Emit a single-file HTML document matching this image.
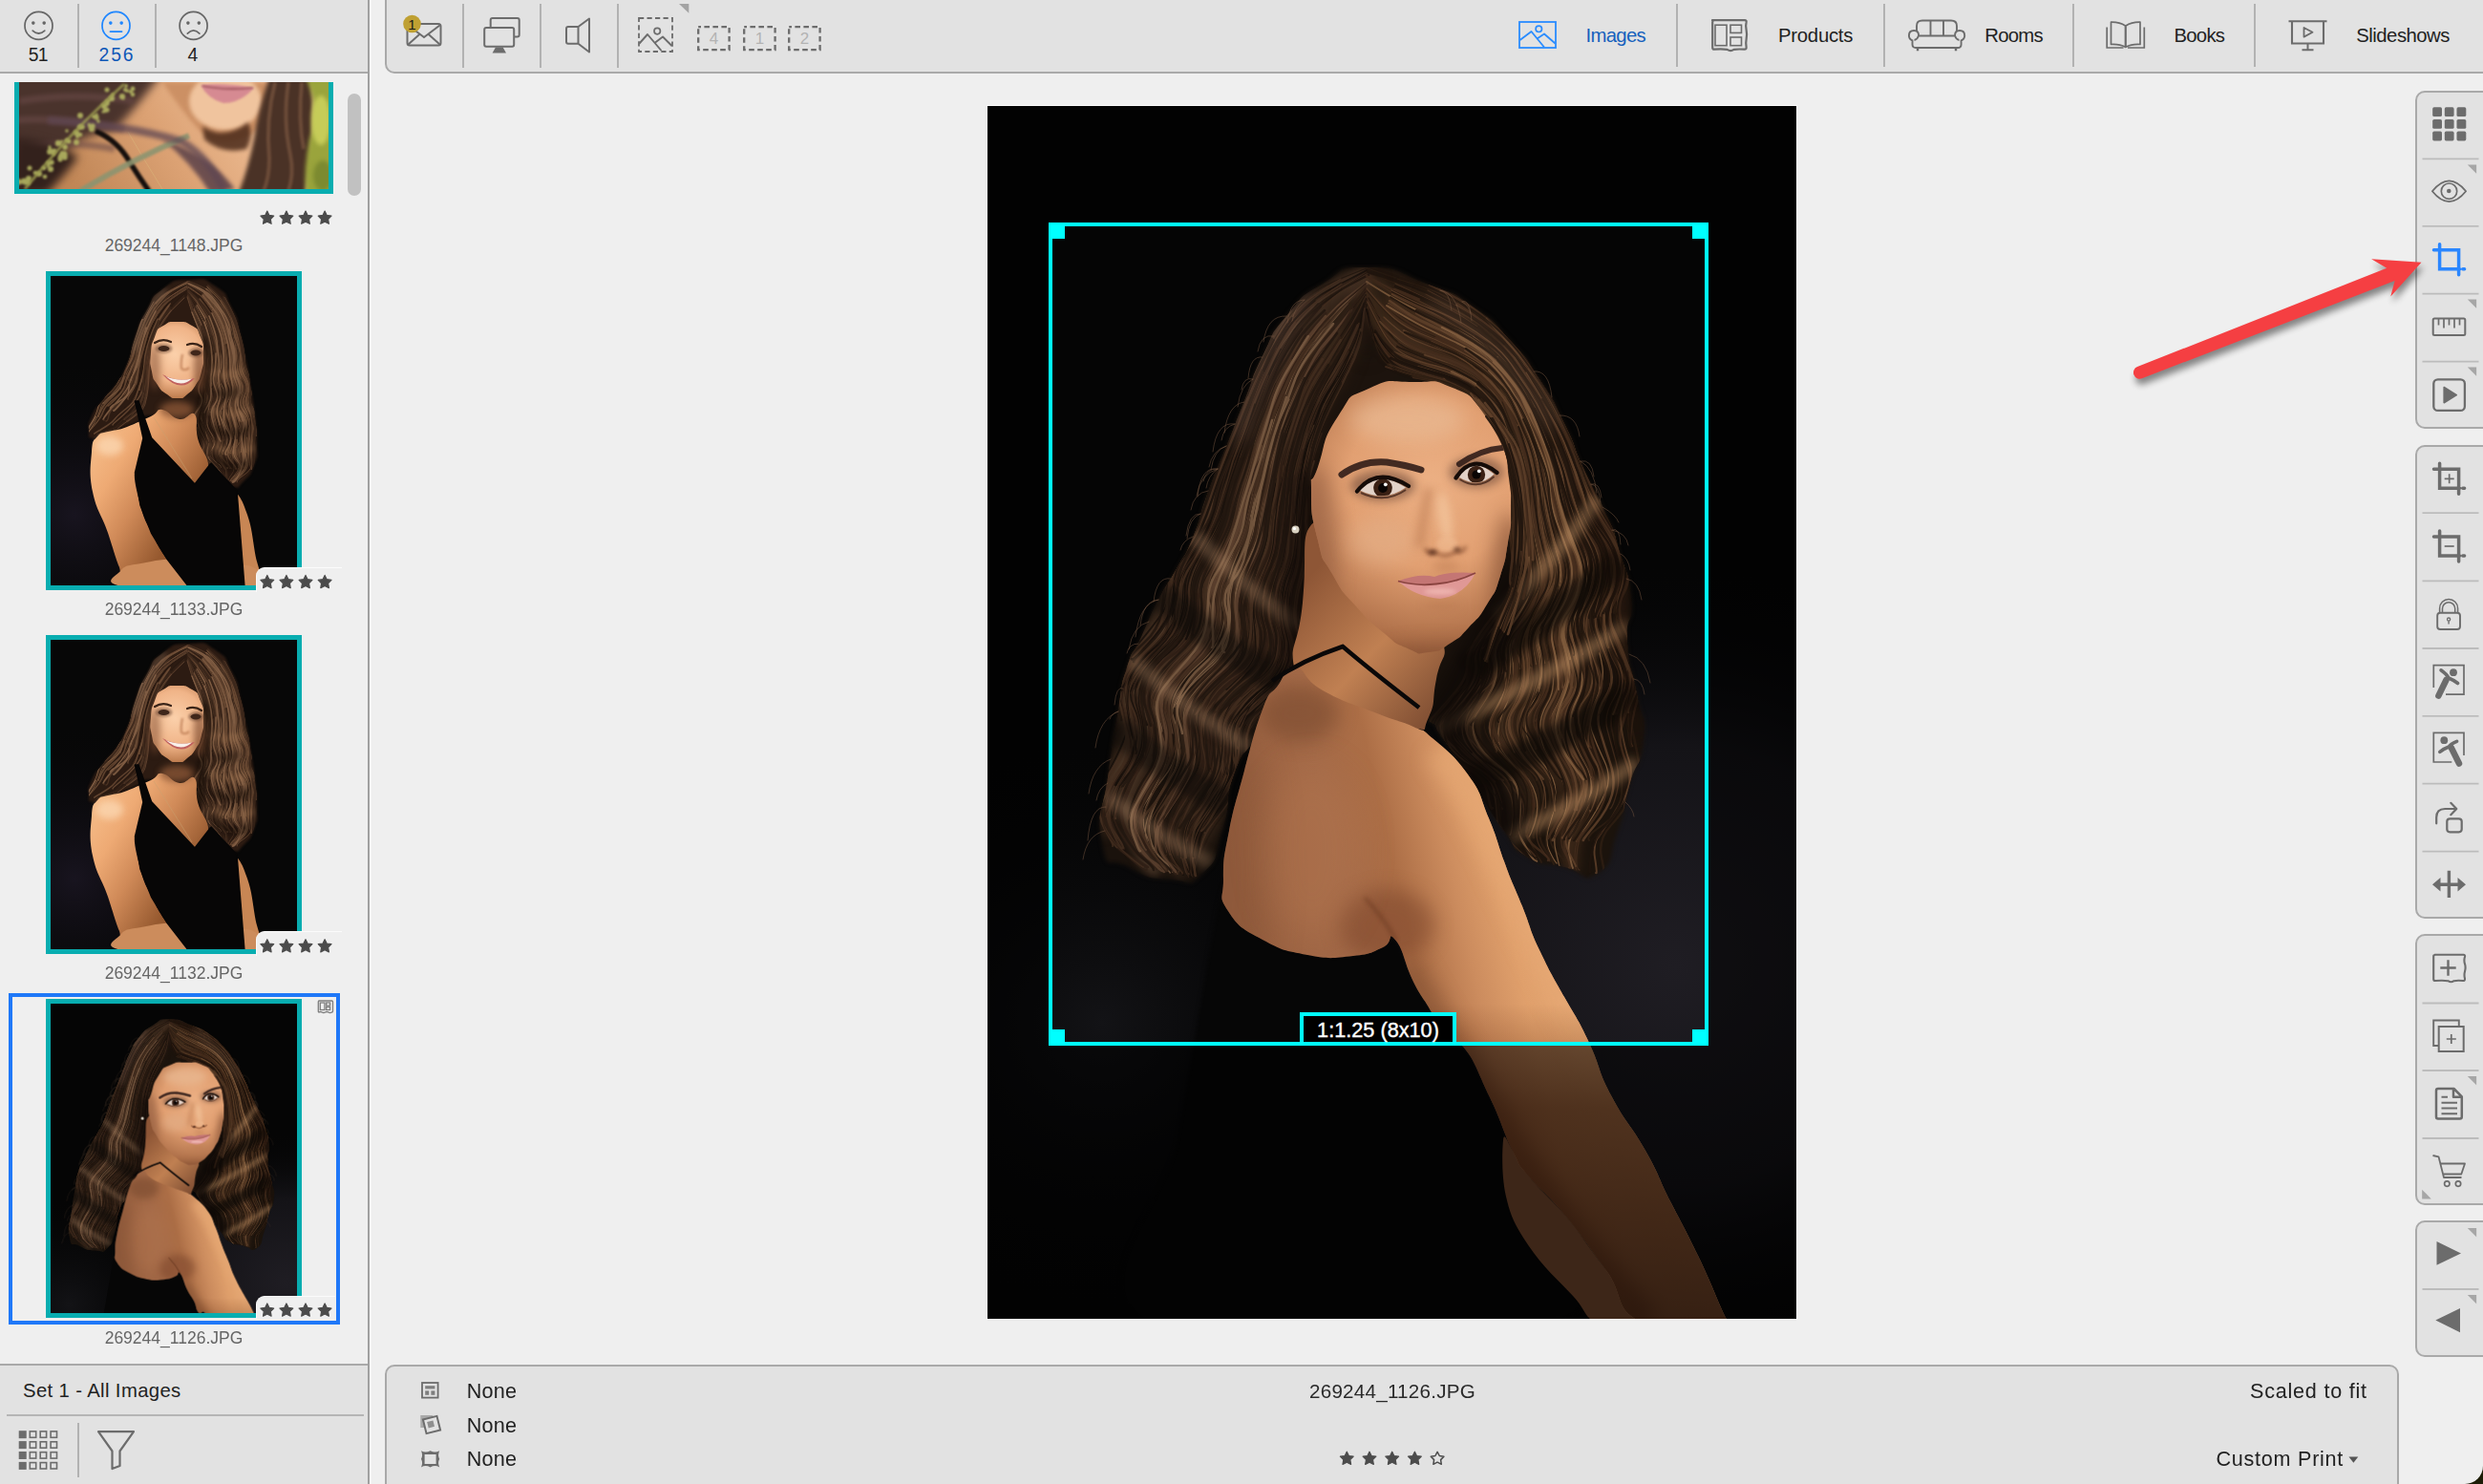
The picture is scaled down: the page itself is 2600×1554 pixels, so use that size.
<!DOCTYPE html>
<html><head><meta charset="utf-8">
<style>
*{box-sizing:border-box;margin:0;padding:0}
html,body{width:2600px;height:1554px;overflow:hidden}
body{background:#dedede;font-family:"Liberation Sans",sans-serif;position:relative}
#win{position:absolute;left:0;top:0;width:2600px;height:1554px;background:#efefef;border-radius:0 0 19px 0;overflow:hidden}
.abs{position:absolute}
.pnl{position:absolute;background:#e2e2e2;border:2px solid #a9a9a9}
.vs{position:absolute;width:2px;background:#bdbdbd}
.hs{position:absolute;height:2px;background:#bdbdbd}
.t{position:absolute;white-space:nowrap;color:#222;line-height:1}
.fn{position:absolute;white-space:nowrap;color:#666;font-size:17.5px;line-height:1;text-align:center;width:200px}
svg{position:absolute;overflow:visible}
.teal{position:absolute;background:#08adb0}
.ph{position:absolute;overflow:hidden;background:#050505}
.badge{position:absolute;background:#efefef;border-radius:9px 0 0 0}
</style></head><body>
<div class="abs" style="left:2570px;top:1524px;width:30px;height:30px;background:linear-gradient(135deg,#55551c,#1c1c06 70%)"></div>
<div id="win">
<!-- LEFT PANEL -->
<div class="abs" id="ltop" style="left:0;top:0;width:385px;height:77px;background:#e2e2e2;border-bottom:2px solid #a9a9a9"></div>
<div class="abs" id="lbot" style="left:0;top:1428px;width:385px;height:126px;background:#e2e2e2;border-top:2px solid #a9a9a9"></div>
<div class="abs" id="ldiv" style="left:385px;top:0;width:2px;height:1554px;background:#a0a0a0"></div>
<div class="abs" style="left:387px;top:0;width:2px;height:1554px;background:#f6f6f6"></div>
<!-- TOP TOOLBAR -->
<div class="pnl" id="ttb" style="left:403px;top:-4px;width:2210px;height:81px;border-radius:0 0 0 10px"></div>
<!-- INFO PANEL -->
<div class="pnl" id="info" style="left:403px;top:1429px;width:2109px;height:140px;border-radius:10px 10px 0 0"></div>
<!-- RIGHT TOOLBARS -->
<div class="pnl" id="rt1" style="left:2529px;top:95px;width:90px;height:354px;border-radius:10px 0 0 10px"></div>
<div class="pnl" id="rt2" style="left:2529px;top:466px;width:90px;height:496px;border-radius:10px 0 0 10px"></div>
<div class="pnl" id="rt3" style="left:2529px;top:978px;width:90px;height:284px;border-radius:10px 0 0 10px"></div>
<div class="pnl" id="rt4" style="left:2529px;top:1278px;width:90px;height:143px;border-radius:10px 0 0 10px"></div>

<svg style="left:0px;top:0px" width="385" height="76" viewBox="0 0 385 76" ><circle cx="40.5" cy="26.9" r="14.5" fill="none" stroke="#666" stroke-width="1.7"/><circle cx="34.8" cy="24.099999999999998" r="1.8" fill="#666"/><circle cx="46.2" cy="24.099999999999998" r="1.8" fill="#666"/><path d="M34.2,32.1 Q40.5,37.9 46.8,32.1" fill="none" stroke="#666" stroke-width="1.7" stroke-linecap="round"/><circle cx="121.5" cy="26.9" r="14.5" fill="none" stroke="#1e86ff" stroke-width="1.7"/><circle cx="115.8" cy="24.099999999999998" r="1.8" fill="#1e86ff"/><circle cx="127.2" cy="24.099999999999998" r="1.8" fill="#1e86ff"/><path d="M115.5,33.1 H127.5" fill="none" stroke="#1e86ff" stroke-width="1.9" stroke-linecap="round"/><circle cx="202.6" cy="26.9" r="14.5" fill="none" stroke="#666" stroke-width="1.7"/><circle cx="196.9" cy="24.099999999999998" r="1.8" fill="#666"/><circle cx="208.29999999999998" cy="24.099999999999998" r="1.8" fill="#666"/><path d="M196.29999999999998,35.099999999999994 Q202.6,28.5 208.9,35.099999999999994" fill="none" stroke="#666" stroke-width="1.7" stroke-linecap="round"/></svg>
<div class="t" style="left:29.7px;top:45.6px;font-size:19.3px;line-height:23.16px;letter-spacing:-0.70px;color:#222;">51</div>
<div class="t" style="left:103.5px;top:45.6px;font-size:19.3px;line-height:23.16px;letter-spacing:1.94px;color:#0d57b7;">256</div>
<div class="t" style="left:196.5px;top:45.6px;font-size:19.3px;line-height:23.16px;letter-spacing:0.00px;color:#222;">4</div>
<div class="vs" style="left:81px;top:4px;height:67px;background:#b2b2b2"></div><div class="vs" style="left:161.7px;top:4px;height:67px;background:#b2b2b2"></div>
<svg width="0" height="0" style="left:0;top:0"><defs>
<radialGradient id="bgl" cx="720" cy="900" r="420" gradientUnits="userSpaceOnUse"><stop offset="0" stop-color="#1f1d23"/><stop offset="0.55" stop-color="#141317"/><stop offset="1" stop-color="#050506" stop-opacity="0"/></radialGradient>
<radialGradient id="bgl2" cx="120" cy="960" r="300" gradientUnits="userSpaceOnUse"><stop offset="0" stop-color="#131316"/><stop offset="1" stop-color="#050506" stop-opacity="0"/></radialGradient>
<linearGradient id="hairg" x1="150" y1="200" x2="680" y2="750" gradientUnits="userSpaceOnUse"><stop offset="0" stop-color="#1f160f"/><stop offset="0.5" stop-color="#1a120c"/><stop offset="1" stop-color="#1b130c"/></linearGradient>
<radialGradient id="faceg" cx="465" cy="395" r="175" gradientUnits="userSpaceOnUse"><stop offset="0" stop-color="#ecb084"/><stop offset="0.5" stop-color="#e2a072"/><stop offset="1" stop-color="#a86a44"/></radialGradient>
<linearGradient id="neckg" x1="330" y1="500" x2="480" y2="640" gradientUnits="userSpaceOnUse"><stop offset="0" stop-color="#8e5636"/><stop offset="0.5" stop-color="#c08052"/><stop offset="1" stop-color="#7a4a30"/></linearGradient>
<linearGradient id="bodyg" x1="250" y1="770" x2="560" y2="700" gradientUnits="userSpaceOnUse"><stop offset="0" stop-color="#9a6242"/><stop offset="0.35" stop-color="#a46a48"/><stop offset="0.52" stop-color="#ac6e46"/><stop offset="0.7" stop-color="#cc8c5e"/><stop offset="0.85" stop-color="#e0a06c"/><stop offset="1" stop-color="#e4a672"/></linearGradient>
<linearGradient id="armdk" x1="0" y1="940" x2="0" y2="1270" gradientUnits="userSpaceOnUse"><stop offset="0" stop-color="#5a2408" stop-opacity="0"/><stop offset="0.33" stop-color="#5a2408" stop-opacity="0.5"/><stop offset="0.67" stop-color="#4a1c06" stop-opacity="0.62"/><stop offset="1" stop-color="#3a1606" stop-opacity="0.7"/></linearGradient>
<filter color-interpolation-filters="sRGB" id="b2" filterUnits="userSpaceOnUse" x="-60" y="-60" width="970" height="1390"><feGaussianBlur stdDeviation="2"/></filter>
<filter color-interpolation-filters="sRGB" id="b5" filterUnits="userSpaceOnUse" x="-60" y="-60" width="970" height="1390"><feGaussianBlur stdDeviation="5"/></filter>
<filter color-interpolation-filters="sRGB" id="b10" filterUnits="userSpaceOnUse" x="-60" y="-60" width="970" height="1390"><feGaussianBlur stdDeviation="10"/></filter>
<filter color-interpolation-filters="sRGB" id="b18" filterUnits="userSpaceOnUse" x="-60" y="-60" width="970" height="1390"><feGaussianBlur stdDeviation="18"/></filter>
<clipPath id="hairclip"><path d="M398,169C435,169 425,173 462,187C499,201 481,191 510,211C539,231 525,221 548,246C571,271 560,258 579,287C598,316 590,303 605,334C620,365 610,349 624,379C638,409 633,394 646,423C659,452 653,436 662,467C671,498 671,483 674,515C677,547 668,528 670,562C672,596 674,582 680,616C686,650 690,632 687,664C684,696 681,680 672,712C663,744 671,729 660,759C649,789 659,790 640,803C621,816 629,803 604,797C579,791 586,799 565,786C544,773 559,784 541,759C523,734 531,744 510,712C489,680 496,688 478,664C460,640 481,655 455,640C429,625 442,633 400,620C358,607 362,597 330,600C298,603 319,609 303,630C287,651 296,639 281,662C266,685 270,668 258,700C246,732 257,725 246,759C235,793 244,786 226,803C208,820 218,812 192,810C166,808 172,810 148,797C124,784 127,806 120,772C113,738 121,743 127,696C133,649 131,668 137,632C143,596 138,613 146,588C154,563 150,580 161,556C172,532 167,539 180,515C193,491 187,504 199,483C211,462 204,478 215,452C226,426 219,436 231,404C243,372 237,389 250,357C263,325 256,341 269,309C282,277 273,292 288,262C303,232 292,245 313,220C334,195 323,203 351,186C379,169 361,169 398,169Z"/></clipPath>
<clipPath id="faceclip"><path d="M446,289C475,289 463,285 487,295C511,305 502,301 519,320C536,339 529,330 538,353C547,376 543,367 546,390C549,413 548,400 548,422C548,444 549,434 545,457C541,480 544,470 537,492C530,514 534,504 523,522C512,540 517,532 504,546C491,560 498,554 484,563C470,572 477,570 462,572C447,574 456,575 440,568C424,561 432,566 414,551C396,536 404,544 386,524C368,504 374,513 361,490C348,467 353,484 346,455C339,426 339,430 339,404C339,378 337,404 346,378C355,352 349,352 367,325C385,298 373,308 399,296C425,284 417,289 446,289Z"/></clipPath>
<clipPath id="bodyclip"><path d="M322,588C335,589 328,599 351,612C374,625 383,626 408,636C433,646 431,643 446,650C461,657 451,649 466,662C481,675 487,678 503,700C519,722 515,722 525,746C535,770 532,766 541,791C550,816 550,813 560,838C570,863 567,861 579,886C591,911 590,908 604,933C618,958 617,953 630,981C643,1009 638,1008 654,1038C670,1068 672,1064 689,1094C706,1124 701,1120 716,1149C731,1178 729,1173 744,1204C759,1235 763,1248 772,1267C781,1286 798,1273 776,1275C754,1277 722,1290 688,1275C654,1260 669,1248 647,1218C625,1188 627,1189 606,1163C585,1137 582,1139 567,1121C552,1103 561,1116 550,1094C539,1072 540,1067 526,1038C512,1009 511,1000 498,985C485,970 487,991 478,981C469,971 474,966 465,949C456,932 456,937 446,917C436,897 436,883 427,873C418,863 426,876 414,881C402,886 404,888 383,890C362,892 360,894 335,889C310,884 310,885 288,873C266,861 263,860 252,843C241,826 247,832 247,810C247,788 247,789 253,759C259,729 260,730 269,696C278,662 279,656 288,632C297,608 295,619 304,607C313,595 309,587 322,588Z"/></clipPath>
<symbol id="p1" viewBox="0 0 847 1270" preserveAspectRatio="none">
<rect width="847" height="1270" fill="#050505"/><rect width="847" height="1270" fill="url(#bgl)"/><rect width="847" height="1270" fill="url(#bgl2)"/>
<path d="M398,169C435,169 425,173 462,187C499,201 481,191 510,211C539,231 525,221 548,246C571,271 560,258 579,287C598,316 590,303 605,334C620,365 610,349 624,379C638,409 633,394 646,423C659,452 653,436 662,467C671,498 671,483 674,515C677,547 668,528 670,562C672,596 674,582 680,616C686,650 690,632 687,664C684,696 681,680 672,712C663,744 671,729 660,759C649,789 659,790 640,803C621,816 629,803 604,797C579,791 586,799 565,786C544,773 559,784 541,759C523,734 531,744 510,712C489,680 496,688 478,664C460,640 481,655 455,640C429,625 442,633 400,620C358,607 362,597 330,600C298,603 319,609 303,630C287,651 296,639 281,662C266,685 270,668 258,700C246,732 257,725 246,759C235,793 244,786 226,803C208,820 218,812 192,810C166,808 172,810 148,797C124,784 127,806 120,772C113,738 121,743 127,696C133,649 131,668 137,632C143,596 138,613 146,588C154,563 150,580 161,556C172,532 167,539 180,515C193,491 187,504 199,483C211,462 204,478 215,452C226,426 219,436 231,404C243,372 237,389 250,357C263,325 256,341 269,309C282,277 273,292 288,262C303,232 292,245 313,220C334,195 323,203 351,186C379,169 361,169 398,169Z" fill="url(#hairg)" filter="url(#b2)"/>
<path d="M246,820C251,803 244,832 252,843C260,854 271,864 288,873C305,882 316,886 335,889C354,892 367,892 383,890C399,888 405,884 414,881C423,878 421,866 427,873C433,880 438,902 446,917C454,932 459,936 465,949C471,962 471,974 478,981C485,988 488,974 498,985C508,996 517,1017 526,1038C535,1059 541,1068 545,1090C549,1112 542,1128 548,1150C554,1172 568,1175 575,1200C582,1225 666,1260 585,1275C504,1290 247,1314 170,1275C93,1236 189,1149 200,1080C211,1011 216,982 225,930C234,878 241,837 246,820Z" fill="#060606" filter="url(#b2)"/>
<g clip-path="url(#hairclip)" fill="none" stroke-linecap="round">
<g filter="url(#b5)">
<path d="M274,304Q263,334 257,349t-13,30t-14,39t-21,45t-17,44t-19,43t-16,22" stroke="#2f1f15" stroke-width="11.0" opacity="0.55"/>
<path d="M295,285Q284,314 279,329t-11,31t-11,29t-12,36t-19,45t-12,23" stroke="#21160f" stroke-width="8.3" opacity="0.55"/>
<path d="M399,173Q369,183 356,192t-25,21t-20,24t-15,28t-14,28t-11,29t-11,31t-12,30t-13,37t-20,45t-14,43t-20,44t-20,22M315,218Q299,246 291,260t-13,28t-13,29t-12,30t-11,31t-14,38t-23,45t-17,43t-19,43t-28,46t-11,23" stroke="#5a402e" stroke-width="8.3" opacity="0.55"/>
<path d="M355,220Q334,244 327,257t-14,26t-13,28t-10,30t-8,30t-9,29t-9,37t-17,44t-11,44t-14,41t-16,21" stroke="#785a42" stroke-width="8.3" opacity="0.55"/>
<path d="M286,319Q276,347 270,362t-10,29t-12,37t-18,44t-11,44t-19,43t-29,43t-4,45t-9,47t-13,46t15,41t15,19" stroke="#785a42" stroke-width="11.0" opacity="0.55"/>
<path d="M300,295Q291,324 286,337t-9,30t-8,29t-12,37t-19,45t-10,43t-17,42t-28,43t-7,44t-10,45t-15,47t0,23M372,288Q356,312 350,326t-10,28t-6,28t-3,27t0,28t-4,35t-10,43t1,43t-6,41t-32,37t-19,37t-7,41t-21,42t-14,21M370,239Q352,264 345,277t-14,28t-11,27t-8,28t-7,28t-5,30t-6,36t-14,43t-4,43t4,22M396,209Q391,236 386,248t-10,26t-13,26t-13,26t-10,26t-7,27t-4,28t0,30t-5,35t-7,42t-2,21M357,270Q340,295 335,308t-9,29t-9,29t-6,28t-3,29t-7,37t-12,43t-1,42t-13,41t-31,39t-13,21M345,256Q330,283 323,296t-12,27t-8,29t-6,29t-7,29t-8,38t-15,44t-9,22" stroke="#422d1f" stroke-width="13.7" opacity="0.55"/>
<path d="M316,344Q307,376 305,389t-5,28t-6,37t-14,43t-6,44t-9,42t-14,21M397,175Q372,187 360,197t-25,21t-20,24t-14,27t-14,29t-11,29t-10,31t-11,30t-12,37t-20,45t-13,23" stroke="#5a402e" stroke-width="13.7" opacity="0.55"/>
<path d="M333,242Q317,267 311,282t-12,29t-10,29t-9,30t-8,28t-9,37t-19,44t-12,44t-14,43t-29,42t-9,43t-6,45t-11,23M314,264Q299,291 293,306t-10,30t-10,30t-10,28t-9,36t-19,45t-13,44t-15,42t-29,43t-14,22" stroke="#2f1f15" stroke-width="8.3" opacity="0.55"/>
<path d="M323,315Q314,346 310,359t-7,29t-5,29t-6,36t-15,44t-6,43t-9,41t-32,41t-18,20M338,293Q327,320 322,334t-8,28t-6,29t-5,29t-6,37t-13,44t-4,43t-10,40t-33,40t-13,39t-5,43t-20,43t-4,39t8,18M311,302Q301,331 295,345t-8,30t-6,30t-9,37t-17,42t-11,43t-12,43t-12,23M332,287Q322,313 316,327t-9,28t-6,30t-6,30t-7,36t-14,44t-7,43t-12,40t-32,40t-11,41t-6,43t-19,45t-9,23M289,321Q281,350 276,364t-10,30t-11,38t-18,45t-11,43t-19,43t-27,43t-5,43t4,22M388,225Q376,251 369,263t-16,25t-13,26t-10,27t-8,28t-7,30t-3,28t-5,35t-10,43t0,43t-13,42t-32,38t-12,38t-10,42t-20,43t-8,21M324,315Q313,345 310,359t-5,29t-5,29t-8,36t-13,44t-4,42t-14,42t-31,40t-10,41t-9,42t-13,21" stroke="#422d1f" stroke-width="8.3" opacity="0.55"/>
<path d="M321,352Q314,381 311,395t-4,28t-5,37t-12,43t-3,41t-11,42t-31,40t-14,39t2,20M396,203Q388,228 382,240t-13,25t-14,26t-13,27t-9,28t-8,27t-6,27t-2,30t-5,36t-9,43t0,41t-13,42t-18,22M349,304Q337,331 334,345t-7,28t-5,29t-1,29t-5,35t-10,43t-6,22M385,266Q373,293 366,305t-11,26t-10,27t-8,27t-2,28t-1,28t-3,35t-6,43t2,42t-7,41t-33,38t-19,18" stroke="#160f0b" stroke-width="8.3" opacity="0.55"/>
<path d="M320,223Q303,252 295,266t-12,29t-11,29t-12,30t-11,30t-12,37t-21,44t-15,44t-19,44t-28,44t-4,46t-8,46t-14,24" stroke="#785a42" stroke-width="13.7" opacity="0.55"/>
<path d="M398,183Q375,201 365,210t-19,22t-18,24t-16,26t-12,28t-9,31t-10,30t-9,29t-10,36t-17,44t-10,44t-17,43t-28,42t-11,20" stroke="#5a402e" stroke-width="11.0" opacity="0.55"/>
<path d="M382,260Q366,285 359,297t-13,25t-10,27t-7,29t-3,29t-2,28t-4,36t-7,42t1,41t-12,42t-32,39t-14,19M328,282Q316,311 311,325t-9,28t-6,30t-6,28t-8,36t-15,45t-8,42t-11,42t-31,41t-18,20" stroke="#2f1f15" stroke-width="13.7" opacity="0.55"/>
<path d="M377,203Q357,224 348,236t-17,25t-15,26t-13,28t-9,28t-7,30t-8,30t-10,37t-16,44t-7,43t-17,44t-30,42t-5,42t-11,44t-17,45t10,39t13,17" stroke="#21160f" stroke-width="11.0" opacity="0.55"/>
<path d="M395,209Q392,238 388,251t-10,27t-14,24t-13,25t-8,27t-6,29t-3,28t-1,27t-4,36t-7,44t2,43t-11,40t-17,19" stroke="#21160f" stroke-width="13.7" opacity="0.55"/>
<path d="M395,194Q383,215 375,227t-16,24t-16,24t-14,27t-11,27t-8,28t-6,30t-5,30t-8,36t-13,43t-5,42t-15,42t-29,41t-9,41t2,20M381,212Q364,231 355,243t-17,25t-14,28t-11,29t-10,29t-8,29t-5,28t-7,37t-16,44t-9,41t-10,42t-30,41t-13,42t4,23M272,303Q259,336 254,350t-11,29t-14,38t-22,46t-14,44t-21,42t-28,44t-1,47t-10,48t-12,48t4,24" stroke="#422d1f" stroke-width="11.0" opacity="0.55"/>
<path d="M480,226Q509,241 522,251t24,24t19,26t14,29t13,32t12,38t17,48t8,48t-7,47t3,48t-3,47t-7,24M398,200Q411,224 422,234t25,16t30,11t28,14t25,20t18,27t12,30t9,31t4,39t8,46t8,24M398,195Q416,217 426,226t25,16t31,12t27,14t23,20t19,28t15,31t9,30t5,39t10,47t0,46t-15,47t-6,44t-6,43t-6,22M548,296Q564,326 570,340t11,31t8,40t12,47t3,48t-13,46t-2,43t-3,45t9,45t9,45t-6,22M398,203Q410,233 419,244t22,17t29,10t30,12t24,18t17,26t12,31t7,31t4,40t5,47t-8,47t-22,44t-13,40t-5,19M492,264Q521,280 531,293t17,27t13,30t10,31t4,39t9,47t-5,47t-14,45t-8,42t-10,42t-4,21" stroke="#5f412a" stroke-width="13.7" opacity="0.55"/>
<path d="M544,303Q558,333 564,348t10,30t5,38t10,48t-3,48t-15,46t-5,43t-8,43t-6,21M501,252Q528,272 539,284t20,27t13,30t10,30t8,38t15,48t1,48t-10,45t-2,45t0,22M453,210Q481,224 496,231t27,18t23,24t20,28t15,30t12,29t11,38t19,48t7,49t-5,47t3,47t-2,48t6,47t-2,48t-12,24" stroke="#432c1c" stroke-width="11.0" opacity="0.55"/>
<path d="M463,189Q492,207 506,216t27,20t23,25t19,27t18,29t16,31t14,40t24,47t15,47t1,50t9,51t9,26M399,209Q408,236 415,249t22,19t30,10t29,10t25,19t17,25t11,30t7,32t1,39t2,48t-12,45t-21,43t-5,21" stroke="#432c1c" stroke-width="8.3" opacity="0.55"/>
<path d="M422,199Q449,215 463,222t29,14t28,18t24,23t19,27t15,29t13,29t10,40t16,48t8,48t-9,47t-1,46t-1,47t4,46t5,47t-10,45t-3,21M545,248Q564,277 574,290t17,30t15,30t15,38t22,48t15,48t2,25M485,277Q511,293 522,304t18,27t11,29t7,31t4,39t4,47t-12,46t-22,44t-13,42t-11,39t-4,20" stroke="#5f412a" stroke-width="11.0" opacity="0.55"/>
<path d="M515,232Q542,254 552,266t19,28t16,30t13,31t13,39t22,46t13,49t-1,25M466,248Q496,258 509,267t25,22t19,26t14,30t10,31t7,40t12,47t-5,46t-12,23M517,285Q538,309 546,323t13,30t8,30t5,40t7,48t-5,46t-20,44t-8,22M514,235Q538,256 548,269t20,28t17,28t13,30t13,40t20,47t10,48t-5,48t5,48t0,48t5,49t11,24M421,204Q447,219 461,226t29,14t28,18t23,22t19,27t15,30t11,31t10,38t15,46t5,48t-10,48t-4,23" stroke="#1f140d" stroke-width="13.7" opacity="0.55"/>
<path d="M462,259Q490,269 504,277t25,19t18,26t11,29t9,32t6,39t7,47t-7,47t-17,45t-8,42t-4,22M557,286Q573,317 581,332t13,30t10,39t17,47t8,47t-7,47t3,47t-1,48t5,47t1,46t-12,45t-2,22M399,171Q429,181 445,186t32,14t28,17t27,20t23,24t19,28t18,29t15,31t14,39t22,47t17,48t3,24" stroke="#2e1e13" stroke-width="11.0" opacity="0.55"/>
<path d="M405,238Q422,262 437,268t29,9t29,10t25,20t18,26t11,30t7,31t1,39t4,47t-12,46t-16,23M530,270Q552,296 558,310t13,28t13,31t9,40t14,47t0,47t-9,47t-1,45t-7,44t11,46t6,46t-3,44t6,22" stroke="#1f140d" stroke-width="8.3" opacity="0.55"/>
<path d="M554,290Q571,318 577,334t12,31t9,39t17,47t6,47t-8,48t0,48t4,23M473,237Q502,251 516,260t25,22t18,26t14,30t11,31t8,38t14,48t3,48t-10,46t-1,45t3,23" stroke="#2e1e13" stroke-width="8.3" opacity="0.55"/>
<path d="M506,248Q531,266 542,278t19,28t14,29t12,31t10,39t14,47t6,46t-9,48t-1,47t4,23" stroke="#1f140d" stroke-width="11.0" opacity="0.55"/>
<path d="M445,223Q476,236 489,243t27,17t25,22t19,26t14,29t12,32t8,39t15,47t2,47t-10,46t0,46t-5,46t10,45t5,45t-5,44t5,22" stroke="#432c1c" stroke-width="13.7" opacity="0.55"/>
<path d="M511,237Q538,258 547,271t19,27t16,30t13,31t13,39t17,49t7,47t-4,48t3,47t2,23M461,259Q490,271 504,278t24,18t17,27t12,30t8,31t5,40t8,46t-7,48t-17,44t-9,41t-10,41t16,43t19,43t-2,21M483,278Q512,293 523,305t18,27t10,29t6,30t3,39t5,47t-12,47t-20,43t-14,40t-13,39t22,42t22,42t-1,21M399,180Q424,195 438,203t28,15t29,14t28,17t24,24t19,28t16,29t12,30t11,39t18,48t12,25M545,304Q559,332 564,347t10,31t7,38t10,47t-2,46t-14,46t-6,44t-7,44t12,44t18,21M422,204Q446,217 460,225t29,16t28,16t24,21t20,26t15,31t11,32t11,38t16,47t2,47t-7,47t0,46t0,23" stroke="#5f412a" stroke-width="8.3" opacity="0.55"/>
<path d="M425,196Q451,211 466,218t29,15t27,16t24,24t19,28t16,29t12,30t10,39t19,47t7,47t-5,49t4,49t-3,46t6,46t13,24M416,213Q439,233 454,239t29,12t28,15t25,22t19,27t13,29t10,30t8,40t10,47t0,47t-12,45t-4,45t-7,45t12,43t10,44t-7,22" stroke="#2e1e13" stroke-width="13.7" opacity="0.55"/>
</g>
<path d="M313,380Q310,410 307,423t-3,29t-8,31t-9,29t1,29t-2,30t-21,29t-24,27t-7,26t0,28t-2,15M314,343Q306,372 303,387t-7,28t-4,30t-9,32t-11,29t-1,29t-1,29t-20,29t-27,28t-7,27t3,28t-11,30t-18,31t-4,31t10,25t7,11M294,287Q284,315 278,329t-11,31t-10,30t-8,30t-13,32t-16,30t-7,28t-6,30t-22,31t-22,31t-2,31t4,31t-13,32t-12,17M397,208Q391,235 387,248t-10,26t-15,25t-12,26t-8,28t-8,28t-3,28t-1,29t-3,28t-6,29t-6,30t5,29t0,31t-20,27t-26,25t-10,26t-1,25t-10,27t-21,30t-10,29t1,14M309,257Q294,285 288,299t-10,31t-11,30t-11,29t-7,30t-11,33t-17,30t-10,29t-5,30t-21,30t-25,29t-2,31t7,17M396,198Q384,219 377,230t-16,25t-15,25t-13,26t-11,27t-8,29t-6,29t-5,29t-5,29t-8,31t-8,30t0,30t-3,29t-23,28t-23,26t-5,27t0,29t-14,29t-18,30t-2,30t5,15M302,291Q289,323 284,336t-9,29t-8,30t-8,30t-11,32t-16,31t-8,28t-2,30t-19,30t-26,30t-6,31t5,31t-9,32t-16,31t0,31t7,16M342,297Q329,323 326,337t-7,29t-6,29t-4,28t-4,30t-8,30t-10,31t0,30t2,28t-2,14" stroke="#21160f" stroke-width="1.9" opacity="0.85"/>
<path d="M294,363Q287,395 284,409t-5,29t-10,30t-13,30t-4,30t-1,29t-18,28t-26,29t-9,29t3,29t-9,31t-18,32t-4,31t15,25t9,11M305,298Q295,326 290,341t-10,29t-8,29t-7,30t-10,32t-16,31t-6,29t-2,28t-19,30t-27,31t-7,30t4,15M331,284Q318,310 313,324t-10,29t-7,29t-6,30t-5,29t-10,30t-13,30t-2,29t1,31t-19,29t-28,28t-8,28t3,14M337,244Q322,270 315,285t-12,30t-11,28t-8,28t-8,31t-7,30t-10,30t-14,31t-6,30t-2,30t-19,29t-26,29t-7,29t4,30t1,16M348,258Q331,283 325,296t-11,29t-9,29t-8,30t-6,28t-5,29t-10,32t-11,30t-2,28t-2,29t-20,30t-25,28t-6,28t4,16" stroke="#785a42" stroke-width="1.9" opacity="0.85"/>
<path d="M286,317Q277,349 272,362t-10,29t-10,32t-11,31t-15,30t-6,29t-6,30t-23,29t-24,30t0,31t3,32t-13,32t-14,33t-4,17M398,185Q376,203 366,213t-18,21t-18,24t-16,28t-12,27t-10,29t-9,30t-8,31t-6,29t-10,31t-14,31t-5,29t-3,28t-20,29t-24,29t-7,30t3,31t0,16M370,185Q345,202 332,213t-20,25t-16,27t-14,29t-11,31t-10,30t-11,28t-9,31t-13,33t-18,30t-12,30t-4,29t-19,29t-25,31t-4,32t6,34t-9,33t-17,32t2,33t24,27t16,10M381,213Q366,236 357,248t-16,24t-14,28t-12,28t-9,28t-6,29t-5,29t-5,29t-8,31t-13,29t-3,31t0,30t-18,28t-28,27t-11,13M348,305Q337,330 333,344t-7,29t-6,29t-3,28t-2,30t-8,30t-7,28t4,30t0,29t-22,27t-26,27t-7,27t-1,27t-12,28t-9,15M276,348Q268,376 262,391t-9,31t-12,32t-16,30t-6,28t-6,30t-23,31t-22,30t0,31t3,32t-14,32t-15,32t6,33t9,16M312,260Q299,290 293,304t-12,29t-9,30t-10,29t-9,31t-12,32t-16,30t-6,30t-4,29t-22,29t-23,30t-6,16M364,234Q348,259 340,271t-15,26t-11,28t-9,30t-7,30t-6,29t-5,29t-10,30t-11,31t-1,28t-1,30t-21,29t-27,28t-7,28t4,28t-10,30t-20,32t-8,16M323,353Q318,383 315,398t-4,29t-2,28t-6,30t-10,30t-1,30t3,30t-17,27t-28,27t-12,26t1,27t1,14M289,277Q276,307 269,321t-11,31t-11,30t-9,30t-11,31t-20,31t-15,30t-3,30t-16,30t-26,31t-5,32t7,33t-8,34t-17,33t0,33t25,27t18,10M302,371Q295,400 293,413t-4,29t-9,30t-12,31t-4,30t1,30t-18,29t-28,28t-9,28t3,28t-6,30t-18,31t-10,15M353,268Q338,291 332,305t-10,29t-9,29t-6,29t-4,28t-4,29t-8,31t-10,30t-1,29t-1,29t-19,29t-26,28t-8,26t2,28t-11,29t-19,31t-6,30t2,16M347,207Q326,228 317,242t-16,27t-14,29t-10,30t-10,29t-11,31t-9,31t-13,32t-17,30t-8,29t-5,29t-23,29t-23,30t0,32t5,32t-14,33t-17,33t7,33t23,27t12,10M396,191Q380,212 373,223t-17,23t-18,25t-13,26t-11,29t-9,29t-7,28t-7,29t-5,30t-9,31t-12,30t-3,29t-1,30t-3,15M344,204Q322,224 313,237t-16,28t-13,30t-11,30t-12,29t-11,30t-8,31t-14,33t-17,30t-8,30t-6,29t-23,30t-24,30t0,32t5,33t-12,33t-15,32t6,33t9,17M359,226Q338,249 331,261t-15,27t-13,29t-9,28t-8,29t-8,31t-7,30t-9,30t-14,31t-7,29t0,29t-18,28t-27,30t-7,29t5,30t-9,31t-18,32t-8,17M359,276Q345,301 339,315t-10,28t-7,28t-6,28t-2,28t-2,29t-8,30t-11,31t0,29t2,28t-16,28t-27,26t-13,27t1,27t2,13M380,213Q366,235 357,246t-17,24t-14,27t-12,29t-9,29t-6,29t-6,29t-5,30t-9,29t-13,30t-2,29t-2,30t-20,29t-26,29t-7,28t3,28t-12,31t-18,32t-3,30t11,25t8,11M278,349Q268,379 263,393t-8,31t-12,31t-15,30t-7,29t-4,30t-22,30t-24,30t-2,31t5,15M398,172Q371,188 357,196t-24,19t-19,23t-17,28t-14,31t-11,28t-10,29t-11,31t-9,30t-12,33t-18,31t-11,29t-4,29t-20,30t-15,15M388,230Q378,253 370,265t-15,25t-13,26t-10,28t-6,28t-4,28t-3,29t-4,30t-8,30t-6,30t4,29t-1,30t-21,27t-26,25t-10,28t1,27t-11,28t-18,29t-9,15M363,231Q346,255 337,267t-16,26t-11,29t-8,29t-8,29t-6,29t-5,30t-9,30t-14,30t-5,29t0,29t-17,30t-15,16M326,356Q320,384 318,399t-4,30t-2,29t-7,30t-10,29t0,29t3,29t-15,29t-30,26t-14,26t2,27t2,14M342,199Q318,222 310,235t-15,28t-13,29t-12,29t-12,31t-12,30t-11,31t-12,32t-16,29t-9,30t-7,29t-23,31t-22,32t2,32t7,16M341,295Q329,324 325,337t-8,27t-6,29t-3,30t-4,29t-9,29t-10,30t0,29t1,30t-19,29t-27,27t-11,26t1,14M350,343Q340,369 338,384t-2,30t-1,28t-2,27t-6,29t-5,30t6,31t2,29t-20,28t-27,25t-11,24t-1,24t-11,27t-19,29t-10,15" stroke="#2f1f15" stroke-width="1.9" opacity="0.85"/>
<path d="M362,278Q348,304 341,317t-11,26t-6,28t-4,29t-4,29t-3,29t-8,30t-8,29t3,30t1,30t-21,28t-27,26t-10,13M396,194Q382,214 373,224t-16,23t-17,26t-14,26t-11,27t-8,29t-7,30t-7,29t-5,29t-10,31t-10,30t0,30t-2,29t-6,14M369,288Q355,312 349,324t-10,27t-7,29t-2,29t-2,28t-2,28t-6,31t-9,29t3,29t5,28t-16,28t-29,26t-15,25t0,26t-5,28t-19,30t-15,29t-3,23t0,11M358,275Q343,299 338,312t-10,29t-7,28t-5,28t-4,29t-4,30t-6,29t-10,29t-2,30t3,30t0,15M397,170Q368,181 354,188t-26,19t-20,25t-17,28t-14,30t-11,31t-11,29t-12,29t-11,31t-13,32t-19,31t-12,30t-6,30t-19,30t-24,30t-8,15M336,367Q331,395 329,408t-1,29t-2,29t-6,29t-6,31t5,29t3,28t-19,27t-28,27t-13,25t0,25t-9,28t-19,30t-12,29t-2,14M335,397Q334,426 334,440t-1,29t-6,29t-6,29t3,30t3,30t-15,27t-29,24t-15,26t-1,26t-6,26t-17,30t-17,29t-5,13M307,254Q294,283 287,298t-11,30t-10,30t-12,30t-9,31t-11,31t-17,29t-10,30t-4,30t-20,30t-24,30t-8,15M395,206Q388,230 383,243t-11,26t-15,25t-14,26t-9,28t-6,28t-4,28t-3,28t-1,29t-7,30t-11,31t1,29t4,29t-15,28t-13,13M366,280Q349,307 343,320t-9,27t-6,28t-4,30t-3,27t-2,29t-7,30t-8,29t4,30t0,28t-21,27t-26,27t-8,25t0,27t-13,30t-10,15M322,315Q314,343 309,357t-7,30t-5,29t-5,30t-8,31t-12,29t-1,29t0,29t-21,29t-27,27t-7,27t2,29t-10,31t-18,31t-6,30t3,16M385,224Q372,245 365,258t-15,27t-14,25t-11,26t-8,30t-6,29t-4,28t-3,29t-8,30t-9,30t0,30t0,30t-21,27t-26,27t-7,28t2,27t-11,29t-21,30t-9,15M395,201Q385,222 378,233t-15,24t-15,26t-13,27t-11,26t-7,29t-6,29t-3,28t-4,30t-8,30t-11,30t0,29t1,30t-20,28t-26,27t-11,13M398,174Q373,190 360,198t-24,19t-20,25t-16,29t-12,29t-12,29t-10,29t-10,29t-9,31t-12,32t-17,30t-8,30t-4,30t-22,29t-16,15M358,315Q348,342 344,356t-6,28t-3,28t-1,29t-1,28t-6,30t-7,30t5,29t5,28t-17,28t-28,26t-17,24t-1,26t-5,28t-5,14M309,341Q303,370 300,385t-7,28t-5,30t-8,31t-13,29t-3,30t1,29t-19,29t-27,28t-8,28t2,28t0,15M333,240Q317,265 309,278t-13,29t-10,31t-10,29t-8,29t-7,30t-12,31t-16,31t-6,30t-3,30t-19,29t-25,29t-7,29t5,32t-10,32t-17,32t1,32t7,17M346,207Q326,229 316,242t-17,28t-12,29t-12,29t-11,30t-9,30t-9,30t-13,31t-16,30t-9,30t-6,30t-22,31t-16,14M313,346Q306,373 303,387t-5,29t-5,30t-8,30t-10,30t-2,30t-2,29t-20,29t-26,28t-6,27t1,28t-11,31t-18,30t-4,31t5,16M320,350Q313,379 310,393t-5,30t-3,29t-6,29t-12,30t-2,29t2,29t-17,30t-28,27t-13,26t2,28t-4,30t-18,29t-12,29t6,26t6,11M340,332Q330,361 326,375t-4,28t-1,28t-2,29t-9,31t-8,30t3,28t1,28t-19,29t-27,27t-10,25t0,26t-8,29t-20,30t-10,14" stroke="#21160f" stroke-width="1.3" opacity="0.85"/>
<path d="M378,205Q360,226 350,237t-19,25t-14,27t-12,29t-9,29t-7,28t-8,30t-7,30t-11,31t-11,31t-3,28t-5,29t-22,30t-24,29t-3,28t3,31t-14,32t-18,30t1,31t6,16M316,307Q303,334 299,349t-7,30t-7,29t-6,30t-10,30t-12,30t-3,31t-2,30t-19,29t-27,27t-10,14M377,207Q359,228 350,239t-17,25t-14,27t-11,27t-10,29t-8,30t-6,29t-6,31t-9,31t-16,30t-6,29t1,30t-18,28t-27,28t-9,29t5,30t-7,31t-19,31t-7,32t15,26t10,11M398,186Q376,204 367,214t-19,21t-19,24t-14,27t-12,30t-9,29t-8,29t-8,28t-7,29t-11,32t-15,31t-4,29t-2,29t-21,29t-26,30t-5,30t4,30t-10,31t-17,30t-2,32t16,26t11,10" stroke="#785a42" stroke-width="1.3" opacity="0.85"/>
<path d="M397,172Q370,186 357,193t-25,19t-20,25t-16,28t-13,30t-11,30t-11,29t-12,30t-10,31t-11,31t-17,31t-13,30t-4,29t-19,30t-25,30t-4,31t6,34t-8,34t-9,16M300,245Q286,274 278,290t-13,30t-11,29t-13,30t-11,31t-13,32t-18,30t-8,30t-8,29t-24,31t-22,31t3,32t5,33t-15,33t-14,34t0,17M387,228Q378,255 370,266t-14,24t-14,26t-9,27t-7,30t-5,29t-3,29t-2,28t-7,29t-8,30t3,29t0,29t-22,29t-15,14M369,284Q352,312 347,324t-8,26t-6,29t-4,28t-2,29t-3,29t-7,29t-4,30t5,29t-2,30t-22,28t-25,24t-7,25t-2,26t-13,28t-19,30t-9,16M383,263Q372,289 365,302t-13,26t-10,28t-5,28t-3,27t-2,28t-2,28t-5,30t-6,31t4,30t1,29t-18,26t-27,25t-12,25t0,25t-10,28t-9,16M368,287Q355,310 349,324t-10,27t-7,29t-3,28t-1,28t-1,29t-7,30t-7,29t4,29t1,30t-20,28t-27,26t-12,25t0,13M336,288Q325,318 319,331t-9,28t-7,30t-5,29t-4,28t-9,30t-9,31t0,30t-1,29t-22,28t-26,28t-6,28t2,29t-12,28t-19,31t-4,31t10,25t7,11M325,390Q325,418 323,433t-3,30t-6,28t-8,30t1,31t3,29t-17,26t-28,26t-12,14M326,320Q318,347 314,362t-7,29t-5,29t-3,29t-9,30t-10,30t1,29t-2,30t-24,29t-23,26t-4,27t3,14" stroke="#160f0b" stroke-width="1.9" opacity="0.85"/>
<path d="M327,320Q319,349 314,363t-6,29t-4,29t-5,30t-7,30t-8,29t0,29t-3,31t-21,28t-25,26t-6,27t2,29t-13,29t-19,31t-4,30t4,14M298,328Q289,357 284,371t-9,30t-6,31t-11,30t-13,30t-5,30t-3,30t-21,29t-25,28t-4,30t3,30t-12,31t-17,33t1,32t17,25t9,10M291,283Q278,311 272,326t-10,31t-10,29t-9,30t-14,32t-16,32t-8,28t-7,28t-24,30t-22,32t2,31t4,33t-14,32t-11,16M280,310Q266,339 262,354t-11,31t-10,31t-12,31t-17,30t-8,29t-7,30t-23,31t-22,31t-1,31t6,16M354,217Q333,241 325,254t-14,28t-12,28t-10,28t-10,30t-8,30t-8,30t-11,31t-14,30t-4,29t-5,30t-24,30t-22,30t-2,30t2,31t-13,32t-11,16M372,191Q349,209 339,221t-20,26t-16,27t-12,28t-11,30t-9,30t-10,30t-10,29t-12,32t-15,31t-5,29t-5,29t-25,29t-23,31t0,31t3,32t-14,33t-15,31t6,33t20,27t11,10M371,291Q359,317 353,329t-10,27t-7,28t-3,28t0,29t0,29t-5,28t-6,29t5,30t1,29t-21,28t-27,26t-10,23t-1,25t-1,13M341,294Q330,321 325,336t-9,28t-7,29t-3,29t-3,29t-9,31t-10,29t1,30t0,30t-19,27t-27,27t-10,27t2,28t-10,30t-9,16M278,349Q269,378 264,393t-8,31t-12,31t-15,30t-6,29t-5,31t-24,30t-23,29t-1,32t4,30t-1,14M369,285Q355,311 349,324t-10,27t-7,27t-3,29t-2,28t-2,29t-6,29t-7,30t3,30t2,30t-18,27t-27,25t-13,26t-1,27t-8,27t-19,30t-13,28t-1,14M391,234Q380,261 374,273t-13,25t-13,26t-9,27t-7,28t-3,29t-3,29t-1,28t-6,29t-8,30t3,30t3,29t-17,27t-15,14M310,343Q303,371 300,385t-6,29t-4,29t-9,31t-13,30t-2,29t0,29t-19,29t-27,28t-9,28t4,29t-10,31t-19,31t-6,29t4,15M330,325Q322,351 319,366t-6,30t-4,29t-4,29t-8,30t-9,30t1,29t0,29t-20,28t-26,27t-9,27t0,27t0,15M286,276Q274,306 268,320t-11,31t-12,31t-10,29t-14,31t-17,31t-8,30t-8,31t-24,31t-16,15M325,320Q315,348 311,362t-6,29t-4,28t-3,29t-9,31t-12,29t-2,30t1,30t-18,28t-27,27t-9,28t2,27t-7,30t-18,31t-10,30t8,25t7,10M307,298Q295,328 290,342t-9,29t-7,30t-7,29t-12,30t-13,32t-4,29t-4,29t-22,30t-25,30t-2,30t3,30t-1,16M349,262Q334,288 327,301t-12,27t-8,28t-7,30t-5,29t-5,29t-9,31t-10,30t-1,29t-1,29t-21,29t-26,27t-7,29t2,29t-10,29t-19,31t-5,31t4,16M326,319Q318,347 314,362t-7,29t-5,28t-3,30t-9,30t-10,30t0,30t-2,29t-21,29t-25,27t-8,28t2,28t0,14M369,242Q354,268 345,280t-13,26t-10,28t-9,28t-6,28t-4,28t-5,31t-10,31t-9,30t2,29t-2,29t-23,28t-24,27t-5,27t1,28t-13,30t-11,15" stroke="#2f1f15" stroke-width="2.5" opacity="0.85"/>
<path d="M334,287Q321,316 316,330t-8,28t-6,29t-6,29t-5,29t-8,30t-11,29t-2,30t0,30t-18,29t-28,28t-10,27t3,28t-7,29t-20,31t-7,32t4,16M391,235Q380,260 373,272t-14,25t-12,26t-9,28t-6,28t-4,28t-2,28t-1,28t-6,30t-8,31t3,30t3,29t-2,14M383,212Q364,235 356,247t-15,25t-14,27t-12,28t-9,28t-6,29t-7,29t-5,30t-10,30t-11,30t0,30t-2,29t-23,29t-24,28t-5,28t2,29t-12,30t-18,31t-4,32t11,24t8,9M298,330Q287,359 284,372t-8,29t-7,32t-8,30t-15,30t-9,31t-2,28t-16,28t-26,30t-8,30t3,15M397,186Q376,203 366,212t-19,22t-17,25t-14,26t-12,29t-10,30t-10,30t-7,28t-7,31t-10,31t-15,30t-5,30t-1,29t-20,29t-26,29t-6,29t4,30t-10,30t-19,32t0,33t17,26t10,10M374,191Q349,211 338,222t-20,25t-14,27t-13,29t-11,30t-10,29t-10,29t-8,30t-11,32t-15,31t-8,29t-5,29t-21,29t-25,31t-1,32t5,31t-14,32t-13,17M328,394Q328,422 326,436t-2,29t-7,29t-7,30t5,30t2,29t-20,28t-28,24t-12,12M378,258Q366,282 358,294t-13,26t-9,28t-7,28t-5,28t-3,30t-2,28t-5,29t-8,30t1,29t2,29t-17,28t-27,26t-14,26t0,27t-6,27t-17,29t-11,16M371,186Q344,204 333,214t-20,25t-15,28t-12,30t-13,29t-11,29t-10,30t-10,32t-13,31t-17,30t-7,30t-7,30t-7,15M289,279Q278,310 272,326t-11,29t-11,29t-9,32t-11,32t-18,30t-12,29t-3,30t-19,30t-26,31t-3,32t6,32t-9,31t-16,34t-6,17M310,339Q299,368 296,383t-6,29t-5,30t-9,31t-12,29t-2,29t-2,29t-20,30t-26,29t-6,28t3,28t-10,30t-19,30t-5,31t13,27t9,11M396,199Q386,222 378,234t-15,24t-15,25t-12,25t-10,28t-8,28t-7,30t-4,29t-3,29t-8,30t-11,29t0,30t1,29t-4,14M347,341Q338,369 336,382t-4,29t-2,28t-1,28t-6,30t-5,30t7,29t0,30t-22,28t-16,13M342,334Q334,364 331,378t-4,27t-2,28t-3,30t-7,29t-7,29t3,30t2,30t-19,27t-28,26t-11,26t0,26t-8,28t-18,30t-13,29t-1,14M308,339Q297,367 295,381t-6,29t-6,30t-9,30t-13,30t-2,30t-2,29t-20,28t-27,29t-5,29t3,30t-12,30t-18,31t-8,16M387,229Q379,254 371,266t-16,25t-13,27t-9,27t-8,28t-5,28t-2,28t-3,30t-7,30t-8,29t2,30t0,30t-18,28t-26,26t-11,25t0,13M305,370Q298,400 296,415t-5,30t-10,30t-11,30t1,30t-3,29t-23,29t-24,28t-4,27t1,28t-15,30t-18,30t0,32t6,16M309,298Q296,330 292,344t-8,29t-8,29t-8,29t-11,30t-13,31t-4,30t-5,30t-23,29t-22,28t-1,31t2,31t-3,15M293,323Q281,352 276,367t-9,29t-7,29t-9,32t-17,31t-9,31t-1,29t-18,28t-26,29t-7,30t6,32t-9,32t-17,33t-7,17M388,229Q379,254 372,267t-15,25t-14,25t-9,28t-7,29t-5,28t-3,28t-3,30t-7,30t-7,30t3,29t-1,29t-21,28t-26,26t-7,26t0,27t-3,14M310,377Q307,407 303,420t-4,30t-7,30t-12,29t-1,29t2,30t-20,28t-27,26t-10,28t3,29t-7,30t-20,30t-10,29t7,25t7,10M304,295Q294,325 288,339t-9,30t-7,29t-8,29t-11,31t-15,32t-7,30t-2,30t-19,29t-27,29t-7,30t5,30t1,15M370,181Q341,198 329,209t-20,25t-16,28t-14,29t-12,30t-11,30t-11,30t-10,31t-12,31t-19,31t-14,30t-3,29t-17,30t-25,31t-6,32t8,33t-8,34t-18,34t-7,16M397,188Q379,204 368,214t-19,22t-17,24t-16,28t-11,30t-9,29t-8,29t-8,29t-7,31t-11,30t-13,29t-2,29t-5,29t-23,30t-24,30t-2,29t3,29t-13,31t-17,33t-6,16M279,351Q269,380 264,394t-7,31t-12,31t-16,30t-6,29t-3,29t-22,31t-24,30t-3,29t5,16M379,257Q365,281 358,293t-13,26t-10,28t-6,28t-6,29t-1,28t-2,30t-8,30t-6,29t4,29t-1,29t-23,29t-24,25t-7,25t-1,27t-12,28t-20,30t-9,15" stroke="#422d1f" stroke-width="1.3" opacity="0.85"/>
<path d="M323,315Q311,344 308,358t-6,29t-6,29t-4,29t-8,30t-13,30t-4,29t1,29t-16,30t-28,28t-11,27t4,28t-7,30t-19,31t-10,17M289,357Q281,387 277,402t-7,30t-11,30t-15,31t-6,30t-2,29t-18,29t-26,29t-11,16M318,266Q303,296 298,310t-11,29t-9,29t-8,30t-8,30t-11,30t-15,30t-5,30t-6,31t-23,28t-21,29t-1,31t5,15M339,248Q324,273 316,287t-13,28t-8,29t-7,30t-8,30t-8,31t-11,30t-13,30t-4,30t-3,29t-21,29t-24,28t-5,30t3,16" stroke="#5a402e" stroke-width="1.3" opacity="0.85"/>
<path d="M260,336Q248,365 243,380t-9,31t-12,32t-20,31t-12,29t-5,30t-20,30t-23,31t-3,33t6,32t-10,33t-16,34t5,33t24,27t15,11M294,285Q284,316 279,331t-11,30t-10,29t-8,31t-12,31t-18,30t-10,29t-4,29t-17,31t-26,30t-7,31t7,32t2,17M331,239Q316,266 309,279t-12,27t-10,30t-10,31t-9,30t-7,29t-12,32t-16,31t-6,28t-4,30t-20,29t-24,29t-8,15M346,339Q338,369 335,383t-4,27t-1,28t0,30t-5,29t-8,30t1,29t4,28t-15,28t-30,26t-15,25t0,26t-4,27t-17,28t-17,30t-6,23t0,9M342,372Q334,399 333,413t1,27t0,30t-6,30t-5,30t5,29t0,28t-21,27t-16,13M289,359Q284,390 280,404t-7,30t-11,32t-15,29t-5,29t0,30t-2,14M327,356Q318,386 317,400t-2,28t-3,29t-7,30t-9,30t2,30t1,29t-20,28t-27,26t-11,26t1,28t-8,28t-18,29t-11,30t-2,16M395,212Q393,238 388,251t-10,26t-12,25t-13,26t-10,27t-6,28t-3,29t-2,28t-1,28t-5,30t-5,29t5,29t-1,29t-23,28t-23,26t-8,24t1,13M396,188Q378,205 368,216t-18,23t-18,25t-14,27t-10,27t-10,29t-9,29t-7,30t-7,30t-9,31t-14,30t-3,29t-1,29t-4,15M362,230Q344,252 335,265t-16,27t-11,27t-10,30t-8,29t-7,29t-5,30t-9,32t-14,29t-4,30t-1,29t-21,28t-25,28t-6,29t3,31t-9,31t-19,31t-4,30t5,16M310,340Q301,368 297,382t-6,29t-4,30t-9,31t-13,31t-2,30t-1,28t-20,28t-26,28t-8,28t2,29t-10,31t-19,31t-4,30t13,26t9,12M338,248Q323,273 316,287t-13,29t-9,28t-8,28t-9,30t-7,30t-9,31t-15,31t-7,29t0,29t-18,30t-27,29t-7,30t5,30t-9,31t-10,17M320,222Q301,247 294,262t-13,30t-12,29t-12,30t-11,30t-10,31t-12,32t-19,30t-14,30t-4,30t-17,30t-26,32t-5,32t8,32t-7,33t-18,32t1,33t8,17M366,238Q350,260 342,273t-14,28t-12,28t-8,28t-6,30t-6,29t-5,30t-7,29t-12,30t-4,30t1,30t-16,28t-28,28t-12,14M395,212Q392,238 388,251t-10,26t-14,26t-13,25t-9,27t-6,28t-4,29t-1,29t-1,29t-6,28t-3,29t6,30t-1,29t-22,27t-26,25t-8,24t-2,26t-12,28t-19,30t-9,15M394,212Q393,239 389,252t-11,26t-14,25t-12,26t-9,26t-7,27t-2,30t-1,29t-2,28t-6,29t-5,29t6,30t1,30t-20,27t-16,12M336,330Q329,359 325,373t-5,28t-2,28t-2,29t-7,30t-10,30t1,30t3,30t-16,28t-28,26t-15,25t2,27t-5,28t-18,30t-15,29t1,24t4,10" stroke="#422d1f" stroke-width="1.9" opacity="0.85"/>
<path d="M367,284Q351,307 346,320t-9,28t-7,29t-5,28t-2,28t-2,30t-7,28t-6,30t4,30t-1,29t-21,28t-26,26t-8,26t0,27t-1,14M335,366Q331,394 330,408t-1,29t-1,29t-7,29t-7,29t3,30t3,29t-18,28t-28,26t-13,25t-1,24t0,13M320,351Q313,378 310,392t-4,30t-3,30t-6,30t-12,30t-3,30t3,28t-16,28t-28,28t-13,14M296,286Q284,316 279,331t-10,30t-10,29t-9,30t-12,31t-16,31t-8,29t-4,31t-20,30t-25,30t-4,31t6,15M357,314Q345,342 342,354t-7,28t-4,28t-1,29t-1,29t-6,29t-6,30t5,29t3,29t-18,28t-29,24t-14,24t0,27t0,14M390,237Q382,263 376,275t-13,26t-12,26t-11,26t-6,28t-4,29t-1,28t-1,28t-7,29t-7,29t4,30t2,30t-19,27t-26,26t-12,25t-1,26t-7,28t-19,28t-15,30t-2,24t1,9M276,309Q264,340 260,354t-10,29t-10,32t-12,31t-18,30t-11,30t-5,30t-19,30t-25,30t-10,16M307,255Q291,284 286,298t-10,29t-12,30t-11,30t-9,31t-12,32t-17,30t-8,30t-6,29t-22,30t-16,15M281,312Q267,342 262,357t-11,29t-10,30t-12,31t-17,31t-8,31t-5,29t-21,30t-24,31t-1,31t4,33t-13,32t-10,16M319,222Q300,250 294,264t-12,28t-12,29t-12,30t-12,30t-11,31t-12,32t-18,29t-10,30t-5,30t-22,31t-17,15M382,262Q367,286 360,298t-13,26t-8,27t-6,28t-4,28t-2,28t-2,29t-7,29t-7,30t5,30t0,29t-22,27t-25,27t-8,25t-1,25t-12,29t-10,16M329,233Q311,259 304,274t-13,30t-11,29t-10,29t-10,29t-9,30t-11,32t-16,31t-8,30t-3,29t-5,15" stroke="#160f0b" stroke-width="2.5" opacity="0.85"/>
<path d="M369,285Q355,310 348,324t-9,28t-6,26t-4,28t-2,29t-2,30t-7,31t-5,28t4,28t0,30t-21,28t-26,26t-9,25t2,12M389,228Q378,254 370,266t-15,24t-13,25t-9,28t-7,29t-5,29t-3,27t-3,31t-7,30t-9,28t3,30t1,29t-20,28t-27,27t-11,26t1,27t0,13M367,285Q355,310 349,323t-10,27t-7,29t-5,30t-1,27t-1,28t-7,30t-7,30t5,29t2,29t-3,15M318,267Q305,296 299,310t-11,29t-9,30t-8,30t-6,30t-11,31t-16,30t-8,29t-2,29t-17,30t-27,30t-10,15M316,383Q311,409 309,423t-2,31t-8,30t-10,30t3,30t-1,30t-21,27t-26,26t-6,27t1,28t-13,28t-19,31t-7,30t6,23t5,10M265,340Q254,370 248,384t-10,29t-12,32t-16,30t-9,30t-6,30t-23,30t-24,31t0,32t5,33t-13,33t-15,32t6,34t10,17M273,305Q260,334 255,349t-11,31t-11,31t-14,32t-17,30t-9,29t-7,30t-24,31t-22,31t2,32t4,33t-14,33t-15,34t8,34t11,16M386,229Q377,251 370,265t-16,26t-14,25t-9,27t-7,28t-5,29t-3,30t-3,29t-8,29t-9,28t3,30t2,29t-20,29t-28,26t-9,26t2,27t-10,30t-20,30t-9,28t2,14M377,200Q355,220 345,232t-17,25t-14,27t-13,27t-11,29t-9,30t-7,30t-7,31t-11,31t-13,30t-4,29t-6,29t-23,30t-22,29t-1,31t2,29t-15,31t-12,17M353,312Q342,338 339,352t-6,27t-5,27t-2,29t-2,30t-7,30t-6,28t4,30t2,29t-21,28t-27,25t-9,25t0,26t0,14M351,265Q335,290 330,303t-10,28t-10,28t-6,29t-5,29t-4,30t-9,30t-10,31t0,29t-2,28t-20,29t-26,28t-11,15M322,227Q305,253 298,268t-13,29t-11,29t-11,30t-10,31t-9,31t-12,31t-18,31t-11,28t-3,29t-18,31t-27,30t-4,31t7,33t-10,33t-17,34t2,32t9,16M311,303Q301,333 297,347t-8,28t-7,31t-6,30t-9,30t-14,31t-5,30t-1,30t-19,29t-27,28t-7,30t4,29t-8,30t-19,32t-10,15M305,296Q293,326 288,340t-8,29t-8,31t-7,30t-11,30t-14,31t-5,29t-4,29t-22,29t-26,30t-3,29t6,15M341,335Q330,362 327,375t-4,28t-1,30t-2,30t-8,28t-6,29t5,29t0,30t-22,28t-26,26t-9,27t-1,26t-11,28t-19,30t-9,29t2,23t2,10M390,234Q382,261 375,274t-14,24t-12,26t-9,27t-8,28t-3,29t-1,29t-1,28t-6,30t-8,29t2,30t3,30t-18,27t-28,25t-14,25t1,26t-6,27t-18,30t-11,15M363,278Q346,302 340,316t-10,27t-6,28t-6,29t-4,28t-2,29t-8,30t-7,31t3,29t0,28t-20,29t-27,26t-8,26t1,27t-12,29t-19,30t-8,30t1,15M358,224Q338,247 330,260t-16,27t-12,28t-10,29t-7,29t-7,29t-8,31t-11,30t-13,29t-4,31t-3,31t-21,29t-24,28t-4,30t3,30t-13,31t-18,32t2,31t15,25t8,11M370,245Q355,268 347,280t-14,27t-10,28t-8,28t-6,29t-5,29t-3,30t-8,31t-11,29t0,29t0,30t-18,29t-27,26t-10,27t2,15M330,394Q330,424 328,437t-3,28t-6,30t-5,29t5,29t-1,30t-23,27t-24,26t-7,26t-2,25t-13,28t-19,29t-9,15M397,177Q372,190 360,199t-24,21t-20,24t-14,27t-12,29t-12,30t-10,31t-10,29t-10,30t-12,31t-16,30t-8,30t-4,30t-20,30t-24,30t-3,31t4,31t-12,33t-16,33t-3,17M306,298Q296,328 291,341t-9,28t-9,31t-8,31t-11,30t-14,30t-4,30t-3,28t-22,30t-25,30t-3,30t4,30t-12,31t-11,16M308,257Q295,286 289,301t-10,29t-11,30t-10,29t-9,30t-13,32t-16,31t-6,29t-5,30t-22,30t-17,15" stroke="#422d1f" stroke-width="2.5" opacity="0.85"/>
<path d="M381,214Q364,236 355,246t-16,24t-14,28t-11,29t-9,28t-6,29t-6,29t-6,29t-8,30t-13,30t-5,30t2,29t-16,29t-29,29t-11,28t3,28t-6,30t-17,31t-9,30t10,25t9,11M354,220Q336,244 328,256t-16,27t-12,29t-11,28t-8,29t-8,30t-7,31t-10,32t-16,30t-9,29t0,28t-18,30t-28,30t-6,29t6,29t-8,32t-19,32t-3,32t18,28t12,11M354,220Q335,241 327,255t-16,28t-12,27t-10,29t-9,31t-8,29t-8,30t-9,31t-15,30t-9,29t-2,30t-15,30t-26,30t-10,29t5,31t-7,31t-19,32t-5,31t18,26t14,12M287,356Q279,388 275,402t-7,29t-10,31t-15,31t-5,30t-2,30t-21,28t-16,14M366,234Q348,259 340,271t-14,27t-12,28t-10,28t-6,29t-6,28t-5,31t-8,31t-14,30t-5,29t0,30t-15,30t-26,27t-13,27t3,29t-4,30t-18,31t-11,31t1,15" stroke="#5a402e" stroke-width="2.5" opacity="0.85"/>
<path d="M398,184Q376,200 366,210t-20,22t-19,24t-15,27t-13,29t-10,28t-8,29t-8,30t-7,31t-11,32t-14,30t-4,29t-5,29t-23,29t-22,29t-2,29t2,31t-15,33t-17,31t-4,16M296,326Q285,357 281,371t-8,29t-7,30t-11,31t-14,31t-4,30t-5,29t-23,28t-23,29t-3,30t4,31t-13,31t-18,32t2,32t8,15" stroke="#5a402e" stroke-width="1.9" opacity="0.85"/>
<path d="M394,207Q390,235 385,247t-11,25t-14,24t-13,27t-10,27t-7,27t-3,29t-1,28t-2,29t-7,30t-7,30t3,30t2,29t-20,28t-27,25t-11,25t-1,27t-8,28t-18,30t-13,28t-1,13M371,192Q348,209 336,219t-20,24t-15,27t-13,31t-11,29t-11,29t-10,30t-8,30t-12,32t-16,30t-7,30t-5,30t-23,31t-23,30t-2,30t4,32t-14,32t-16,32t-3,17M281,313Q271,345 266,360t-10,28t-9,30t-13,32t-18,29t-7,30t-4,30t-22,30t-24,31t-2,32t5,32t-12,32t-12,16M386,226Q375,252 368,265t-14,25t-13,26t-10,28t-8,28t-5,29t-3,28t-3,30t-7,29t-8,29t3,30t1,29t-22,27t-26,26t-7,26t-1,28t-11,28t-19,30t-8,30t4,25t2,11M280,312Q270,344 264,358t-10,29t-9,31t-13,31t-15,30t-8,30t-6,30t-23,31t-24,29t-6,15M380,256Q366,284 359,296t-13,25t-10,26t-8,29t-4,29t-3,28t-3,30t-6,29t-6,29t3,30t0,29t-18,27t-27,27t-11,26t-1,26t-1,14M312,378Q305,405 303,420t-3,31t-7,30t-11,29t-3,30t2,28t-16,29t-15,14M383,260Q369,286 362,298t-13,26t-10,28t-6,27t-3,29t-3,29t-3,28t-6,30t-4,31t6,29t-2,29t-23,26t-24,26t-7,14M343,204Q320,224 311,237t-16,28t-13,29t-11,29t-10,30t-12,31t-9,32t-12,31t-18,30t-11,29t-3,30t-20,31t-25,30t-4,31t6,34t2,16" stroke="#160f0b" stroke-width="1.3" opacity="0.85"/>
<path d="M303,253Q291,281 284,296t-12,29t-11,29t-11,30t-9,32t-11,32t-19,30t-13,29t-2,29t-17,30t-26,31t-7,31t7,32t-6,34t-17,33t-8,16M333,325Q322,354 319,367t-4,29t-4,29t-4,30t-8,29t-8,30t2,29t-2,29t-23,29t-25,27t-6,25t1,29t-12,29t-20,30t-6,29t7,25t3,11M392,237Q383,262 377,275t-13,26t-12,25t-10,27t-7,28t-3,29t-2,29t-2,28t-6,28t-4,30t6,31t-1,29t-22,27t-16,13M287,278Q277,308 271,322t-11,30t-11,30t-10,31t-12,32t-19,31t-15,28t-3,30t-15,31t-26,31t-8,31t8,33t-5,33t-19,33t-1,33t25,29t18,11M397,193Q383,213 375,224t-17,24t-16,25t-14,26t-11,29t-9,29t-7,28t-5,29t-6,31t-9,31t-10,30t0,29t-3,30t-23,29t-24,26t-4,27t1,28t-13,31t-17,31t-2,30t5,15M312,377Q309,409 306,422t-4,28t-8,30t-11,31t0,30t1,29t-20,27t-26,27t-10,27t1,28t0,14M374,249Q357,272 350,284t-12,25t-11,29t-8,29t-6,29t-3,29t-4,30t-8,30t-7,29t2,29t-3,30t-23,28t-23,27t-6,26t-1,28t-2,15M396,186Q377,202 366,212t-20,22t-17,24t-15,26t-13,29t-8,31t-9,28t-8,29t-6,31t-12,30t-14,30t-5,29t-3,30t-20,30t-25,30t-5,29t3,31t-10,31t-16,31t-2,31t16,26t10,12M347,304Q337,331 333,344t-8,29t-4,29t-2,29t-2,29t-9,29t-7,30t4,30t-1,28t-22,28t-16,13M354,312Q345,339 340,352t-8,28t-4,28t-2,29t-1,29t-5,30t-6,29t5,29t-1,29t-21,28t-26,25t-8,24t0,26t-12,28t-10,15M294,282Q282,314 276,329t-11,29t-10,29t-10,31t-13,31t-16,30t-8,30t-5,31t-22,29t-24,30t-7,16M381,213Q367,237 357,248t-17,24t-13,28t-12,27t-8,29t-7,29t-6,29t-4,31t-9,31t-13,29t-2,29t2,29t-18,29t-28,28t-10,27t3,29t-8,31t-18,31t-10,15M321,387Q319,414 316,428t-3,31t-6,30t-9,28t1,30t1,29t-20,28t-26,26t-10,26t1,15M378,255Q366,283 358,294t-13,26t-10,28t-7,27t-4,27t-3,30t-2,30t-7,28t-7,30t4,30t0,29t-22,27t-25,25t-9,27t-1,28t-12,29t-20,29t-8,28t2,14M330,360Q323,389 321,403t-2,28t-1,29t-8,30t-8,31t3,29t1,28t-19,28t-28,27t-10,25t1,25t-9,29t-20,31t-10,29t2,24t2,11M330,321Q320,349 315,364t-6,30t-3,29t-4,30t-9,29t-8,30t2,29t-1,29t-22,27t-26,28t-5,28t0,28t-13,29t-10,15M349,209Q327,232 318,245t-15,27t-12,29t-12,30t-11,31t-10,28t-8,30t-12,32t-16,31t-7,29t-5,29t-21,30t-24,30t-4,32t6,31t-10,32t-18,33t-7,17M346,301Q332,326 327,339t-7,28t-6,30t-2,30t-3,29t-8,30t-11,29t-1,29t3,29t-15,28t-29,27t-13,14M328,392Q327,421 326,435t-1,30t-6,29t-8,29t4,30t1,29t-19,28t-15,13" stroke="#2f1f15" stroke-width="1.3" opacity="0.85"/>
<path d="M298,244Q285,275 278,288t-12,29t-12,31t-12,30t-11,32t-12,32t-20,30t-14,28t-3,31t-18,31t-26,31t-4,33t6,17M360,273Q346,300 339,314t-11,27t-8,27t-5,30t-2,29t-4,29t-7,30t-9,30t0,29t3,29t-19,28t-28,26t-12,27t1,28t-6,28t-20,30t-11,15M366,238Q350,260 341,273t-13,27t-11,29t-11,29t-6,28t-5,28t-4,30t-8,31t-13,30t-4,29t2,30t-17,29t-28,27t-11,15M332,285Q320,313 314,327t-9,28t-6,29t-6,30t-6,29t-10,30t-10,29t1,31t-3,30t-24,29t-23,27t-4,28t1,29t-15,29t-11,15M399,177Q371,191 360,199t-23,20t-20,25t-15,29t-12,29t-12,29t-10,30t-10,30t-8,30t-12,31t-16,31t-7,29t-6,29t-23,30t-23,30t0,32t3,32t-13,31t-11,16M349,210Q328,233 319,245t-16,26t-13,30t-10,31t-11,29t-12,29t-8,31t-11,31t-16,30t-7,29t-5,30t-23,31t-22,30t-2,32t2,31t-11,31t-15,33t4,33t20,26t11,12M357,271Q341,297 335,310t-10,27t-8,29t-5,29t-3,28t-4,30t-9,30t-9,30t2,29t-2,28t-6,15M314,379Q309,407 307,421t-3,30t-7,31t-12,30t-1,29t2,30t-17,28t-28,27t-13,27t2,27t3,14M370,291Q358,314 352,328t-10,28t-5,27t-4,28t-2,29t-1,28t-6,29t-5,30t5,30t0,29t-20,26t-25,26t-10,26t-1,25t-1,13M353,214Q330,236 322,250t-16,27t-13,28t-10,31t-8,29t-9,29t-9,31t-12,31t-16,31t-5,30t-3,29t-22,29t-25,30t-2,31t4,31t-2,17M397,202Q387,226 381,238t-14,25t-15,25t-12,26t-10,27t-8,29t-6,29t-3,28t-3,30t-8,30t-9,28t1,30t1,29t-18,29t-27,26t-10,26t1,27t-9,29t-18,31t-10,30t0,14M288,278Q275,309 270,324t-11,30t-12,29t-9,31t-13,31t-18,30t-8,29t-8,30t-23,31t-15,17M370,290Q358,314 352,326t-10,28t-6,28t-4,28t-2,29t-1,28t-5,30t-7,30t4,28t3,29t-18,29t-28,25t-13,23t0,26t-7,28t-19,29t-11,15M328,234Q309,258 302,273t-12,30t-10,29t-10,30t-10,30t-9,31t-12,31t-15,30t-6,28t-7,29t-23,30t-21,30t-1,31t5,17M319,386Q317,414 316,429t-4,29t-7,28t-6,30t2,30t-2,29t-22,28t-17,13M288,320Q278,348 272,362t-11,30t-8,31t-11,31t-16,31t-8,30t-2,29t-3,16M313,344Q305,372 302,386t-5,29t-4,30t-8,31t-12,31t-4,29t2,28t-17,29t-29,28t-9,28t4,29t-8,29t-18,31t-9,30t2,15" stroke="#21160f" stroke-width="2.5" opacity="0.85"/>
<path d="M298,329Q289,359 285,373t-9,28t-7,30t-11,32t-15,31t-7,29t0,29t-1,15M313,305Q304,333 299,348t-8,30t-8,29t-7,30t-9,31t-12,30t-2,28t-5,30t-23,30t-22,28t-3,28t4,15M336,241Q319,268 311,282t-12,28t-9,30t-9,30t-9,30t-9,30t-10,31t-14,29t-8,28t-3,30t-18,31t-25,29t-7,30t4,31t-9,31t-18,32t-2,32t7,16M362,228Q343,251 334,264t-14,28t-11,28t-10,29t-8,30t-6,29t-7,30t-8,31t-14,29t-6,29t-1,30t-1,15" stroke="#785a42" stroke-width="2.5" opacity="0.85"/>
<path d="M582,307Q599,337 604,352t11,32t12,31t18,32t11,35t-8,34t2,33t13,35t-3,35t-6,35t10,32t8,16M397,213Q404,243 411,258t20,19t29,8t30,10t27,17t17,27t10,30t5,31t0,33t0,33t1,32t-13,31t-23,29t-10,27t-10,28t-22,27t1,26t30,27t24,27t6,13" stroke="#140d09" stroke-width="1.9" opacity="0.85"/>
<path d="M462,191Q491,209 505,217t27,19t24,24t19,29t17,30t15,31t12,31t11,31t19,34t14,34t-6,35t-1,34t15,34t0,34t-8,18M447,282Q477,288 491,294t26,19t16,27t9,29t7,31t0,32t0,33t2,33t-11,31t-24,29t-13,28t-7,27t-20,26t-3,27t29,27t26,28t5,27t-1,13" stroke="#140d09" stroke-width="1.3" opacity="0.85"/>
<path d="M523,224Q546,245 557,258t20,28t18,30t15,30t12,31t13,33t21,34t12,33t-6,34t5,36t10,18M406,237Q421,265 436,270t31,9t29,10t25,18t17,27t11,30t6,31t1,33t0,32t3,32t-6,32t-23,30t-14,29t-4,28t-15,27t-9,13" stroke="#140d09" stroke-width="2.5" opacity="0.85"/>
<path d="M443,223Q473,237 487,244t28,16t24,22t19,28t14,29t11,31t7,33t7,32t11,31t6,33t-14,34t-8,32t7,31t3,15M470,242Q499,254 513,264t25,22t18,26t13,29t11,32t7,31t7,33t10,33t-1,32t-13,32t-3,32t3,31t-12,30t-2,30t20,31t8,32t-4,16M507,244Q532,264 543,276t19,28t14,30t13,30t11,33t7,33t12,32t7,32t-12,33t-5,34t9,31t-5,31t-7,33t14,32t8,32t-13,32t-6,30t4,14M409,231Q425,255 440,261t29,11t29,12t25,18t17,27t12,31t7,30t4,31t2,34t4,33t-5,32t-21,30t-13,29t-1,28t-13,28t-5,28t21,29t23,28t4,29t6,28t9,13M564,278Q583,305 590,321t13,32t11,31t12,31t18,34t12,34t-7,33t-2,34t14,36t8,17M486,276Q513,291 524,302t18,26t11,30t7,32t3,32t3,33t5,33t-7,31t-21,30t-11,15M507,247Q532,266 542,278t18,28t15,30t11,30t9,32t9,34t13,31t3,32t-11,33t-3,32t5,33t-7,33t-4,31t4,15M504,249Q531,266 542,279t19,28t13,29t13,32t8,31t7,32t14,33t5,32t-13,33t-4,33t7,31t-8,32t-5,32t15,32t8,32t-14,30t-3,30t7,15M481,284Q507,299 519,310t17,25t9,30t8,31t1,31t1,34t3,33t-12,31t-21,30t-9,29t-9,27t-10,14M485,278Q513,292 524,303t17,26t11,30t7,32t3,32t3,33t4,32t-9,31t-20,31t-6,29t4,15M534,316Q547,345 551,359t8,31t3,33t3,33t4,32t-11,31t-19,32t-7,29t-6,28t-18,28t-10,14M575,312Q591,343 596,359t9,31t12,32t15,32t8,34t-9,33t-2,34t9,34t-5,33t-5,33t4,17M551,339Q561,371 564,387t5,32t3,32t6,33t-6,32t-20,30t-10,15M544,348Q551,381 554,395t2,31t0,34t3,33t-11,32t-21,31t-8,27t-7,27t-20,28t-1,27t27,27t18,13M417,273Q445,282 460,285t30,10t27,17t16,26t10,31t6,31t0,32t0,34t1,33t-13,31t-24,30t-11,27t-10,25t-21,26t0,26t11,14M523,280Q545,304 551,318t11,29t10,31t7,33t6,33t9,31t-5,33t-16,33t-3,30t0,30t-14,29t-2,30t8,15M418,210Q442,229 457,235t29,12t27,16t24,21t19,26t14,31t11,32t7,31t6,32t11,32t2,32t-14,33t-6,33t5,30t-8,31t-10,17" stroke="#432c1c" stroke-width="1.9" opacity="0.85"/>
<path d="M541,253Q562,280 572,293t17,29t13,31t11,32t12,32t18,32t9,33t-8,35t3,35t8,17M430,181Q463,190 478,198t29,17t26,21t22,25t21,27t18,30t14,31t13,31t14,32t19,33t12,34t-5,34t2,34t14,35t-1,35t-5,36t3,17M548,344Q559,372 562,388t2,33t2,32t5,34t-7,32t-20,31t-9,29t-3,27t-15,28t-4,28t24,29t20,30t0,29t-3,15M559,286Q576,313 582,328t13,32t9,32t9,31t16,32t9,35t-11,34t-5,32t11,33t-2,34t-7,33t10,31t7,32t-2,17M466,250Q496,264 509,271t23,21t19,27t12,29t10,31t5,32t5,32t9,32t-2,33t-16,31t-6,31t2,30t-13,29t-3,30t20,31t15,31t-7,29t2,29t9,15M513,288Q536,314 543,328t10,29t7,31t4,33t2,32t6,32t-4,32t-21,31t-12,29t-2,29t-12,28t-5,28t21,29t24,29t2,30t-5,15M494,204Q521,224 533,235t24,25t20,28t17,28t15,30t13,32t14,32t20,33t11,33t-5,35t4,36t15,34t-1,35t-5,36t7,34t-6,34t-23,33t-10,34t2,17M531,320Q543,351 546,365t7,31t2,32t-1,33t3,33t-8,31t-24,30t-14,29t-5,27t-16,26t-4,27t25,29t18,15M398,205Q410,232 418,243t22,17t31,10t30,13t24,18t17,26t12,30t8,31t2,32t3,33t4,33t-7,32t-19,31t-9,29t-3,28t-3,14M529,271Q550,295 557,310t14,31t10,31t7,31t8,33t11,32t0,33t-13,33t-1,32t3,30t-13,30t-1,31t20,31t10,16M545,249Q567,276 575,290t17,29t15,30t11,32t12,33t17,32t14,34t-5,35t-3,35t15,34t2,35t-7,18M556,336Q566,366 570,380t5,32t5,34t7,33t-1,31t-17,31t-9,31t1,30t-13,29t-5,29t20,29t18,31t-4,31t-5,15M488,213Q518,231 530,241t23,24t19,27t17,29t13,32t11,33t12,31t18,31t12,34t-8,36t-7,18M543,252Q563,278 572,292t17,29t14,32t13,32t12,32t16,32t12,34t-6,33t-3,34t13,35t8,18M571,317Q585,349 590,364t9,32t10,33t14,32t5,33t-11,32t-1,32t8,34t-8,32t-4,32t5,17" stroke="#2e1e13" stroke-width="2.5" opacity="0.85"/>
<path d="M490,270Q518,285 528,297t17,28t12,30t8,30t5,32t4,33t6,32t-3,33t-19,32t-12,29t0,28t-9,29t-7,29t18,29t21,29t0,29t3,29t8,14M428,187Q459,199 474,206t29,16t27,20t23,25t18,27t16,29t14,31t12,31t11,32t17,33t13,34t-7,35t-8,17M532,268Q552,293 559,307t15,30t13,31t9,31t7,33t12,33t3,33t-13,32t-2,31t6,33t-9,32t-3,31t16,31t6,32t-12,32t-1,30t8,16M529,271Q550,296 557,310t14,30t11,32t7,32t6,31t11,33t3,34t-14,32t-8,16M509,240Q534,260 546,273t20,28t14,30t13,30t10,31t8,34t13,33t10,33t-9,32t-6,33t10,33t-2,33t-9,32t11,32t9,33t-15,33t-13,16M555,335Q566,367 570,382t4,32t4,33t7,33t-3,33t-18,30t-9,29t1,30t-13,29t-4,29t22,31t16,30t-4,29t-6,15M430,182Q460,194 475,201t30,16t27,20t24,26t19,28t16,29t14,29t11,32t13,33t20,33t12,34t-6,34t0,34t12,35t-2,35t-8,18M397,174Q428,185 444,191t30,13t29,17t26,19t24,23t19,28t17,30t15,31t13,32t11,31t17,32t13,34t-7,35t-1,34t14,33t-2,35t-8,36t8,32t2,34t-20,33t-14,16M429,250Q459,262 473,266t28,13t25,21t19,26t11,29t7,31t4,33t5,32t7,33t-8,31t-20,31t-5,31t-3,29t-18,28t-1,28t26,28t16,15M529,323Q540,352 543,368t5,32t2,32t1,32t1,32t-15,32t-22,29t-8,29t-10,27t-22,25t0,26t30,28t24,28t4,28t0,14M426,188Q455,203 470,209t29,15t27,19t24,25t19,28t17,29t13,30t12,32t10,32t16,33t11,34t-8,34t-3,33t12,33t-1,33t-7,17M442,225Q473,239 487,246t27,16t24,21t18,28t14,30t11,30t9,32t7,33t11,33t3,32t-15,32t-6,31t6,31t2,15M567,273Q585,301 593,316t15,30t14,33t13,33t18,32t12,34t-5,35t-4,18M576,314Q590,344 596,359t11,32t10,32t15,31t7,34t-9,33t0,35t10,33t-6,33t-5,33t12,32t2,32t-6,16M538,352Q548,384 550,399t1,32t0,33t1,32t-10,31t-25,30t-12,28t-7,26t-19,26t-2,28t27,28t26,28t7,27t12,26t13,12M424,194Q452,208 467,216t29,16t28,17t23,23t19,28t16,30t12,31t10,30t9,33t15,34t10,33t-10,32t-5,33t10,33t-1,32t-7,34t9,33t7,32t-1,16M553,340Q562,368 565,384t3,33t4,33t8,33t-4,32t-19,31t-11,30t0,28t-12,28t-5,29t6,14M510,241Q536,262 547,274t20,26t14,30t12,31t10,31t10,32t15,33t6,35t-9,32t-2,33t6,17M445,223Q474,238 488,245t27,15t25,21t20,26t13,30t11,32t8,32t7,32t12,33t3,33t-13,33t-5,31t5,31t-6,32t-5,32t4,15M459,194Q491,208 504,217t27,20t24,24t19,28t16,29t15,31t13,32t12,33t18,33t13,34t-7,34t1,34t13,35t-2,35t-5,34t2,17M479,227Q507,244 520,253t24,22t19,28t15,28t13,32t9,33t8,32t14,31t8,33t-12,34t-4,33t8,33t4,16M500,257Q526,273 537,286t18,28t13,28t11,32t6,32t8,31t12,32t-3,32t-14,33t-2,32t1,31t-12,31t-1,29t20,31t7,32t-10,32t4,28t9,13M432,179Q462,190 478,198t29,16t26,20t24,25t19,28t17,31t15,30t13,31t12,33t20,32t14,33t-6,35t0,35t6,18" stroke="#2e1e13" stroke-width="1.9" opacity="0.85"/>
<path d="M475,235Q505,247 517,258t24,22t19,26t15,31t11,32t7,31t9,32t12,32t3,32t-13,33t-2,33t5,33t-10,31t-8,16M540,310Q551,338 556,353t9,32t4,32t3,32t7,32t-4,33t-19,32t-9,29t-2,28t-13,29t-4,29t22,29t16,15M565,325Q575,355 580,371t7,34t6,32t12,32t4,33t-14,32t-9,32t5,30t-5,30t-7,32t13,31t14,31t-6,30t-5,30t4,16M546,301Q561,330 566,345t11,31t6,31t5,33t10,33t1,33t-16,31t-7,30t3,31t-10,31t-4,31t17,29t13,30t-6,32t-1,28t8,14M560,284Q576,313 584,327t14,31t10,32t10,33t15,32t7,33t-7,33t2,33t9,34t-7,34t-4,33t13,31t1,33t-19,34t-11,17M517,285Q540,310 547,324t12,29t8,30t4,32t3,33t7,33t0,32t-20,31t-12,31t1,28t-9,29t-6,30t18,29t21,30t-1,30t-7,15" stroke="#825e3e" stroke-width="1.3" opacity="0.85"/>
<path d="M537,257Q558,285 566,298t17,30t13,30t9,32t11,32t16,33t9,34t-9,33t-3,33t6,18M429,180Q462,190 477,196t31,17t26,22t22,24t20,27t18,30t14,31t15,30t13,33t17,32t17,35t-3,34t-7,17M536,261Q558,285 567,300t15,29t12,31t9,31t10,33t16,33t8,32t-10,34t-4,33t10,34t-2,32t-8,33t11,33t6,33t-4,17M399,201Q412,226 421,238t22,18t30,11t29,13t25,19t18,27t11,29t8,31t4,33t4,32t6,33t-8,32t-19,30t-6,30t-3,30t-16,28t-2,29t25,29t16,28t-2,29t-3,15M449,277Q480,283 494,290t25,18t18,26t11,29t7,31t0,33t2,33t4,32t-13,32t-21,31t-7,29t1,13M404,244Q417,273 431,279t30,8t30,9t25,17t17,26t9,31t5,30t1,33t0,32t1,32t-13,32t-24,31t-11,27t-8,26t-22,26t0,26t12,13M543,349Q551,379 554,394t2,32t1,34t3,32t-10,32t-20,31t-9,28t-8,27t-19,27t1,27t12,14M497,258Q525,277 536,288t18,26t13,30t9,31t6,32t6,33t10,33t-2,33t-14,32t-3,31t1,30t-14,30t-1,29t20,32t10,31t-9,29t-6,15M427,188Q455,202 471,209t31,16t27,18t22,24t18,28t17,29t14,31t11,31t10,32t16,33t13,34t-7,34t-10,18M398,171Q428,182 445,187t31,13t30,18t27,20t22,25t20,28t17,28t14,30t12,32t13,32t18,34t10,34t-5,34t3,34t13,34t-3,34t-8,19M493,205Q520,224 532,234t24,25t21,28t17,29t15,32t13,32t13,32t19,31t11,34t-5,35t3,35t16,36t-2,35t-6,34t8,34t-5,34t-23,33t-12,16M427,188Q458,199 472,207t28,15t28,20t24,26t20,26t16,30t13,30t12,31t11,32t17,34t11,33t-8,33t-1,34t13,35t-2,35t-8,33t2,16M449,213Q480,227 494,234t28,17t23,23t18,27t16,30t13,30t9,33t9,33t14,33t8,33t-11,33t-5,33t9,32t-3,33t-5,32t11,32t6,32t-2,16M515,233Q541,256 550,269t19,26t17,29t14,32t11,32t10,33t16,31t10,34t-9,35t-1,33t12,33t-2,33t-9,17" stroke="#1f140d" stroke-width="1.3" opacity="0.85"/>
<path d="M559,331Q570,363 574,378t6,31t5,32t10,32t0,34t-18,31t-7,30t4,16M421,204Q445,221 459,227t29,15t29,18t24,21t17,26t15,30t11,32t8,31t8,32t13,33t3,34t-13,32t-3,32t6,32t-8,31t-4,31t15,32t8,32t-2,16M491,209Q519,227 532,238t23,24t19,28t17,30t15,30t12,32t13,32t17,33t11,34t-6,33t2,35t13,35t-2,34t-7,18M560,329Q571,361 576,377t6,32t7,31t10,32t-3,33t-15,32t-3,31t5,15M530,269Q553,294 559,309t14,29t13,31t8,32t7,32t12,32t4,33t-12,34t-6,32t6,30t-6,30t-5,33t14,31t9,32t0,17M509,294Q532,316 539,331t11,30t7,32t2,32t1,32t4,32t-6,33t-23,32t-13,28t-4,27t-4,14M449,217Q477,233 492,239t28,16t22,23t19,27t15,29t12,32t10,32t7,32t12,32t7,33t-11,32t-8,33t8,32t-3,32t-7,33t11,33t10,31t-11,30t-11,15M506,247Q531,266 542,278t19,28t15,31t12,30t8,31t7,33t13,33t8,32t-13,33t-7,32t4,16M411,226Q432,246 446,253t30,11t29,12t23,20t17,27t13,30t9,31t5,32t4,32t6,32t-3,32t-19,32t-12,17M534,263Q555,290 562,304t14,29t12,31t9,33t10,33t15,32t3,33t-13,34t-1,32t6,31t-9,31t-3,33t16,32t5,31t-4,17M542,251Q563,278 571,293t18,30t15,29t12,32t10,33t16,32t14,34t-6,33t-4,33t4,18M425,258Q452,269 467,274t30,11t26,19t17,27t10,29t8,31t2,33t3,33t3,31t-9,32t-21,31t-8,29t3,14M420,207Q445,224 460,229t29,13t27,17t24,23t19,27t14,30t11,30t7,31t7,32t12,33t6,34t-13,33t-7,31t5,31t3,15M424,197Q452,211 467,217t29,15t27,18t22,24t20,28t16,28t11,30t11,32t9,33t15,33t8,34t-10,33t-5,32t3,17M478,285Q506,300 518,311t17,25t10,29t7,32t0,32t2,33t1,33t-13,32t-22,29t-8,27t-8,27t-22,28t0,27t31,28t18,14M458,261Q490,271 503,279t25,19t17,26t12,30t8,31t3,33t3,33t7,31t-3,32t-20,32t-12,30t0,28t-10,28t-5,29t5,15M553,291Q571,318 577,334t11,31t10,32t7,32t12,33t9,33t-11,32t-8,32t8,32t-3,33t-7,32t11,31t10,33t-11,31t-10,15M533,267Q553,291 561,306t14,30t12,31t9,31t6,32t12,33t8,33t-11,32t-8,32t7,33t-4,32t-7,31t2,16M520,282Q542,305 550,319t13,30t9,32t6,31t4,33t7,32t-4,32t-16,31t-4,31t4,17M540,309Q553,337 558,352t10,32t3,33t5,32t7,32t-7,32t-18,31t-4,30t4,15M540,255Q562,280 570,295t16,30t13,30t12,33t11,32t15,32t10,33t-7,33t-1,34t12,33t-4,34t-6,34t11,35t2,33t-18,32t-12,16M551,294Q564,325 570,339t12,31t8,33t6,33t12,31t4,33t-14,33t-6,32t6,31t-9,31t-5,30t16,32t11,31t-10,32t-9,16" stroke="#5f412a" stroke-width="2.5" opacity="0.85"/>
<path d="M397,193Q416,212 428,222t25,17t29,13t29,14t25,21t19,27t12,29t10,32t7,32t5,32t11,34t2,31t-16,32t-7,32t5,30t-11,31t-5,30t6,14M446,284Q477,289 490,295t24,18t17,25t9,31t6,32t2,32t1,33t-1,33t-15,31t-22,30t-9,27t-11,25t-23,26t1,28t32,27t23,28t5,14M557,288Q572,318 578,333t13,30t10,31t9,32t14,33t4,32t-9,34t-1,33t7,32t-9,33t-2,33t16,33t2,32t-6,17M492,207Q520,226 533,237t23,25t20,27t18,28t14,32t12,31t13,32t18,33t12,33t-5,34t-5,18M469,243Q501,256 514,264t24,22t18,26t13,29t10,32t7,33t6,32t11,31t4,33t-16,33t-7,31t5,30t-8,31t-5,31t16,31t13,31t-9,31t-9,16M552,295Q568,323 573,339t10,31t9,31t7,31t12,33t5,34t-14,32t-6,32t5,32t-7,31t-4,31t15,32t9,32t-11,30t-9,15M545,346Q553,378 555,393t2,33t0,33t4,33t-5,31t-23,30t-15,15M426,192Q456,203 469,211t30,16t27,19t22,23t20,28t16,29t14,30t11,32t10,33t15,33t9,33t-9,33t0,34t7,18M570,316Q586,347 592,363t9,32t8,32t13,32t8,33t-11,34t-6,34t8,31t-3,32t-6,34t12,32t10,16M528,272Q549,295 556,311t15,31t12,31t5,31t7,31t12,32t3,33t-14,33t-6,32t4,15M564,280Q580,308 588,323t13,30t12,33t11,33t17,32t12,33t-8,33t-8,18M571,320Q582,350 587,365t10,32t9,33t12,32t6,33t-11,34t-7,33t7,31t-4,30t-6,32t11,33t10,32t-11,32t-7,31t3,15M463,187Q494,202 507,211t27,22t23,26t20,29t17,28t16,30t13,33t12,33t18,32t15,33t-3,34t0,34t15,36t2,35t-6,18M397,178Q424,193 439,199t30,14t28,17t28,17t24,23t18,29t16,28t13,30t11,33t9,32t16,31t11,35t-9,34t-6,33t11,34t-1,33t-7,33t10,33t6,31t-16,33t-13,18M425,259Q451,270 466,274t30,12t26,19t17,26t10,31t8,31t3,32t1,33t4,32t-7,32t-22,30t-13,14M460,259Q492,267 504,275t24,20t18,26t12,31t9,31t6,33t3,32t7,32t-4,32t-19,32t-6,31t-2,29t-16,28t-1,30t9,15M420,208Q443,223 458,230t30,15t28,16t24,21t19,26t14,30t10,32t8,32t8,32t11,32t3,32t-13,33t-8,17M546,247Q566,276 575,290t16,29t15,31t13,32t12,33t16,31t16,34t-4,35t-6,34t16,34t5,35t-10,33t4,34t3,34t-3,17M412,223Q433,247 446,252t29,12t28,13t25,19t18,28t13,29t9,31t3,33t4,32t7,32t-6,32t-18,32t-6,31t-2,28t-16,28t-1,29t23,29t15,30t-4,30t8,27t12,13M455,269Q485,277 498,284t24,19t18,27t11,30t8,30t3,32t2,34t5,33t-10,31t-22,30t-7,30t-4,28t-6,13M436,237Q465,249 481,255t28,14t24,21t18,26t13,30t10,31t6,32t4,32t9,32t2,34t-17,32t-10,31t4,29t-6,30t-7,32t16,29t14,15M522,222Q546,244 557,258t19,28t17,29t16,31t14,32t14,33t18,33t15,34t-4,33t0,34t15,35t1,36t-8,36t1,18M406,239Q420,267 433,272t30,10t31,10t25,18t17,27t9,29t6,31t3,33t1,31t0,33t-12,33t-20,30t-8,27t-9,27t-23,27t2,26t30,27t20,29t4,16M462,258Q492,268 505,275t24,21t18,26t13,30t9,32t4,31t2,32t8,32t-1,33t-20,31t-12,15" stroke="#432c1c" stroke-width="2.5" opacity="0.85"/>
<path d="M510,239Q537,261 547,273t18,27t16,30t12,32t9,31t10,31t16,33t8,33t-11,34t-5,32t6,17M397,204Q410,230 419,240t23,18t30,11t29,11t24,18t18,27t11,31t9,32t5,31t1,32t6,33t-5,33t-21,31t-12,15M492,207Q520,226 533,238t23,25t19,28t17,28t14,31t12,32t14,32t18,33t11,34t-7,33t2,34t14,35t-3,34t-8,18M427,186Q457,200 472,207t29,16t27,19t24,23t19,27t17,30t13,30t11,31t13,34t18,32t10,34t-6,35t-1,34t12,34t-2,34t-7,33t9,33t1,33t-7,17M539,311Q552,339 556,354t8,31t4,33t3,32t7,33t-2,33t-20,31t-11,29t0,28t-11,29t-5,28t20,29t20,30t0,30t-5,14M543,348Q554,380 556,394t1,32t3,33t2,33t-12,32t-20,31t-7,28t-8,26t-21,27t1,27t12,14M459,197Q488,213 503,221t27,19t22,25t20,27t17,28t15,32t11,32t12,31t18,32t12,34t-7,35t-2,34t13,34t8,18M405,238Q421,264 435,270t29,10t30,10t27,17t16,26t9,31t8,31t2,32t2,33t2,33t-13,31t-21,30t-6,29t-10,27t-11,14M399,180Q425,197 439,204t28,14t29,14t28,18t23,22t19,28t15,30t13,30t10,31t7,33t15,34t11,32t-10,33t-6,33t10,33t0,33t-8,33t8,33t8,32t-13,32t-11,32t2,16M574,315Q590,345 596,360t10,32t9,33t14,32t10,32t-10,32t-4,34t10,33t-1,33t-8,33t9,32t6,32t-15,33t-9,33t3,16M416,213Q440,231 455,237t29,13t28,16t24,20t19,27t13,30t9,31t7,32t6,32t11,34t-1,32t-14,32t-7,16M420,270Q447,280 462,283t30,9t26,17t16,27t11,30t6,31t1,33t2,32t1,33t-13,31t-24,31t-9,28t-7,26t-21,27t-1,28t30,26t23,27t3,28t15,27t16,13M521,280Q544,305 551,319t12,29t9,30t6,32t6,34t8,33t-4,33t-16,30t-8,14M397,200Q411,223 421,233t26,17t30,11t28,13t23,21t18,27t13,29t10,31t3,33t5,31t8,33t-6,33t-18,31t-4,30t-2,29t-16,29t0,30t22,29t14,16M455,263Q486,275 501,281t25,19t18,28t10,29t8,30t4,32t2,34t6,32t-5,32t-20,31t-12,16M461,193Q490,209 504,217t27,20t23,25t20,29t17,28t14,30t13,33t12,33t16,32t15,34t-5,34t-3,35t15,34t3,34t-8,34t5,33t0,34t-19,33t-13,17M430,247Q459,260 475,265t30,14t24,18t16,26t12,30t9,31t3,33t5,33t7,32t-4,32t-19,31t-8,31t-1,28t-15,28t-3,29t22,30t18,29t3,14M514,233Q541,255 551,267t18,28t17,30t14,30t11,32t12,31t16,32t10,34t-8,34t0,35t11,34t-4,34t-9,17M436,240Q462,253 478,259t30,14t24,19t17,27t12,30t10,31t5,32t4,33t8,33t-1,32t-18,32t-9,29t2,30t-11,30t-5,29t21,30t16,29t-6,31t3,28t9,13M398,202Q409,230 418,242t23,18t30,10t29,12t25,19t18,25t11,31t9,32t2,32t3,32t5,32t-6,33t-20,29t-10,31t2,16M419,271Q446,280 462,285t31,10t25,17t16,26t8,30t6,31t2,32t0,34t2,32t-10,32t-24,30t-15,27t-1,14M542,350Q550,382 552,397t1,33t0,32t1,32t-10,31t-23,31t-11,28t-7,27t-20,26t-2,28t28,29t25,27t6,13" stroke="#432c1c" stroke-width="1.3" opacity="0.85"/>
<path d="M418,209Q444,225 458,232t29,14t28,15t23,21t18,28t14,29t12,30t7,33t7,33t12,33t3,32t-13,31t-6,33t5,32t1,15M397,184Q422,200 436,207t28,14t28,14t28,18t25,23t19,27t14,29t12,31t9,33t8,33t14,31t7,33t-10,34t-5,33t8,31t-4,31t-6,33t13,32t8,32t-14,33t-9,31t4,15M525,277Q547,300 554,315t13,30t9,30t7,33t7,33t8,33t-2,32t-15,31t-3,30t2,31t-2,15" stroke="#825e3e" stroke-width="1.9" opacity="0.85"/>
<path d="M544,248Q565,275 575,290t17,30t14,31t12,31t12,32t19,33t13,33t-6,34t-1,35t14,36t9,17M478,229Q506,243 519,254t25,23t19,27t15,30t11,30t9,32t9,33t13,32t5,33t-11,33t-3,33t7,32t-7,32t-5,32t15,32t11,15M510,295Q530,318 536,333t11,30t8,30t3,33t0,33t3,33t-10,32t-22,29t-9,29t-5,27t-18,28t-2,28t27,27t18,14M494,263Q521,280 531,293t19,27t12,29t9,31t6,32t5,32t9,33t-4,33t-17,32t-6,30t1,29t-13,30t-3,29t8,14M512,293Q533,316 540,330t11,30t7,31t2,32t2,33t4,33t-7,34t-22,29t-11,28t-4,28t-15,27t-3,28t24,29t18,14M522,223Q546,248 556,260t20,26t18,30t16,31t12,31t12,32t20,34t13,34t-5,33t2,34t15,35t-1,36t-7,19M530,321Q539,350 543,367t8,32t1,32t0,33t2,32t-14,31t-22,30t-7,28t-10,27t-22,25t1,28t30,28t21,27t3,28t0,14M436,235Q467,251 482,256t27,13t24,20t18,27t12,31t11,31t6,32t4,33t9,32t2,32t-17,33t-12,16M465,247Q495,260 509,268t24,22t18,27t14,29t11,30t5,32t5,33t10,34t0,32t-16,32t-9,30t2,30t-9,29t-4,30t17,30t15,32t2,17M467,249Q497,262 510,270t24,20t18,27t11,29t10,31t7,32t7,33t8,32t-4,33t-15,32t-8,15M581,305Q598,335 604,351t11,32t11,32t18,33t13,34t-7,35t-1,34t13,34t0,34t-7,18M532,266Q552,293 561,307t16,28t11,30t7,32t9,33t14,33t2,33t-11,33t-1,32t5,32t-9,31t-4,32t17,33t5,32t-13,32t0,29t7,14M557,334Q569,365 572,381t5,32t4,31t7,32t1,33t-18,32t-11,30t2,30t-10,28t-3,30t19,31t14,15M509,241Q536,259 546,273t19,28t17,29t12,30t9,32t10,32t16,33t5,32t-9,34t1,33t7,33t-8,33t-3,33t15,32t1,34t-7,17M500,256Q527,274 538,287t18,26t13,28t9,32t7,32t5,34t11,32t4,32t-16,33t-11,16M558,287Q574,314 582,328t13,31t9,32t10,32t15,33t9,34t-11,33t-10,17M570,320Q583,351 588,366t9,31t10,32t14,32t2,33t-11,34t1,32t6,32t-11,32t-10,15M566,276Q583,304 591,319t14,30t13,32t14,32t19,33t11,33t-7,35t1,35t14,34t-1,35t-5,35t8,33t-3,34t-22,34t-11,33t1,16" stroke="#5f412a" stroke-width="1.9" opacity="0.85"/>
<path d="M424,194Q454,208 467,215t28,16t29,18t24,24t19,27t16,30t13,30t9,32t10,32t16,32t8,34t-11,32t-2,34t10,32t4,16M512,294Q535,315 540,330t10,31t8,31t2,32t2,32t4,33t-8,32t-22,30t-9,29t-5,28t-16,27t-11,15M519,229Q544,249 554,263t19,29t17,28t15,30t13,32t11,32t17,33t15,33t-6,35t-4,34t14,34t2,34t-9,35t6,34t3,33t-19,33t-16,33t-1,17M573,317Q588,347 592,362t9,31t10,32t15,32t5,35t-11,33t1,32t7,33t-8,32t-2,33t15,32t1,33t-16,32t-9,15M547,344Q558,374 560,389t2,32t3,33t5,32t-8,32t-20,32t-8,30t-4,28t-5,14M514,289Q536,314 543,328t12,29t7,31t2,33t4,33t6,32t-7,32t-19,31t-8,29t3,14M454,203Q484,218 498,226t28,19t24,24t19,27t15,29t13,30t12,33t10,34t17,31t10,33t-10,33t-2,34t6,18M399,174Q428,183 444,189t32,14t29,16t26,19t23,24t18,29t17,29t16,31t13,32t10,32t16,33t15,33t-5,33t-9,17M422,264Q450,276 466,280t29,10t24,18t17,26t10,30t8,32t1,33t1,32t3,32t-9,33t-23,30t-12,27t-6,28t-18,27t-3,27t27,27t24,28t4,28t12,26t13,12M449,214Q479,228 493,236t28,18t24,22t19,28t14,30t12,30t8,31t9,33t15,33t4,32t-10,33t-1,32t6,33t-9,33t-3,33t15,32t5,32t-15,31t-10,16M398,173Q429,184 444,189t31,13t29,17t26,20t24,24t21,28t17,30t14,30t12,32t12,32t17,32t13,33t-5,34t-7,18M485,216Q515,235 528,245t23,24t19,27t15,28t14,31t11,32t11,32t16,32t8,34t-9,34t-6,17M427,189Q458,202 472,209t29,16t27,18t23,25t19,28t17,29t14,31t10,31t12,31t18,33t8,33t-8,34t-6,17M501,254Q527,272 537,285t18,26t14,30t12,32t7,32t6,32t11,32t2,32t-14,33t-6,33t4,30t-9,30t-3,30t16,31t10,32t-1,16M437,237Q467,249 481,255t27,15t25,19t19,28t12,30t9,30t6,32t6,32t10,32t0,33t-17,33t-8,31t3,29t-9,31t-6,30t5,15" stroke="#1f140d" stroke-width="2.5" opacity="0.85"/>
<path d="M532,318Q544,347 549,362t8,31t1,33t1,33t4,32t-6,31t-22,30t-12,29t-4,28t-15,28t-3,26t6,13M403,242Q419,272 432,276t29,8t30,9t25,17t17,26t11,31t6,32t1,31t0,34t1,33t-12,32t-24,29t-12,28t-7,27t-19,26t-2,27t28,27t27,28t6,27t-1,13M399,213Q403,245 410,259t22,19t29,7t30,9t25,18t16,26t9,31t8,32t0,30t0,33t2,34t-14,31t-24,30t-11,15M444,283Q476,290 490,295t26,16t17,28t10,31t6,31t0,30t1,33t0,34t-14,31t-22,30t-9,28t-12,26t-23,26t3,27t14,14M410,227Q429,251 444,257t29,10t29,12t25,20t17,27t11,29t8,31t4,32t3,33t5,33t-4,31t-20,32t-9,30t-1,28t-3,13M465,251Q493,265 507,272t26,19t17,27t13,31t9,31t4,31t6,33t9,33t-5,32t-16,32t-4,31t4,15M464,251Q496,263 509,270t23,21t19,27t13,29t10,32t5,32t4,33t10,32t0,32t-17,32t-10,31t2,30t-9,28t-4,30t5,15M539,310Q551,338 556,354t9,31t3,32t3,33t7,32t-2,33t-19,31t-12,29t-1,30t-10,28t-6,29t20,29t21,29t0,29t-6,15M513,290Q535,314 541,328t12,31t9,31t3,31t1,34t4,32t-3,31t-21,31t-13,30t-2,28t-13,27t-5,28t21,29t16,15M456,266Q486,276 500,282t25,19t17,27t11,30t7,31t3,32t2,34t5,32t-6,31t-21,31t-9,30t-3,28t-14,28t-10,14M397,193Q416,215 427,225t26,17t28,12t28,15t25,20t18,26t13,29t11,32t6,32t5,33t9,33t1,32t-16,32t-10,32t2,30t-8,29t-5,31t17,30t16,30t-5,31t-1,29t6,14M547,299Q565,327 570,341t11,31t7,32t5,33t10,33t4,32t-14,32t-8,31t2,16" stroke="#2e1e13" stroke-width="1.3" opacity="0.85"/>
<path d="M530,268Q553,291 560,307t14,30t12,31t8,32t8,33t13,32t5,33t-13,32t-4,33t6,31t-8,30t-5,33t16,32t12,16M476,232Q506,247 519,257t23,22t19,27t15,30t11,31t8,32t8,31t13,32t5,34t-12,34t-4,32t5,17M486,278Q513,290 524,302t18,27t12,30t7,30t1,33t2,33t5,31t-5,32t-21,32t-11,29t-2,27t-15,28t-4,29t24,28t21,28t1,29t7,29t11,14" stroke="#825e3e" stroke-width="2.5" opacity="0.85"/>
<path d="M546,346Q554,378 556,393t3,32t0,33t2,33t-7,33t-22,30t-14,14M397,191Q416,214 427,223t26,15t30,13t29,16t24,20t17,27t13,30t10,31t7,33t6,32t9,32t2,32t-16,32t-9,32t5,31t-8,30t-8,16M398,205Q410,231 418,243t22,19t29,10t30,12t25,20t17,26t11,29t7,31t3,33t1,33t4,32t-5,32t-21,31t-11,29t-2,29t-16,27t-11,14M454,271Q484,279 498,285t25,18t17,28t11,30t8,31t2,31t2,34t4,32t-10,32t-21,30t-5,29t-7,28t-20,27t2,29t27,28t16,14M555,334Q567,364 571,381t5,33t3,32t7,32t-1,32t-17,32t-8,30t1,28t-12,31t-4,31t7,15M508,296Q532,320 537,335t9,30t6,32t2,32t2,32t2,33t-13,32t-22,30t-8,28t-8,27t-22,26t-11,13M568,322Q580,351 586,367t8,32t7,32t12,33t8,33t-12,33t-8,32t7,31t5,16M451,272Q484,281 497,287t24,18t17,27t11,29t8,32t2,33t1,32t3,33t-6,32t-23,29t-13,30t-4,27t-15,26t-3,28t24,28t24,29t3,29t-3,14M415,221Q435,240 449,246t30,11t28,15t24,21t19,26t13,29t9,31t5,33t5,33t8,32t-4,32t-16,31t-4,31t0,30t-14,29t-3,31t21,30t14,29t0,15M423,193Q452,208 468,214t30,14t28,19t22,23t18,27t17,30t13,31t11,33t10,32t15,31t10,34t-9,34t-5,33t10,34t0,33t-8,32t0,17M564,279Q581,307 589,322t15,30t12,31t11,33t18,32t12,33t-8,35t-7,18" stroke="#5f412a" stroke-width="1.3" opacity="0.85"/>
<path d="M508,296Q533,318 537,333t10,31t9,31t1,32t0,32t4,33t-11,32t-21,30t-7,29t-9,26t-20,28t-11,15M529,323Q541,351 544,366t6,31t2,34t1,33t1,32t-11,30t-23,30t-11,28t-7,27t-18,27t-4,27t27,27t27,28t8,14M514,231Q542,255 551,267t19,27t17,30t14,31t11,31t10,33t16,33t13,33t-6,33t-8,17M581,307Q599,335 605,350t13,33t10,33t16,32t15,34t-5,34t-5,34t14,34t3,33t-9,34t5,35t4,34t-19,34t-14,16M510,295Q531,317 537,332t11,30t8,31t3,33t1,33t3,32t-11,31t-22,31t-7,29t-7,28t-21,28t0,26t12,13M406,235Q423,262 438,267t30,9t28,11t25,18t18,27t10,30t8,30t2,33t0,33t5,33t-7,32t-24,29t-13,28t-3,28t-3,13M556,336Q567,366 569,382t4,33t5,32t8,32t-4,32t-17,32t-7,31t0,28t-14,28t-9,15M429,252Q457,264 472,269t29,13t25,18t17,27t11,31t9,31t2,31t3,33t7,33t-8,32t-19,31t-7,29t-5,29t-19,27t-11,14M399,169Q432,179 447,184t31,13t29,16t27,21t23,25t20,28t18,30t15,30t12,31t13,32t19,33t13,34t-4,35t1,34t15,35t1,35t-7,36t1,18M406,236Q424,261 438,266t29,10t29,11t25,18t18,25t11,31t7,31t3,32t1,33t3,32t-8,32t-21,31t-9,28t-6,27t-17,27t-1,29t27,28t21,28t1,30t10,26t14,12M536,263Q558,287 565,301t14,30t13,32t10,32t9,31t14,33t7,33t-10,33t-2,32t7,33t-6,33t-8,16M480,285Q508,297 519,309t17,26t10,31t6,31t1,32t2,34t2,32t-14,31t-22,30t-7,28t-8,26t-22,26t1,28t12,15M481,286Q508,297 518,308t17,27t11,31t8,31t1,32t1,33t1,32t-11,31t-22,31t-9,29t2,14M422,200Q448,216 462,222t30,15t29,18t23,21t19,27t15,31t12,30t10,32t8,33t12,31t9,33t-12,34t-7,32t4,16M534,266Q555,289 563,303t14,30t12,32t9,33t8,32t12,33t8,32t-10,32t-8,33t8,32t-3,31t-8,33t11,33t11,16M513,291Q537,313 542,328t11,30t9,30t3,33t2,34t4,32t-9,32t-19,31t-5,28t-5,28t-18,29t0,28t26,28t16,29t-1,29t12,27t14,13M561,328Q575,358 578,374t6,32t7,33t11,33t-1,32t-16,33t-5,31t2,30t-12,30t-1,30t20,32t13,15M422,264Q450,274 465,278t30,12t26,18t17,26t10,30t7,31t2,32t0,33t3,32t-10,32t-22,31t-10,29t2,14M511,241Q535,260 546,273t20,27t15,30t13,30t11,31t9,34t14,33t9,33t-10,33t-6,33t11,32t-2,33t-7,33t11,33t6,32t-15,33t-11,16" stroke="#1f140d" stroke-width="1.9" opacity="0.85"/>
<g filter="url(#b5)" stroke-linecap="butt">
<path d="M181,513Q248,570 315,608" stroke="#0a0705" stroke-width="30" opacity="0.5"/>
<path d="M134,650Q193,700 252,731" stroke="#0a0705" stroke-width="30" opacity="0.5"/>
<path d="M216,449Q272,507 328,545" stroke="#c09670" stroke-width="15" opacity="0.3"/>
<path d="M150,579Q212,635 274,672" stroke="#c09670" stroke-width="15" opacity="0.3"/>
<path d="M125,722Q180,767 234,792" stroke="#c09670" stroke-width="15" opacity="0.3"/>
<path d="M664,476Q582,544 500,592" stroke="#0a0705" stroke-width="30" opacity="0.65"/>
<path d="M679,612Q593,669 506,706" stroke="#0a0705" stroke-width="30" opacity="0.65"/>
<path d="M640,411Q586,484 533,536" stroke="#cc9c6c" stroke-width="15" opacity="0.42"/>
<path d="M672,543Q570,608 469,653" stroke="#cc9c6c" stroke-width="15" opacity="0.42"/>
<path d="M680,687Q613,736 546,765" stroke="#cc9c6c" stroke-width="15" opacity="0.42"/>
</g>
<g filter="url(#b10)">
<path d="M398,178 Q396,215 398,258" stroke="#120c08" stroke-width="9" opacity="0.6"/>
<path d="M338,400 Q325,500 322,596" stroke="#100a07" stroke-width="30" opacity="0.75"/>
<path d="M545,500 Q520,580 476,640 Q500,690 540,750" stroke="#0e0906" stroke-width="46" opacity="0.8"/>
<path d="M640,430 Q676,520 680,660" stroke="#1a0e08" stroke-width="22" opacity="0.5"/>
<path d="M330,200 Q290,260 262,340" stroke="#8a6a58" stroke-width="22" opacity="0.3"/>
<path d="M470,205 Q540,250 590,330" stroke="#8a6a54" stroke-width="18" opacity="0.3"/>
</g>
</g>
<path d="M540,1083C539,1093 538,1120 543,1142C548,1164 553,1173 567,1194C581,1215 598,1230 613,1246C628,1262 624,1269 640,1275C656,1281 691,1286 692,1275C693,1264 664,1240 647,1218C630,1196 622,1182 606,1163C590,1144 578,1135 567,1121C556,1107 555,1102 550,1094C545,1086 541,1073 540,1083Z" fill="#7a4c30"/>
<path d="M338,440C328,453 335,469 330,520C325,571 315,561 322,592C329,623 322,599 351,614C380,629 376,625 408,638C440,651 428,651 446,652C464,653 454,657 462,640C470,623 465,625 470,600C475,575 481,579 478,566C475,553 488,572 462,560C436,548 434,557 400,530C366,503 381,510 360,480C339,450 348,427 338,440Z" fill="url(#neckg)"/>
<path d="M322,588C335,589 328,599 351,612C374,625 383,626 408,636C433,646 431,643 446,650C461,657 451,649 466,662C481,675 487,678 503,700C519,722 515,722 525,746C535,770 532,766 541,791C550,816 550,813 560,838C570,863 567,861 579,886C591,911 590,908 604,933C618,958 617,953 630,981C643,1009 638,1008 654,1038C670,1068 672,1064 689,1094C706,1124 701,1120 716,1149C731,1178 729,1173 744,1204C759,1235 763,1248 772,1267C781,1286 798,1273 776,1275C754,1277 722,1290 688,1275C654,1260 669,1248 647,1218C625,1188 627,1189 606,1163C585,1137 582,1139 567,1121C552,1103 561,1116 550,1094C539,1072 540,1067 526,1038C512,1009 511,1000 498,985C485,970 487,991 478,981C469,971 474,966 465,949C456,932 456,937 446,917C436,897 436,883 427,873C418,863 426,876 414,881C402,886 404,888 383,890C362,892 360,894 335,889C310,884 310,885 288,873C266,861 263,860 252,843C241,826 247,832 247,810C247,788 247,789 253,759C259,729 260,730 269,696C278,662 279,656 288,632C297,608 295,619 304,607C313,595 309,587 322,588Z" fill="url(#bodyg)"/>
<g clip-path="url(#bodyclip)" fill="none">
<ellipse cx="248" cy="800" rx="50" ry="170" fill="#7e4e32" opacity="0.4" filter="url(#b18)"/>
<ellipse cx="418" cy="858" rx="50" ry="38" fill="#80492e" opacity="0.6" filter="url(#b10)"/>
<path d="M395,829 Q415,850 428,874" stroke="#6a3a22" stroke-width="3" opacity="0.7" filter="url(#b2)"/>
<path d="M474,672 C522,730 562,850 642,1000 C692,1090 742,1200 777,1270" stroke="#e6a874" stroke-width="40" opacity="0.75" filter="url(#b10)"/>
<path d="M436,900 C470,960 520,1040 560,1110 C600,1170 650,1230 690,1275" stroke="#7c4c30" stroke-width="34" opacity="0.55" filter="url(#b10)"/>
<ellipse cx="326" cy="636" rx="42" ry="30" fill="#7c4c30" opacity="0.65" filter="url(#b10)"/>
<ellipse cx="340" cy="780" rx="50" ry="90" fill="#b87a52" opacity="0.35" filter="url(#b18)"/>
<rect x="400" y="940" width="450" height="340" fill="url(#armdk)"/>
</g>
<path d="M298,602 Q330,580 372,566 Q400,590 452,630" stroke="#0a0808" stroke-width="4.5" fill="none"/>
<path d="M446,289C475,289 463,285 487,295C511,305 502,301 519,320C536,339 529,330 538,353C547,376 543,367 546,390C549,413 548,400 548,422C548,444 549,434 545,457C541,480 544,470 537,492C530,514 534,504 523,522C512,540 517,532 504,546C491,560 498,554 484,563C470,572 477,570 462,572C447,574 456,575 440,568C424,561 432,566 414,551C396,536 404,544 386,524C368,504 374,513 361,490C348,467 353,484 346,455C339,426 339,430 339,404C339,378 337,404 346,378C355,352 349,352 367,325C385,298 373,308 399,296C425,284 417,289 446,289Z" fill="url(#faceg)"/>
<g clip-path="url(#faceclip)">
<ellipse cx="344" cy="470" rx="22" ry="95" fill="#86533a" opacity="0.5" filter="url(#b10)"/>
<ellipse cx="546" cy="505" rx="18" ry="80" fill="#7e4c32" opacity="0.6" filter="url(#b10)"/>
<ellipse cx="470" cy="582" rx="75" ry="18" fill="#7e4c32" opacity="0.65" filter="url(#b10)"/>
<ellipse cx="440" cy="328" rx="60" ry="24" fill="#eac09c" opacity="0.55" filter="url(#b10)"/>
<ellipse cx="412" cy="456" rx="34" ry="24" fill="#e2b08a" opacity="0.55" filter="url(#b10)"/>
<path d="M462,400 Q456,436 452,462" stroke="#b87850" stroke-width="9" fill="none" opacity="0.55" filter="url(#b5)"/>
<ellipse cx="479" cy="432" rx="6.5" ry="28" fill="#f4c8a0" opacity="0.75" filter="url(#b5)" transform="rotate(-8 479 432)"/>
<ellipse cx="481" cy="459" rx="11" ry="8" fill="#eeb88e" opacity="0.7" filter="url(#b2)"/>
<path d="M458,463 Q462,471 470,468 Q480,474 490,467 Q498,469 501,461" stroke="#8a5234" stroke-width="3.2" fill="none" opacity="0.75" filter="url(#b2)"/>
<ellipse cx="466" cy="467" rx="4.5" ry="2.6" fill="#4a2416" opacity="0.85" filter="url(#b2)"/><ellipse cx="492" cy="464.5" rx="3.6" ry="2.2" fill="#4a2416" opacity="0.8" filter="url(#b2)"/>
<ellipse cx="480" cy="482" rx="14" ry="6" fill="#b87850" opacity="0.45" filter="url(#b5)"/>
<ellipse cx="414" cy="397.5" rx="34" ry="16" fill="#6e4a3a" opacity="0.6" filter="url(#b5)"/>
<path d="M390,402.5 Q408.0,379.5 438,399.5 Q416,415.5 390,402.5Z" fill="#e2d2c8"/>
<clipPath id="ec414"><path d="M390,402.5 Q408.0,379.5 438,399.5 Q416,415.5 390,402.5Z"/></clipPath>
<g clip-path="url(#ec414)"><circle cx="414" cy="400.0" r="9.8" fill="#3a2014"/><circle cx="414" cy="400.0" r="4.9" fill="#0a0504"/><circle cx="416.8" cy="396.3" r="1.9" fill="#fff"/></g>
<path d="M387,403.5 Q408.0,377.0 441,398.0" stroke="#160c08" stroke-width="4.2" fill="none" stroke-linecap="round"/>
<path d="M391,405.0 Q416,417.0 438,402.0" stroke="#4a2c20" stroke-width="2" fill="none" opacity="0.85"/>
<ellipse cx="512" cy="383.5" rx="28.5" ry="16" fill="#6e4a3a" opacity="0.6" filter="url(#b5)"/>
<path d="M493.5,388.5 Q507.375,365.5 530.5,385.5 Q514,401.5 493.5,388.5Z" fill="#e2d2c8"/>
<clipPath id="ec512"><path d="M493.5,388.5 Q507.375,365.5 530.5,385.5 Q514,401.5 493.5,388.5Z"/></clipPath>
<g clip-path="url(#ec512)"><circle cx="512" cy="386.0" r="9.2" fill="#3a2014"/><circle cx="512" cy="386.0" r="4.6" fill="#0a0504"/><circle cx="514.8" cy="382.3" r="1.9" fill="#fff"/></g>
<path d="M490.5,389.5 Q507.375,363.0 533.5,384.0" stroke="#160c08" stroke-width="4.2" fill="none" stroke-linecap="round"/>
<path d="M494.5,391.0 Q514,403.0 530.5,388.0" stroke="#4a2c20" stroke-width="2" fill="none" opacity="0.85"/>
<path d="M371,386 Q392,371 418,373 Q438,376 454,381" stroke="#34201a" stroke-width="7" fill="none" stroke-linecap="round" opacity="0.92"/>
<path d="M494,375 Q516,360 539,358" stroke="#34201a" stroke-width="6" fill="none" stroke-linecap="round" opacity="0.92"/>
<path d="M430,497.500 Q452,489 468,493 Q482,487 511,489 Q490,499 470,500.500 Q450,503 430,497.500Z" fill="#c47674"/>
<path d="M430,497.500 Q450,503 470,500.500 Q490,499 511,489 Q500,512 474,516 Q448,514 430,497.500Z" fill="#e09896"/>
<path d="M430,497.500 Q450,503 470,500.500 Q490,499 511,489" stroke="#8a4440" stroke-width="1.800" fill="none"/>
<ellipse cx="474" cy="508.500" rx="17" ry="3.200" fill="#f2beb8" opacity="0.75" filter="url(#b2)"/>
<ellipse cx="476" cy="524" rx="20" ry="4" fill="#b87850" opacity="0.5" filter="url(#b5)"/>
</g>
<circle cx="322.5" cy="443.5" r="4" fill="#d8d0c0"/><circle cx="321.5" cy="442.5" r="1.6" fill="#fff"/>
<g fill="none" stroke-linecap="round">
<path d="M542,349Q549,378 552,398t1,41t-1,21M556,359Q563,389 565,409t3,41t1,22" stroke="#432c1c" stroke-width="1.5" opacity="0.85"/>
<path d="M557,386Q563,427 564,448t-2,41t-12,41t-9,21M546,353Q551,381 554,401t4,42t-2,42t-11,41t-8,21" stroke="#5f412a" stroke-width="1.5" opacity="0.85"/>
<path d="M517,307Q537,332 545,345t11,27t5,35t4,41t2,21M541,348Q549,380 552,399t3,40t-2,43t-11,40t-15,39t-4,20" stroke="#2e1e13" stroke-width="2.7" opacity="0.85"/>
<path d="M523,324Q538,348 543,362t7,35t2,41t-3,41t-1,22M508,303Q528,327 536,339t12,27t7,35t2,41t-3,41t-11,41t-7,20M555,359Q563,388 565,408t4,43t-3,44t-5,21M548,353Q555,381 558,402t3,43t-2,41t-11,41t-8,22" stroke="#432c1c" stroke-width="2.7" opacity="0.85"/>
<path d="M555,384Q560,424 562,445t-3,42t-4,21M542,349Q548,379 552,400t4,42t-3,42t-12,40t-8,19M511,306Q532,330 540,341t13,27t6,36t3,42t2,21M506,301Q524,327 532,338t13,26t8,35t3,41t-3,42t-11,41t-14,38t-5,18" stroke="#5f412a" stroke-width="2.1" opacity="0.85"/>
<path d="M550,355Q556,384 559,405t4,41t-4,42t-11,41t-7,20" stroke="#2e1e13" stroke-width="1.5" opacity="0.85"/>
<path d="M552,356Q559,387 562,408t4,42t1,20" stroke="#1f140d" stroke-width="1.5" opacity="0.85"/>
<path d="M514,308Q534,331 542,344t12,27t7,36t5,41t-4,43t-11,42t-6,20M521,311Q540,335 548,346t12,28t6,36t4,43t1,22M534,332Q551,355 555,369t6,37t5,43t-4,41t-5,20" stroke="#5f412a" stroke-width="2.7" opacity="0.85"/>
<path d="M541,349Q548,378 552,398t2,41t-2,41t-10,41t-15,40t-6,20" stroke="#2e1e13" stroke-width="2.1" opacity="0.85"/>
<path d="M522,325Q540,349 543,362t7,34t3,42t-1,42t-11,42t-15,38t-6,19M546,354Q555,383 558,403t2,41t-1,21M529,327Q543,353 547,367t8,34t3,41t-2,41t-11,42t-16,39t-6,18M527,327Q542,350 546,365t7,36t4,40t-3,41t-4,21" stroke="#1f140d" stroke-width="2.1" opacity="0.85"/>
<path d="M537,331Q553,359 557,372t6,34t3,43t1,22" stroke="#432c1c" stroke-width="2.1" opacity="0.85"/>
<path d="M672,574q18,5 22,30M269,310q-17,2 -21,32M288,263q-13,-2 -15,22M137,634q-20,8 -24,38M137,634q-7,2 -9,8M250,356q-15,5 -18,22M158,563q-10,-0 -12,10M179,517q-16,1 -19,27M126,709q-10,5 -12,18M300,241q-14,-3 -17,16M654,444q8,-4 9,15M259,333q-19,-3 -23,29M663,469q8,4 10,17M632,396q8,-0 10,19M278,286q-10,-3 -12,11M572,278q16,-2 19,27M192,495q-15,-3 -18,24M332,203q-11,8 -13,22M474,193q10,1 12,21M313,220q-20,-1 -24,27M621,372q12,-3 14,16M332,203q-15,0 -18,24M677,600q9,1 11,16M599,324q18,-1 21,22M129,684q-19,7 -23,36M497,205q8,-4 10,20M124,734q-16,-1 -19,35M621,372q14,7 17,33M250,356q-13,4 -16,25M241,380q-10,7 -12,20M241,380q-12,-1 -15,13M644,420q14,8 17,16M179,517q-20,4 -24,39M142,610q-7,-4 -9,17M497,205q7,4 9,12M632,396q9,-3 11,14M668,729q8,7 9,15M223,427q-12,4 -14,26M474,193q18,3 22,34M654,444q15,3 17,16M241,380q-18,5 -22,28M669,495q13,2 16,22M231,403q-15,2 -18,20M169,540q-17,4 -21,29M215,451q-11,4 -13,14M123,759q-19,4 -23,30M223,427q-12,-1 -15,23M259,333q-12,3 -14,17M278,286q-13,6 -16,29M241,380q-18,-3 -21,29" stroke="#7a5a44" stroke-width="0.9" opacity="0.55"/>
</g>
</symbol></defs></svg>
<svg width="0" height="0" style="left:0;top:0"><defs>
<radialGradient id="q_bg" cx="25" cy="250" r="170" gradientUnits="userSpaceOnUse"><stop offset="0" stop-color="#18141f"/><stop offset="1" stop-color="#060606" stop-opacity="0"/></radialGradient>
<radialGradient id="q_face" cx="130" cy="82" r="48" gradientUnits="userSpaceOnUse"><stop offset="0" stop-color="#fbd0aa"/><stop offset="0.6" stop-color="#f0b488"/><stop offset="1" stop-color="#b87648"/></radialGradient>
<linearGradient id="q_sk" x1="45" y1="170" x2="150" y2="235" gradientUnits="userSpaceOnUse"><stop offset="0" stop-color="#f6bc88"/><stop offset="0.3" stop-color="#eeaa74"/><stop offset="0.6" stop-color="#d08a58"/><stop offset="1" stop-color="#96592f"/></linearGradient>
<filter color-interpolation-filters="sRGB" id="q1" filterUnits="userSpaceOnUse" x="-30" y="-30" width="318" height="384"><feGaussianBlur stdDeviation="1"/></filter><filter color-interpolation-filters="sRGB" id="q3" filterUnits="userSpaceOnUse" x="-30" y="-30" width="318" height="384"><feGaussianBlur stdDeviation="3.5"/></filter>
<clipPath id="q_hc"><path d="M145,4C164,3 158,1 173,11C188,21 181,17 190,34C199,51 194,43 199,62C204,81 201,71 205,90C209,109 207,100 210,119C213,138 212,128 214,147C216,166 216,158 216,175C216,192 218,185 213,198C208,211 210,207 202,215C194,223 200,222 190,221C180,220 182,220 173,212C164,204 168,212 162,198C156,184 158,185 154,170C150,155 159,159 151,152C143,145 146,152 130,150C114,148 118,145 104,146C90,147 99,149 88,154C77,159 83,156 72,160C61,164 65,162 56,165C47,168 49,171 44,170C39,169 40,170 40,162C40,154 38,158 43,147C48,136 46,141 55,130C63,119 60,125 69,113C77,101 73,109 80,93C87,77 82,84 88,65C95,46 90,54 100,37C110,20 102,25 117,14C132,3 126,5 145,4Z"/></clipPath>
<symbol id="p2" viewBox="0 0 258 324">
<rect width="258" height="324" fill="#070707"/><rect width="258" height="324" fill="url(#q_bg)"/>
<path d="M145,4C164,3 158,1 173,11C188,21 181,17 190,34C199,51 194,43 199,62C204,81 201,71 205,90C209,109 207,100 210,119C213,138 212,128 214,147C216,166 216,158 216,175C216,192 218,185 213,198C208,211 210,207 202,215C194,223 200,222 190,221C180,220 182,220 173,212C164,204 168,212 162,198C156,184 158,185 154,170C150,155 159,159 151,152C143,145 146,152 130,150C114,148 118,145 104,146C90,147 99,149 88,154C77,159 83,156 72,160C61,164 65,162 56,165C47,168 49,171 44,170C39,169 40,170 40,162C40,154 38,158 43,147C48,136 46,141 55,130C63,119 60,125 69,113C77,101 73,109 80,93C87,77 82,84 88,65C95,46 90,54 100,37C110,20 102,25 117,14C132,3 126,5 145,4Z" fill="#2c1b12" filter="url(#q1)"/>
<g clip-path="url(#q_hc)" fill="none" stroke-linecap="round">
<path d="M141,18Q125,32 119,40t-11,18t-6,20t-2,18t-2,17t-5,16t-11,13t-12,11t-14,8t-9,5M105,69Q102,89 101,97t-2,17t-4,16t-2,8M109,32Q99,51 95,61t-6,19t-5,17t-7,17t-11,14t-8,7" stroke="#281911" stroke-width="1.5" opacity="0.85"/>
<path d="M125,29Q112,45 108,55t-7,20t-3,18t-3,17t-4,16t-3,8M143,9Q125,20 117,27t-12,17t-9,20t-5,20t-5,17t-6,15t-11,14t-11,13t-3,6M105,68Q102,89 100,97t-2,16t-4,16t-3,8" stroke="#281911" stroke-width="2.0" opacity="0.85"/>
<path d="M113,53Q106,71 105,81t-2,19t-1,17t-4,16t-4,7M140,22Q125,36 119,44t-9,18t-5,20t-2,19t-1,16t-4,16t-10,13t-13,10t-16,7t-10,3M125,33Q112,50 108,59t-5,20t-2,18t-2,17t-5,16t-10,14t-7,6M113,53Q106,71 105,82t-2,19t-1,16t-4,16t-11,13t-12,10t-16,7t-10,3M109,37Q101,55 97,66t-5,19t-4,17t-6,16t-3,8M125,35Q113,52 109,61t-5,20t-2,19t-1,16t0,9" stroke="#3a261a" stroke-width="1.5" opacity="0.85"/>
<path d="M143,11Q125,21 117,28t-12,17t-8,20t-5,20t-5,17t-6,16t-10,13t-8,7M106,70Q102,91 101,99t-1,16t-4,16t-10,14t-12,10t-15,7t-10,4M124,20Q110,35 104,44t-8,19t-5,20t-5,17t-7,16t-3,8M104,64Q99,84 98,92t-3,17t-6,16t-11,13t-7,7M109,34Q99,53 96,63t-5,19t-6,17t-3,9M144,11Q125,20 117,28t-12,18t-8,20t-5,19t-5,17t-3,8M101,58Q96,78 94,86t-5,17t-6,16t-10,14t-8,7" stroke="#503626" stroke-width="0.9" opacity="0.85"/>
<path d="M101,58Q94,78 93,86t-5,17t-5,16t-11,14t-11,13t-3,6M125,21Q110,37 105,46t-8,20t-5,19t-4,17t-6,16t-11,14t-12,13t-3,6" stroke="#503626" stroke-width="1.5" opacity="0.85"/>
<path d="M125,29Q112,46 108,55t-6,20t-3,18t-4,17t-2,9M144,6Q124,16 116,23t-13,16t-9,20t-6,20t-6,17t-7,16t-11,15t-11,13t-3,7M97,49Q90,70 87,78t-6,17t-7,16t-11,15t-8,7" stroke="#6a4a34" stroke-width="2.0" opacity="0.85"/>
<path d="M143,13Q125,23 118,31t-12,18t-8,19t-5,19t-3,18t-6,15t-11,14t-7,7M96,46Q89,67 86,76t-7,17t-7,16t-12,15t-10,14t-7,16t-4,9M98,51Q91,72 89,81t-5,17t-3,9" stroke="#866246" stroke-width="2.0" opacity="0.85"/>
<path d="M142,15Q124,27 118,35t-11,17t-7,20t-3,19t-4,17t-5,16t-10,14t-12,12t-4,5M103,62Q99,83 97,92t-4,16t-5,16t-10,14t-12,12t-4,5M126,35Q113,52 109,61t-5,20t-2,18t-1,17t-5,16t-11,13t-11,10t-16,7t-10,3M125,21Q110,35 105,45t-9,20t-5,19t-5,17t-5,16t-11,14t-12,13t-3,6" stroke="#281911" stroke-width="0.9" opacity="0.85"/>
<path d="M109,35Q100,54 96,64t-5,19t-6,17t-3,9M111,38Q101,58 98,68t-5,18t-4,17t-2,9M113,50Q105,69 103,79t-2,19t-2,17t-4,16t-10,13t-8,6M143,13Q124,24 117,32t-11,17t-7,20t-5,19t-3,17t-2,8M126,36Q114,53 110,62t-5,20t-2,19t-2,16t-3,15t-10,14t-8,6" stroke="#503626" stroke-width="2.0" opacity="0.85"/>
<path d="M105,68Q101,88 100,97t-2,17t-4,15t-10,14t-8,6M112,46Q104,65 102,75t-3,19t-2,17t-5,16t-4,8M143,11Q125,23 117,30t-12,16t-7,21t-5,19t-4,17t-6,16t-11,14t-8,6M100,55Q94,75 92,84t-5,17t-6,16t-11,14t-12,13t-3,6M140,20Q126,33 119,41t-11,18t-5,20t-2,19t-1,17t-4,16t-11,12t-12,10t-5,5M143,9Q124,19 117,26t-12,17t-9,20t-6,18t-5,18t-4,9" stroke="#3a261a" stroke-width="0.9" opacity="0.85"/>
<path d="M109,33Q99,51 96,61t-6,20t-6,17t-3,8M112,45Q104,64 101,74t-3,19t-3,17t-5,15t-11,14t-12,11t-13,10t-8,5M102,59Q96,80 94,88t-3,17t-6,16t-4,8M124,17Q109,32 104,42t-9,20t-5,19t-6,17t-6,15t-11,15t-12,14t-9,14t-6,7M99,52Q92,73 90,81t-6,17t-6,16t-10,15t-8,7M124,31Q113,47 108,56t-6,20t-3,19t-2,17t-5,16t-11,13t-11,10t-5,5" stroke="#6a4a34" stroke-width="1.5" opacity="0.85"/>
<path d="M145,7Q124,15 116,22t-13,17t-9,20t-6,19t-7,17t-6,16t-11,14t-12,14t-7,16t-5,8M108,27Q97,46 93,56t-7,20t-7,17t-7,16t-11,14t-11,15t-3,8" stroke="#866246" stroke-width="0.9" opacity="0.85"/>
<path d="M113,47Q104,67 102,77t-3,18t-2,17t0,9M97,47Q89,67 86,76t-6,17t-7,16t-12,15t-10,14t-3,8M109,30Q98,50 94,60t-5,19t-7,17t-4,8" stroke="#3a261a" stroke-width="2.0" opacity="0.85"/>
<path d="M145,6Q124,14 116,21t-13,17t-9,20t-6,19t-7,17t-4,9M143,10Q125,21 117,28t-12,18t-8,20t-5,18t-5,17t-2,9M145,6Q124,15 116,22t-13,17t-9,21t-6,18t-7,17t-6,16t-2,8M140,23Q125,37 119,45t-9,17t-5,20t-2,19t-1,17t-3,16t-11,13t-13,9t-5,4M143,11Q124,21 117,28t-12,18t-8,20t-5,18t-5,17t-6,16t-4,8" stroke="#6a4a34" stroke-width="0.9" opacity="0.85"/>
<path d="M100,54Q94,76 92,84t-5,17t-6,15t-11,15t-11,13t-4,6M110,37Q100,56 97,66t-4,19t-6,17t-5,16t-11,14t-8,7" stroke="#866246" stroke-width="1.5" opacity="0.85"/>
<path d="M163,45Q170,62 171,71t1,17t0,15t1,16t-2,15t-3,15t5,15t1,16t3,15t7,12t1,6M161,48Q167,65 168,74t2,17t-2,15t0,14t-1,15t-4,15t5,15t2,15t2,14t4,7M191,67Q195,83 194,92t4,17t1,16t0,17t4,17t-1,17t1,17t-5,15t-7,7M166,42Q173,60 175,69t2,17t-1,15t1,16t-1,15t-1,16t5,16t2,8M180,52Q186,71 187,79t0,17t3,16t0,16t0,17t4,17t1,8M158,52Q162,69 163,78t1,16t-3,14t0,15t-3,15t-4,14t5,14t2,15t4,13t10,12t6,6M174,80Q174,96 173,103t1,15t-2,15t-1,16t5,16t2,8M144,16Q154,29 159,36t8,16t5,18t1,17t0,16t2,15t-3,15t-2,15t4,8M145,6Q164,13 171,19t12,16t8,20t4,19t2,17t5,17t0,17t2,17t4,17t0,9M178,27Q187,45 190,55t5,19t2,16t5,17t1,18t1,17t4,18t-2,17t-1,8M179,25Q189,43 192,53t5,19t2,17t5,17t2,18t-3,9" stroke="#503626" stroke-width="1.5" opacity="0.85"/>
<path d="M183,74Q184,90 183,98t3,16t-1,16t-1,16t5,17t-1,16t2,15t0,13t-4,7M158,22Q170,37 174,46t6,18t3,17t0,17t3,15t-1,16t0,17t4,16t0,16t2,16t4,8M160,48Q166,66 167,75t0,16t-1,15t1,15t-3,14t-3,16t5,15t4,8M144,19Q151,35 155,42t6,17t4,18t2,16t-3,14t0,15t-2,14t-4,15t5,15t3,15t2,13t9,12t6,6M144,9Q160,18 166,25t11,17t7,18t4,18t1,16t3,17t1,16t-1,17t5,17t-1,16t-2,8M169,83Q168,98 167,106t1,15t-3,14t-4,8M161,70Q163,89 162,96t-3,14t0,14t-3,15t-4,14t5,14t2,14t4,13t11,12t6,6M187,70Q190,87 189,95t3,17t0,16t0,16t4,17t-1,16t2,16t4,8M174,80Q174,95 173,103t1,15t-1,15t-3,16t2,7M153,30Q162,46 165,54t5,18t2,16t-1,16t0,15t-1,15t-3,7M180,25Q190,43 193,53t5,18t3,18t5,17t1,17t2,18t3,17t-2,18t0,9M144,20Q151,34 155,42t7,16t4,18t0,16t-2,15t1,14t-3,15t-5,8M163,69Q165,87 164,94t-3,15t0,14t-3,14t-4,15t5,15t2,14t4,13t5,7M144,14Q156,25 161,32t10,16t6,19t2,17t-1,16t3,15t0,16t-2,17t4,15t0,15t2,16t5,8M173,33Q182,51 184,61t4,18t0,16t3,16t1,17t-3,9M198,63Q202,80 202,88t5,17t2,18t2,18t3,17t-1,9" stroke="#503626" stroke-width="1.0" opacity="0.85"/>
<path d="M148,39Q155,55 158,63t3,17t0,16t-3,14t-1,14t-3,14t-4,15t4,14t4,14t3,13t12,12t8,6" stroke="#281911" stroke-width="1.5" opacity="0.85"/>
<path d="M176,56Q181,75 181,83t0,16t2,16t-1,16t-3,8M179,77Q180,92 178,100t2,15t0,16t-2,16t5,16t0,15t-3,8M153,31Q163,45 166,54t5,18t2,17t-2,15t1,14t-1,16t-4,8M187,45Q194,65 196,73t1,18t4,17t1,17t1,17t4,9M163,14Q177,28 182,37t8,19t4,19t1,17t4,16t1,17t1,17t4,17t-1,18t1,16t-7,15t-7,8" stroke="#866246" stroke-width="2.1" opacity="0.85"/>
<path d="M151,34Q159,50 162,58t4,18t1,16t-2,15t-1,14t-2,15t-3,15t5,15t2,15t3,13t5,7M193,65Q196,83 196,91t5,17t1,17t2,17t3,17t-2,17t0,9M154,28Q165,44 168,52t5,18t1,17t-1,16t2,15t-2,15t-2,15t4,16t1,15t3,15t6,7M182,23Q192,41 195,51t6,19t2,17t5,18t2,18t2,17t4,18t-1,9M161,71Q162,88 161,95t-2,15t-1,14t-3,14t-4,8M181,52Q186,71 187,79t0,17t3,16t1,16t-1,17t4,17t0,15t-3,8M166,85Q166,100 164,107t-1,14t-2,15t-3,15t5,15t2,15t3,13t5,7" stroke="#6a4a34" stroke-width="2.1" opacity="0.85"/>
<path d="M164,88Q162,102 160,109t-1,15t-3,14t-3,15t5,15t2,13t-2,7M157,53Q162,69 163,78t0,16t-2,15t0,15t-3,14t-4,14t5,15t3,14t-2,7M163,88Q162,103 160,110t-1,14t-3,14t-5,15t5,14t4,14t-1,7M190,43Q197,64 198,72t2,18t4,17t2,17t2,17t3,18t-1,17t0,17t0,9M191,67Q194,84 194,92t4,16t1,17t1,17t5,9M156,24Q168,39 172,48t6,18t3,17t-1,17t2,15t0,16t-4,8M160,19Q172,33 176,42t8,19t4,18t0,17t4,16t0,16t-1,16t4,17t-1,17t2,15t-1,15t-5,7M188,46Q194,66 196,74t1,16t4,17t2,17t1,17t4,9M156,53Q162,70 163,78t0,16t-2,15t-1,14t-4,15t-3,14t2,7M178,26Q188,44 191,54t5,19t2,17t4,17t1,17t1,18t4,17t-1,17t0,17t-7,15t-8,8M175,30Q185,48 187,58t4,18t1,17t4,16t0,17t1,17t4,17t-1,17t1,16t3,9M178,26Q188,45 191,55t5,18t1,17t5,17t1,18t-3,9M172,33Q180,52 183,62t4,18t0,16t3,16t1,16t-3,9M183,49Q188,70 189,78t1,16t3,17t0,16t1,17t5,16t0,9M164,11Q180,24 185,33t8,20t5,18t2,18t5,18t1,17t2,17t4,18t-2,17t0,9M177,56Q181,75 182,83t0,15t2,16t0,16t-2,16t5,16t0,16t2,16t5,8" stroke="#6a4a34" stroke-width="1.5" opacity="0.85"/>
<path d="M189,69Q192,86 191,94t4,16t0,17t1,17t4,17t-1,16t0,8M165,43Q172,60 173,69t2,17t-1,16t2,15t-1,16t-3,8M166,66Q168,85 167,92t-2,15t1,14t-3,15t-3,15t5,14t1,15t4,15t9,12t4,5M152,32Q161,48 163,56t5,18t1,16t-1,15t0,15t-2,15t-2,16t5,15t0,15t3,13t6,7M159,21Q171,36 175,45t6,18t3,18t0,16t3,16t-1,17t-4,8M150,35Q158,51 161,59t4,17t1,16t-3,15t0,15t-3,15t-2,14t5,15t1,15t3,13t10,13t5,6" stroke="#866246" stroke-width="1.0" opacity="0.85"/>
<path d="M187,69Q191,87 190,95t4,16t0,16t0,17t5,9M163,45Q171,62 172,71t1,17t-1,15t1,15t-2,15t-2,16t5,16t0,14t3,15t6,7M174,33Q182,50 184,60t4,18t1,16t4,17t0,16t-3,9M144,21Q149,37 153,45t6,16t3,17t1,16t-3,15t-1,14t-2,15t-5,15t5,14t4,14t-1,8M170,37Q178,55 180,64t3,17t1,17t3,15t-2,16t0,17t5,16t0,8M144,15Q155,27 160,34t9,16t6,18t2,17t-1,16t2,16t-2,15t-1,16t5,15t-1,16t3,15t6,7M161,17Q174,31 178,40t7,19t5,17t1,17t3,17t1,17t1,16t4,17t-2,17t1,16t-3,15t-7,6M168,39Q176,57 178,66t2,17t0,16t2,16t-1,16t-3,8" stroke="#503626" stroke-width="2.1" opacity="0.85"/>
<path d="M175,79Q175,94 174,102t1,15t-1,15t-2,16t4,16t0,16t3,14t6,13t0,7M167,85Q167,99 165,107t0,15t-2,14t-3,15t5,15t2,14t-2,8M144,10Q159,21 165,27t11,16t6,19t3,18t1,16t3,16t0,17t-4,8M144,7Q162,14 169,21t13,16t7,19t5,18t1,17t4,17t1,17t1,17t5,17t0,9M144,19Q151,33 155,41t8,17t4,17t1,16t-3,15t0,15t-1,15t-4,15t5,15t3,15t-2,7M168,40Q174,58 176,67t4,17t-1,16t2,15t-1,16t-1,16t5,17t-1,15t-3,7M181,23Q191,42 194,52t6,19t2,17t5,17t3,17t0,18t4,18t-1,18t-2,9M167,42Q173,59 175,68t2,18t-1,15t2,16t0,16t-3,15t5,16t1,15t-3,8M163,45Q169,63 171,72t1,16t-2,16t2,15t-1,15t-4,7M159,51Q164,68 165,77t1,16t-3,15t1,14t-3,15t-4,14t5,15t4,8" stroke="#3a261a" stroke-width="1.5" opacity="0.85"/>
<path d="M172,34Q181,51 183,61t3,18t1,17t3,16t0,16t0,16t4,17t-1,16t-1,9M159,22Q170,37 174,45t6,18t3,18t0,17t3,15t0,16t-1,17t4,16t-1,16t-2,8M186,72Q188,88 186,96t3,17t1,16t-1,16t3,8M144,8Q163,15 169,22t12,16t9,19t4,18t1,17t4,17t1,17t2,16t3,17t-2,17t1,17t-6,15t-7,7M166,42Q173,59 175,68t2,17t-1,16t2,16t-1,15t-2,16t4,16t2,8M185,72Q188,88 187,96t3,17t0,15t-1,17t5,17t-2,16t2,16t-1,14t-5,7M165,10Q180,24 185,33t9,20t5,18t2,17t5,17t2,18t2,18t3,17t-2,18t0,17t-8,15t-8,8M144,12Q159,21 165,28t10,16t6,18t4,18t0,16t2,17t1,16t-1,17t5,16t2,8M161,18Q173,32 177,41t8,19t4,18t0,17t3,16t2,16t-1,17t5,17t-2,16t1,16t-2,15t-5,7M179,53Q184,73 185,80t0,16t2,17t1,16t-1,16t5,16t-1,17t-2,8M164,12Q179,26 184,35t7,19t5,18t3,17t4,18t1,17t1,17t4,18t-1,17t0,17t2,8M143,22Q148,39 151,46t6,16t4,17t-1,17t-2,15t0,14t-4,13t-4,14t5,15t3,14t-2,8M189,43Q196,64 198,72t1,17t5,18t2,17t1,17t5,9M144,11Q159,21 165,28t10,16t7,19t3,18t-1,16t3,16t1,16t-1,16t4,17t2,8M165,86Q164,101 162,108t1,15t-2,14t-4,7M161,18Q173,32 177,41t8,19t4,18t1,16t4,17t0,16t1,17t5,9M144,15Q155,29 160,36t8,16t5,18t2,16t-1,16t2,16t-1,15t-3,15t4,16t2,15t-2,8" stroke="#6a4a34" stroke-width="1.0" opacity="0.85"/>
<path d="M161,71Q163,88 162,95t-3,15t-1,14t-2,14t-4,14t-1,8M155,28Q165,43 168,51t6,18t1,17t-1,16t3,16t-2,15t-2,15t5,15t-1,16t4,15t6,7M169,63Q172,82 172,89t-2,14t1,16t-2,15t-1,15t5,16t0,15t3,14t6,13t0,6M144,6Q163,13 170,20t13,16t7,19t5,18t2,17t4,18t1,17t2,17t3,17t-2,18t0,9M166,86Q164,101 163,108t0,15t-3,14t-4,15t5,14t2,14t4,14t10,12t4,6M143,17Q153,31 157,39t8,16t4,18t2,16t-2,15t1,15t-1,16t-4,15t5,15t2,15t2,14t7,13t3,6M155,27Q165,42 169,50t6,18t2,18t-1,16t1,15t-1,15t-2,16t4,16t3,8" stroke="#3a261a" stroke-width="1.0" opacity="0.85"/>
<path d="M158,53Q162,70 163,78t0,16t-2,15t-1,14t-2,15t-4,14t4,15t4,14t2,13t11,12t7,6M184,72Q187,89 186,96t2,16t1,17t-1,16t4,16t3,9M143,14Q156,26 161,32t10,16t6,19t3,17t-1,16t2,15t-1,16t-3,9M165,10Q180,23 185,32t9,20t5,19t3,17t5,18t2,17t1,18t4,18t-1,9M152,34Q160,50 162,58t4,17t1,17t-2,14t1,15t-3,15t-3,15t5,15t1,14t4,14t6,7M162,88Q160,104 158,110t-1,14t-3,15t-4,14t5,14t3,14t3,14t5,6M181,22Q192,41 195,51t6,20t2,17t5,17t2,18t2,17t3,17t-2,18t0,18t0,9" stroke="#3a261a" stroke-width="2.1" opacity="0.85"/>
<path d="M173,81Q173,96 171,103t2,16t-1,15t-3,15t5,16t4,8M161,48Q167,66 168,75t1,16t-1,14t0,15t-3,15t-4,8M166,42Q173,59 174,68t2,17t0,16t1,16t-1,16t-1,15t2,8M159,20Q172,35 176,43t7,18t4,18t1,16t2,17t-1,16t1,17t4,17t-2,16t3,15t4,8M161,18Q174,31 179,40t7,19t4,18t1,17t3,17t1,16t0,16t3,9M148,38Q155,55 158,63t3,17t0,16t-4,15t0,14t-2,14t-4,8M144,8Q161,16 168,23t11,16t8,19t5,18t1,17t3,16t1,17t1,17t3,9M145,8Q163,15 169,22t12,17t7,18t3,18t2,17t4,17t0,17t2,17t3,17t-1,17t1,16t-5,15t-6,7M169,39Q177,56 179,65t2,18t0,16t2,16t0,16t-2,16t5,16t0,16t-2,8" stroke="#866246" stroke-width="1.5" opacity="0.85"/>
<g filter="url(#q3)"><path d="M160,70 Q162,120 156,170" stroke="#100804" stroke-width="10" opacity=".7"/><path d="M196,120 Q186,128 176,122 M206,160 Q190,170 170,160 M208,196 Q190,206 172,192" stroke="#0e0703" stroke-width="8" opacity=".55"/><path d="M200,100 Q186,108 170,100 M210,140 Q190,150 168,140 M212,180 Q192,190 170,178" stroke="#c08c60" stroke-width="6" opacity=".35"/><path d="M118,16 Q96,40 86,76" stroke="#a08068" stroke-width="8" opacity=".35"/></g>
</g>
<path d="M117,140C110,139 114,143 105,147C96,151 90,154 80,158C70,162 67,161 60,163C53,165 53,163 49,168C45,173 44,170 43,184C42,198 40,206 44,226C48,246 54,251 60,269C66,287 67,292 72,305C76,318 63,320 80,324C97,328 135,330 145,324C155,318 132,310 122,297C113,284 112,282 106,269C99,256 98,255 94,240C90,225 87,212 88,206C90,200 85,212 100,215C115,218 136,222 151,218C166,214 164,211 165,200C166,189 157,183 154,170C151,157 155,150 151,145C147,140 143,151 135,150C127,149 124,141 117,140Z" fill="url(#q_sk)"/>
<path d="M176,216C179,210 185,216 192,224C199,232 201,235 206,250C211,265 211,272 214,290C217,308 225,318 219,326C213,334 196,336 188,326C180,316 188,300 186,282C184,264 182,265 180,250C178,235 173,222 176,216Z" fill="#c88654"/>
<path d="M74,308C78,302 85,303 100,300C115,297 121,296 140,296C159,296 163,300 180,302C197,304 205,300 214,306C223,312 250,321 219,326C188,331 116,330 82,326C48,322 70,314 74,308Z" fill="#cc8c5c"/>
<ellipse cx="62" cy="178" rx="14" ry="10" fill="#fbd6b0" opacity=".8" filter="url(#q3)"/>
<ellipse cx="132" cy="140" rx="18" ry="9" fill="#8a5636" opacity=".8" filter="url(#q3)"/>
<path d="M88.5,131L92,131L105.5,169.6L151,218L168,196L195,225L203,326L145,326L122.5,297L105.5,269L94,240L88.5,206L97,170Z" fill="#070606" stroke="#070606" stroke-width="1.5" stroke-linejoin="round"/>
<path d="M108,148 L148,212" stroke="#c8a070" stroke-width="0.7" opacity=".7"/>
<path d="M132,48C142,48 140,47 148,52C156,57 153,54 157,64C161,74 160,70 160,82C160,94 161,89 158,100C155,111 157,106 152,114C147,122 149,119 143,124C137,129 140,128 133,128C126,128 129,129 122,124C115,119 117,122 112,114C107,106 108,111 106,100C104,89 104,94 105,82C106,70 105,74 109,64C113,54 110,57 118,52C126,47 122,48 132,48Z" fill="url(#q_face)"/>
<ellipse cx="109" cy="96" rx="6" ry="24" fill="#7a4a30" opacity=".5" filter="url(#q3)"/><ellipse cx="156" cy="98" rx="6" ry="24" fill="#7a4a30" opacity=".65" filter="url(#q3)"/>
<path d="M109,70 q8,-5 17,-1 M143,72 q8,-3 15,2" stroke="#3a2418" stroke-width="2.2" fill="none" stroke-linecap="round"/>
<ellipse cx="118.500" cy="76" rx="6" ry="3" fill="#2a1810"/><ellipse cx="152" cy="80.500" rx="5.500" ry="2.900" fill="#2a1810"/>
<ellipse cx="118.500" cy="76" rx="9" ry="5" fill="#5a3828" opacity=".45" filter="url(#q1)"/><ellipse cx="152" cy="80.500" rx="8" ry="5" fill="#5a3828" opacity=".45" filter="url(#q1)"/>
<path d="M138,82 q-2,10 -1,15 q4,3 8,-1" stroke="#b06c44" stroke-width="2" fill="none" opacity=".7" filter="url(#q1)"/>
<path d="M117,103 Q133,112 151,107 Q136,124 117,103Z" fill="#c0605e"/><path d="M120.500,105 Q134,111 148,107.500 Q136,118.500 120.500,105Z" fill="#f8f0ea"/>
</symbol></defs></svg>
<svg width="0" height="0" style="left:0;top:0"><defs><filter color-interpolation-filters="sRGB" id="r2" filterUnits="userSpaceOnUse" x="-30" y="-30" width="384" height="172"><feGaussianBlur stdDeviation="2"/></filter><filter color-interpolation-filters="sRGB" id="r5" filterUnits="userSpaceOnUse" x="-30" y="-30" width="384" height="172"><feGaussianBlur stdDeviation="5"/></filter><filter color-interpolation-filters="sRGB" id="r1" filterUnits="userSpaceOnUse" x="-30" y="-30" width="384" height="172"><feGaussianBlur stdDeviation="0.8"/></filter>
<linearGradient id="r_sk" x1="60" y1="112" x2="240" y2="0" gradientUnits="userSpaceOnUse"><stop offset="0" stop-color="#c08656"/><stop offset="0.5" stop-color="#dca274"/><stop offset="1" stop-color="#f0c098"/></linearGradient>
<clipPath id="r_c"><rect width="324" height="112"/></clipPath>
<symbol id="p3" viewBox="0 0 324 112"><g clip-path="url(#r_c)">
<rect width="324" height="112" fill="url(#r_sk)"/>
<path d="M-10,-10 H150 Q120,30 100,50 Q60,56 40,80 Q20,100 -10,120Z" fill="#4a332c" filter="url(#r5)"/>
<path d="M-5,40 Q40,36 110,50 M-5,70 Q50,60 100,70 M0,20 Q60,10 120,20" stroke="#6a4a48" stroke-width="7" fill="none" opacity=".6" filter="url(#r2)"/>
<path d="M-5,58 Q36,62 62,78 Q46,100 28,118 H-5Z" fill="#33211c" filter="url(#r5)"/>
<path d="M150,0 Q170,30 190,52 Q215,74 250,50 Q262,30 262,0Z" fill="#cc9064" filter="url(#r2)"/>
<ellipse cx="216" cy="20" rx="38" ry="30" fill="#f0c49e" filter="url(#r2)"/>
<path d="M192,46 Q214,62 240,42 Q246,56 238,70 Q212,76 194,60Z" fill="#4a2a1a" opacity=".85" filter="url(#r2)"/>
<path d="M190,3 Q214,0 246,6 Q232,22 214,22 Q198,18 190,3Z" fill="#d68a92" filter="url(#r1)"/><path d="M192,4 Q216,9 245,6" stroke="#9a5058" stroke-width="1.600" fill="none" filter="url(#r1)"/>
<path d="M262,-5 Q250,30 246,60 Q240,90 230,116 H300 Q312,60 306,-5Z" fill="#4a3226" filter="url(#r2)"/>
<path d="M268,0 Q258,40 262,80 Q262,100 256,114 M282,0 Q276,40 284,76 Q288,96 282,114 M296,0 Q292,40 298,70" stroke="#7a5640" stroke-width="4" fill="none" opacity=".7" filter="url(#r1)"/>
<path d="M150,60 Q200,76 226,112 L200,116 Q180,84 150,60Z" fill="#5a4048" opacity=".85" filter="url(#r2)"/>
<path d="M300,-5 Q316,30 304,60 Q298,90 300,116 H330 V-5Z" fill="#9aa43c" filter="url(#r2)"/><ellipse cx="316" cy="40" rx="10" ry="26" fill="#c6cc58" filter="url(#r2)"/><ellipse cx="318" cy="98" rx="10" ry="16" fill="#7c8a30" filter="url(#r2)"/>
<path d="M80,51 Q104,62 116,84 Q126,100 136,114" stroke="#140e0c" stroke-width="5.500" fill="none" filter="url(#r1)"/>
<path d="M114,52 Q130,80 150,112" stroke="#d8b078" stroke-width="0.900" fill="none" opacity=".8"/>
<path d="M64,114 Q120,80 178,56" stroke="#8c9470" stroke-width="6" fill="none" opacity=".9" filter="url(#r1)"/>
<path d="M30,40 Q110,44 170,62 Q200,80 214,114" stroke="#5e4652" stroke-width="8" fill="none" opacity=".75" filter="url(#r2)"/>
<g fill="#b4b662" opacity=".9" filter="url(#r1)"><circle cx="76" cy="49" r="3.1"/><circle cx="92" cy="23" r="2.3"/><circle cx="109" cy="17" r="1.7"/><circle cx="50" cy="61" r="2.5"/><circle cx="-1" cy="104" r="3.1"/><circle cx="81" cy="34" r="1.7"/><circle cx="64" cy="35" r="3.0"/><circle cx="21" cy="96" r="3.0"/><circle cx="43" cy="79" r="2.7"/><circle cx="33" cy="91" r="3.1"/><circle cx="98" cy="13" r="1.8"/><circle cx="11" cy="90" r="2.5"/><circle cx="7" cy="106" r="2.0"/><circle cx="93" cy="20" r="2.3"/><circle cx="73" cy="44" r="1.5"/><circle cx="92" cy="22" r="2.8"/><circle cx="45" cy="62" r="1.6"/><circle cx="31" cy="85" r="2.8"/><circle cx="113" cy="9" r="2.1"/><circle cx="66" cy="47" r="2.8"/><circle cx="97" cy="17" r="3.1"/><circle cx="10" cy="101" r="3.1"/><circle cx="48" cy="74" r="2.0"/><circle cx="32" cy="68" r="1.8"/><circle cx="88" cy="31" r="1.6"/><circle cx="112" cy="4" r="1.9"/><circle cx="74" cy="46" r="2.2"/><circle cx="17" cy="95" r="2.3"/><circle cx="89" cy="25" r="3.1"/><circle cx="78" cy="36" r="2.2"/><circle cx="26" cy="90" r="2.3"/><circle cx="119" cy="13" r="2.3"/><circle cx="61" cy="57" r="2.0"/><circle cx="41" cy="64" r="3.2"/><circle cx="111" cy="8" r="2.1"/><circle cx="9" cy="105" r="3.0"/><circle cx="48" cy="76" r="2.7"/><circle cx="81" cy="37" r="2.7"/><circle cx="34" cy="84" r="2.7"/><circle cx="43" cy="81" r="2.5"/><circle cx="5" cy="103" r="2.6"/><circle cx="60" cy="63" r="2.9"/><circle cx="44" cy="77" r="2.9"/><circle cx="48" cy="79" r="2.7"/><circle cx="119" cy="7" r="2.4"/><circle cx="27" cy="99" r="2.3"/><circle cx="83" cy="41" r="1.8"/><circle cx="90" cy="30" r="2.2"/><circle cx="77" cy="46" r="2.7"/><circle cx="-0" cy="105" r="2.6"/><circle cx="30" cy="88" r="1.6"/><circle cx="50" cy="51" r="1.7"/><circle cx="32" cy="70" r="1.6"/><circle cx="52" cy="62" r="2.5"/><circle cx="36" cy="75" r="2.2"/><circle cx="32" cy="73" r="2.9"/><circle cx="36" cy="72" r="1.7"/><circle cx="60" cy="53" r="3.1"/><circle cx="92" cy="29" r="2.6"/><circle cx="37" cy="72" r="2.5"/><circle cx="117" cy="10" r="2.1"/><circle cx="92" cy="8" r="2.5"/><circle cx="64" cy="47" r="3.0"/><circle cx="43" cy="65" r="2.0"/><circle cx="108" cy="15" r="3.1"/><circle cx="64" cy="55" r="2.3"/><circle cx="45" cy="74" r="2.3"/><circle cx="34" cy="72" r="2.6"/><circle cx="48" cy="68" r="2.9"/><circle cx="5" cy="104" r="3.1"/></g>
<path d="M6,112 Q40,70 70,40 Q90,20 110,2" stroke="#a0a050" stroke-width="3" fill="none" opacity=".8" filter="url(#r1)"/>
</g></symbol></defs></svg>
<div class="teal" style="left:15px;top:86px;width:334px;height:117px"></div>
<svg style="left:20px;top:86px" width="324" height="112" viewBox="0 0 324 112"><use href="#p3" width="324" height="112"/></svg>
<div class="abs" style="left:364px;top:98px;width:14px;height:107px;border-radius:7px;background:#c1c1c1"></div>
<svg style="left:0;top:0" width="386" height="1430"><path d="M279.8,221.1L281.9,225.4L286.7,226.1L283.3,229.5L284.1,234.3L279.8,232.1L275.5,234.3L276.3,229.5L272.9,226.1L277.7,225.4ZM299.9,221.1L302.0,225.4L306.8,226.1L303.4,229.5L304.2,234.3L299.9,232.1L295.6,234.3L296.4,229.5L293.0,226.1L297.8,225.4ZM320.0,221.1L322.1,225.4L326.9,226.1L323.5,229.5L324.3,234.3L320.0,232.1L315.7,234.3L316.5,229.5L313.1,226.1L317.9,225.4ZM340.1,221.1L342.2,225.4L347.0,226.1L343.6,229.5L344.4,234.3L340.1,232.1L335.8,234.3L336.6,229.5L333.2,226.1L338.0,225.4Z" fill="#4b4b4b" stroke="#4b4b4b" stroke-width="1.2" stroke-linejoin="round"/></svg>
<div class="fn" style="left:82px;top:248.5px">269244_1148.JPG</div>
<div class="teal" style="left:48px;top:283.5px;width:268px;height:334px"></div>
<svg style="left:53px;top:288.5px" width="258" height="324" viewBox="0 0 258 324"><use href="#p2" width="258" height="324"/></svg>
<div class="badge" style="border-top:1px solid #fbfbfb;border-left:1px solid #fbfbfb;left:268px;top:594.0px;width:90px;height:26px"></div>
<svg style="left:0;top:0" width="386" height="1430"><path d="M279.8,602.4L281.9,606.7L286.7,607.4L283.3,610.8L284.1,615.6L279.8,613.4L275.5,615.6L276.3,610.8L272.9,607.4L277.7,606.7ZM299.9,602.4L302.0,606.7L306.8,607.4L303.4,610.8L304.2,615.6L299.9,613.4L295.6,615.6L296.4,610.8L293.0,607.4L297.8,606.7ZM320.0,602.4L322.1,606.7L326.9,607.4L323.5,610.8L324.3,615.6L320.0,613.4L315.7,615.6L316.5,610.8L313.1,607.4L317.9,606.7ZM340.1,602.4L342.2,606.7L347.0,607.4L343.6,610.8L344.4,615.6L340.1,613.4L335.8,615.6L336.6,610.8L333.2,607.4L338.0,606.7Z" fill="#4b4b4b" stroke="#4b4b4b" stroke-width="1.2" stroke-linejoin="round"/></svg>
<div class="fn" style="left:82px;top:630.0px">269244_1133.JPG</div>
<div class="teal" style="left:48px;top:664.8px;width:268px;height:334px"></div>
<svg style="left:53px;top:669.8px" width="258" height="324" viewBox="0 0 258 324"><use href="#p2" width="258" height="324"/></svg>
<div class="badge" style="border-top:1px solid #fbfbfb;border-left:1px solid #fbfbfb;left:268px;top:975.3px;width:90px;height:26px"></div>
<svg style="left:0;top:0" width="386" height="1430"><path d="M279.8,983.7L281.9,988.0L286.7,988.7L283.3,992.1L284.1,996.9L279.8,994.6L275.5,996.9L276.3,992.1L272.9,988.7L277.7,988.0ZM299.9,983.7L302.0,988.0L306.8,988.7L303.4,992.1L304.2,996.9L299.9,994.6L295.6,996.9L296.4,992.1L293.0,988.7L297.8,988.0ZM320.0,983.7L322.1,988.0L326.9,988.7L323.5,992.1L324.3,996.9L320.0,994.6L315.7,996.9L316.5,992.1L313.1,988.7L317.9,988.0ZM340.1,983.7L342.2,988.0L347.0,988.7L343.6,992.1L344.4,996.9L340.1,994.6L335.8,996.9L336.6,992.1L333.2,988.7L338.0,988.0Z" fill="#4b4b4b" stroke="#4b4b4b" stroke-width="1.2" stroke-linejoin="round"/></svg>
<div class="fn" style="left:82px;top:1011.3px">269244_1132.JPG</div>
<div class="abs" style="left:9px;top:1039.6px;width:347px;height:347px;border:4px solid #1f78f8"></div>
<div class="teal" style="left:48px;top:1046.1px;width:268px;height:334px"></div>
<svg style="left:53px;top:1051.1px;overflow:hidden" width="258" height="324" viewBox="68 126 683 857" preserveAspectRatio="none"><use href="#p1" x="0" y="0" width="847" height="1270"/></svg>
<div class="badge" style="border-top:1px solid #fbfbfb;border-left:1px solid #fbfbfb;left:268px;top:1356.6px;width:83px;height:24px"></div>
<svg style="left:0;top:0" width="386" height="1430"><path d="M279.8,1365.0L281.9,1369.3L286.7,1370.0L283.3,1373.4L284.1,1378.2L279.8,1376.0L275.5,1378.2L276.3,1373.4L272.9,1370.0L277.7,1369.3ZM299.9,1365.0L302.0,1369.3L306.8,1370.0L303.4,1373.4L304.2,1378.2L299.9,1376.0L295.6,1378.2L296.4,1373.4L293.0,1370.0L297.8,1369.3ZM320.0,1365.0L322.1,1369.3L326.9,1370.0L323.5,1373.4L324.3,1378.2L320.0,1376.0L315.7,1378.2L316.5,1373.4L313.1,1370.0L317.9,1369.3ZM340.1,1365.0L342.2,1369.3L347.0,1370.0L343.6,1373.4L344.4,1378.2L340.1,1376.0L335.8,1378.2L336.6,1373.4L333.2,1370.0L338.0,1369.3Z" fill="#4b4b4b" stroke="#4b4b4b" stroke-width="1.2" stroke-linejoin="round"/></svg>
<div class="fn" style="left:82px;top:1392.6px">269244_1126.JPG</div>
<svg style="left:332px;top:1047px" width="17" height="15" viewBox="0 0 17 15" fill="none" stroke="#7d7d7d" stroke-width="1.3"><path d="M1.5,1h14q1,0 1,1v10q0,1 -1,1q-2,1.2 -3.5,0q-1.7,-1 -3.4,0q-1.7,1 -3.4,0q-1.7,-1 -3.2,0q-.7,0 -.7,-1v-10q0,-1 1,-1z"/><rect x="3.3" y="3" width="4.6" height="7.5"/><rect x="9.6" y="3" width="4" height="3"/><rect x="9.6" y="7.5" width="4" height="3"/></svg>
<div class="t" style="left:24.0px;top:1443.8px;font-size:20.3px;line-height:24.36px;letter-spacing:0.37px;color:#222;">Set 1 - All Images</div>
<div class="hs" style="left:7px;top:1481px;width:374px;background:#b5b5b5"></div>
<svg style="left:0px;top:1497px" width="70" height="44" viewBox="0 0 70 44" ><rect x="19.7" y="1.2" width="8" height="8" fill="#6c6c6c"/><rect x="31.3" y="1.9" width="6.4" height="6.4" fill="none" stroke="#6c6c6c" stroke-width="1.6"/><rect x="42.2" y="1.9" width="6.4" height="6.4" fill="none" stroke="#6c6c6c" stroke-width="1.6"/><rect x="53.1" y="1.9" width="6.4" height="6.4" fill="none" stroke="#6c6c6c" stroke-width="1.6"/><rect x="19.7" y="12.1" width="8" height="8" fill="#6c6c6c"/><rect x="31.3" y="12.8" width="6.4" height="6.4" fill="none" stroke="#6c6c6c" stroke-width="1.6"/><rect x="42.2" y="12.8" width="6.4" height="6.4" fill="none" stroke="#6c6c6c" stroke-width="1.6"/><rect x="53.1" y="12.8" width="6.4" height="6.4" fill="none" stroke="#6c6c6c" stroke-width="1.6"/><rect x="19.7" y="23.0" width="8" height="8" fill="#6c6c6c"/><rect x="31.3" y="23.7" width="6.4" height="6.4" fill="none" stroke="#6c6c6c" stroke-width="1.6"/><rect x="42.2" y="23.7" width="6.4" height="6.4" fill="none" stroke="#6c6c6c" stroke-width="1.6"/><rect x="53.1" y="23.7" width="6.4" height="6.4" fill="none" stroke="#6c6c6c" stroke-width="1.6"/><rect x="19.7" y="33.9" width="8" height="8" fill="#6c6c6c"/><rect x="31.3" y="34.6" width="6.4" height="6.4" fill="none" stroke="#6c6c6c" stroke-width="1.6"/><rect x="42.2" y="34.6" width="6.4" height="6.4" fill="none" stroke="#6c6c6c" stroke-width="1.6"/><rect x="53.1" y="34.6" width="6.4" height="6.4" fill="none" stroke="#6c6c6c" stroke-width="1.6"/></svg>
<div class="vs" style="left:81px;top:1490px;height:57px;background:#b2b2b2"></div>
<svg style="left:100px;top:1496px" width="44" height="46" viewBox="0 0 44 46" ><path d="M3,3.2 H40 L25.5,23.5 V39 L17.5,42 V23.5 Z" fill="none" stroke="#6c6c6c" stroke-width="2.2" stroke-linejoin="round"/></svg>
<div class="vs" style="left:484px;top:4px;height:67px;background:#b2b2b2"></div>
<div class="vs" style="left:565px;top:4px;height:67px;background:#b2b2b2"></div>
<div class="vs" style="left:646.2px;top:4px;height:67px;background:#b2b2b2"></div>
<svg style="left:416.5px;top:17px" width="50" height="36" viewBox="0 0 50 36" ><rect x="9.5" y="8" width="35" height="22.5" rx="2.5" fill="none" stroke="#6c6c6c" stroke-width="2"/><path d="M10.5,9.5 L27,22 L43.5,9.5 M10.5,29.5 L22.5,18.7 M43.5,29.5 L31.5,18.7" fill="none" stroke="#6c6c6c" stroke-width="2"/><circle cx="14.5" cy="8" r="9.3" fill="#bfa032"/><text x="14.5" y="13.5" font-size="15" text-anchor="middle" fill="#1a1a1a" font-family="Liberation Sans">1</text></svg>
<svg style="left:505.5px;top:18px" width="40" height="40" viewBox="0 0 40 40" ><rect x="7.7" y="1" width="30" height="19.5" rx="2" fill="none" stroke="#6c6c6c" stroke-width="2"/><rect x="1.2" y="11" width="31" height="19.8" rx="2" fill="#e2e2e2" stroke="#6c6c6c" stroke-width="2"/><path d="M13,31.6 h7.6 l3.4,6 h-14.4z" fill="#6c6c6c"/></svg>
<svg style="left:592px;top:18.3px" width="28" height="38" viewBox="0 0 28 38" ><path d="M3,10 h10.5 L25,1.5 V36.5 L13.5,27.8 H3 a2,2 0 0 1 -2,-2 V12 a2,2 0 0 1 2,-2z M13.5,10 V27.8" fill="none" stroke="#6c6c6c" stroke-width="2" stroke-linejoin="round"/></svg>
<svg style="left:667.8px;top:18.3px" width="38" height="38" viewBox="0 0 38 38" ><rect x="1" y="1" width="35" height="35" fill="none" stroke="#6c6c6c" stroke-width="1.8" stroke-dasharray="5.2,3.3"/><circle cx="20.2" cy="14.6" r="3.2" fill="none" stroke="#6c6c6c" stroke-width="1.7"/><path d="M1.5,27.5 L10,18 L24.5,35 M17.5,27 L26,20.5 L35.5,30" fill="none" stroke="#6c6c6c" stroke-width="1.9" stroke-linejoin="round"/></svg>
<svg style="left:710.5px;top:3.5px" width="11" height="11" viewBox="0 0 11 11" ><path d="M0,0H10.3V9.8Z" fill="#a3a3a3"/></svg>
<svg style="left:730.2px;top:27px" width="36" height="27" viewBox="0 0 36 27" ><rect x="1.2" y="1.2" width="32.4" height="24" fill="none" stroke="#6c6c6c" stroke-width="2.3" stroke-dasharray="5.6,3.4" stroke-dashoffset="2.8"/><text x="17.6" y="19.3" font-size="17" text-anchor="middle" fill="#b3b3b3" font-family="Liberation Sans">4</text></svg>
<svg style="left:777.6px;top:27px" width="36" height="27" viewBox="0 0 36 27" ><rect x="1.2" y="1.2" width="32.4" height="24" fill="none" stroke="#6c6c6c" stroke-width="2.3" stroke-dasharray="5.6,3.4" stroke-dashoffset="2.8"/><text x="17.6" y="19.3" font-size="17" text-anchor="middle" fill="#b3b3b3" font-family="Liberation Sans">1</text></svg>
<svg style="left:824.8px;top:27px" width="36" height="27" viewBox="0 0 36 27" ><rect x="1.2" y="1.2" width="32.4" height="24" fill="none" stroke="#6c6c6c" stroke-width="2.3" stroke-dasharray="5.6,3.4" stroke-dashoffset="2.8"/><text x="17.6" y="19.3" font-size="17" text-anchor="middle" fill="#b3b3b3" font-family="Liberation Sans">2</text></svg>
<div class="vs" style="left:1754.7px;top:4px;height:66px;background:#b2b2b2"></div>
<div class="vs" style="left:1972.2px;top:4px;height:66px;background:#b2b2b2"></div>
<div class="vs" style="left:2170px;top:4px;height:66px;background:#b2b2b2"></div>
<div class="vs" style="left:2360.4px;top:4px;height:66px;background:#b2b2b2"></div>
<svg style="left:1589.7px;top:22.2px" width="40" height="29" viewBox="0 0 40 29" ><rect x="1" y="1" width="38" height="27" fill="none" stroke="#2a8cff" stroke-width="1.8"/><circle cx="21.3" cy="8.3" r="3.2" fill="none" stroke="#2a8cff" stroke-width="1.7"/><path d="M1.5,20 L13.5,11 L27,27.5 M19.5,18.5 L27,13.5 L38.5,23.5" fill="none" stroke="#2a8cff" stroke-width="1.8" stroke-linejoin="round"/></svg>
<div class="t" style="left:1660.6px;top:25.0px;font-size:20.3px;line-height:24.36px;letter-spacing:-0.70px;color:#1661bd;">Images</div>
<svg style="left:1790px;top:19.6px" width="42" height="36" viewBox="0 0 42 36" ><path d="M3,1.2 H37 q2,0 1.6,2 q-1,4 0,8 q1,5 0,10 q-0.8,4 0,8 q0.4,2.5 -2,2.5 q-7,-0.5 -11,0.2 q-3.5,2.4 -7,0 q-5,-0.8 -13.6,-0.2 q-1.8,0 -1.8,-2 V3 q0,-1.8 1.8,-1.8z" fill="none" stroke="#6c6c6c" stroke-width="2.2" stroke-linejoin="round"/><rect x="6" y="6.2" width="12" height="21.5" fill="none" stroke="#6c6c6c" stroke-width="1.6"/><rect x="22" y="6.2" width="11.5" height="8.2" fill="none" stroke="#6c6c6c" stroke-width="1.6"/><rect x="22" y="19" width="11.5" height="8.7" fill="none" stroke="#6c6c6c" stroke-width="1.6"/></svg>
<div class="t" style="left:1862.0px;top:25.0px;font-size:20.3px;line-height:24.36px;letter-spacing:-0.24px;color:#222;">Products</div>
<svg style="left:1998px;top:19.5px" width="62" height="36" viewBox="0 0 62 36" ><path d="M9,13 V7 q0,-5.5 6,-5.5 H45 q6,0 6,5.5 V13" fill="none" stroke="#6c6c6c" stroke-width="1.9"/><path d="M23.5,1.5 V17 M37,1.5 V17" stroke="#6c6c6c" stroke-width="1.9"/><path d="M8,30 q-3.5,0 -3.5,-3.5 v-4 q-3.6,-1.5 -3.6,-5.2 q0,-5.3 5.2,-5.3 q5,0 5,5.3 V17.5 H49 v-0.2 q0,-5.3 5,-5.3 q5.200,0 5.2,5.3 q0,3.700 -3.6,5.200 v4 q0,3.500 -3.500,3.500z M6.500,22 q3,-0.500 4.500,-4.500 M53.500,22 q-3,-0.500 -4.500,-4.500" fill="none" stroke="#6c6c6c" stroke-width="1.900" stroke-linejoin="round"/><path d="M10,30.5 v2.800 M50,30.500 v2.800" stroke="#6c6c6c" stroke-width="2.4"/></svg>
<div class="t" style="left:2078.2px;top:25.0px;font-size:20.3px;line-height:24.36px;letter-spacing:-0.70px;color:#222;">Rooms</div>
<svg style="left:2204.6px;top:22.2px" width="42" height="30" viewBox="0 0 42 30" ><path d="M5.500,1.200 V24.500 q9,-0.500 15,2.800 V5 q-6,-4 -15,-3.800z M36,1.200 V24.500 q-9,-0.500 -15,2.800 V5 q6,-4 15,-3.800z" fill="none" stroke="#6c6c6c" stroke-width="1.700" stroke-linejoin="round"/><path d="M1.200,6.500 V28 H18.500 M40.300,6.500 V28 H23" fill="none" stroke="#6c6c6c" stroke-width="1.700"/></svg>
<div class="t" style="left:2276.4px;top:25.0px;font-size:20.3px;line-height:24.36px;letter-spacing:-0.70px;color:#222;">Books</div>
<svg style="left:2395.8px;top:21px" width="42" height="33" viewBox="0 0 42 33" ><path d="M0.500,1.200 H40.500" stroke="#6c6c6c" stroke-width="2"/><path d="M4,1.500 V24.500 H37 V1.500" fill="none" stroke="#6c6c6c" stroke-width="2.100"/><path d="M20.500,24.500 V31 M14.500,31.200 H26.500" stroke="#6c6c6c" stroke-width="2"/><path d="M16.500,8 L25.500,12.800 L16.500,17.600z" fill="none" stroke="#6c6c6c" stroke-width="1.800" stroke-linejoin="round"/></svg>
<div class="t" style="left:2467.3px;top:25.0px;font-size:20.3px;line-height:24.36px;letter-spacing:-0.50px;color:#222;">Slideshows</div>
<div class="abs" style="left:1033px;top:110px;width:849px;height:1272px;background:#fafafa"></div>
<svg style="left:1034px;top:111px" width="847" height="1270" viewBox="0 0 847 1270"><use href="#p1" width="847" height="1270"/>
<path d="M0,0H847V1270H0Z M64,122V984H755V122Z" fill="#000" fill-opacity="0.5" fill-rule="evenodd"/>
<rect x="66" y="124" width="687" height="858" fill="none" stroke="#00ffff" stroke-width="4"/>
<rect x="64" y="122" width="17" height="17" fill="#00ffff"/><rect x="738" y="122" width="17" height="17" fill="#00ffff"/>
<rect x="64" y="967" width="17" height="17" fill="#00ffff"/><rect x="738" y="967" width="17" height="17" fill="#00ffff"/>
<rect x="329" y="951" width="160" height="31" fill="#000" stroke="#00ffff" stroke-width="4"/>
<text x="409" y="975" text-anchor="middle" font-family="Liberation Sans" font-size="21.7" fill="#fff" stroke="#fff" stroke-width="0.4">1:1.25 (8x10)</text>
</svg>

<svg style="left:0;top:0" width="2600" height="1554"><path d="M2536.5,166.4 H2595.5" stroke="#bcbcbc" stroke-width="1.8"/><path d="M2536.5,236.8 H2595.5" stroke="#bcbcbc" stroke-width="1.8"/><path d="M2536.5,307.6 H2595.5" stroke="#bcbcbc" stroke-width="1.8"/><path d="M2536.5,378.7 H2595.5" stroke="#bcbcbc" stroke-width="1.8"/><path d="M2536.5,537.1 H2595.5" stroke="#bcbcbc" stroke-width="1.8"/><path d="M2536.5,608.4 H2595.5" stroke="#bcbcbc" stroke-width="1.8"/><path d="M2536.5,679 H2595.5" stroke="#bcbcbc" stroke-width="1.8"/><path d="M2536.5,749.8 H2595.5" stroke="#bcbcbc" stroke-width="1.8"/><path d="M2536.5,820.6 H2595.5" stroke="#bcbcbc" stroke-width="1.8"/><path d="M2536.5,891.7 H2595.5" stroke="#bcbcbc" stroke-width="1.8"/><path d="M2536.5,1050.5 H2595.5" stroke="#bcbcbc" stroke-width="1.8"/><path d="M2536.5,1121 H2595.5" stroke="#bcbcbc" stroke-width="1.8"/><path d="M2536.5,1192 H2595.5" stroke="#bcbcbc" stroke-width="1.8"/><path d="M2536.5,1350 H2595.5" stroke="#bcbcbc" stroke-width="1.8"/><path d="M2583.8,172.5 h9.3 v9.3z" fill="#a6a6a6"/><path d="M2583.8,313.5 h9.3 v9.3z" fill="#a6a6a6"/><path d="M2583.8,384.5 h9.3 v9.3z" fill="#a6a6a6"/><path d="M2583.8,1127 h9.3 v9.3z" fill="#a6a6a6"/><path d="M2583.8,1286 h9.3 v9.3z" fill="#a6a6a6"/><path d="M2583.8,1356 h9.3 v9.3z" fill="#a6a6a6"/><path d="M2536.2,1245.8 v9.6 h9.6z" fill="#a6a6a6"/><rect x="2547.2" y="112.3" width="9.8" height="9.8" rx="1.6" fill="#6c6c6c"/><rect x="2559.8" y="112.3" width="9.8" height="9.8" rx="1.6" fill="#6c6c6c"/><rect x="2572.5" y="112.3" width="9.8" height="9.8" rx="1.6" fill="#6c6c6c"/><rect x="2547.2" y="125.0" width="9.8" height="9.8" rx="1.6" fill="#6c6c6c"/><rect x="2559.8" y="125.0" width="9.8" height="9.8" rx="1.6" fill="#6c6c6c"/><rect x="2572.5" y="125.0" width="9.8" height="9.8" rx="1.6" fill="#6c6c6c"/><rect x="2547.2" y="137.6" width="9.8" height="9.8" rx="1.6" fill="#6c6c6c"/><rect x="2559.8" y="137.6" width="9.8" height="9.8" rx="1.6" fill="#6c6c6c"/><rect x="2572.5" y="137.6" width="9.8" height="9.8" rx="1.6" fill="#6c6c6c"/><path d="M2546.9,200.2 Q2564.5,178.5 2582.1,200.2 Q2564.5,221.900 2546.9,200.2z" fill="none" stroke="#6c6c6c" stroke-width="1.8" stroke-linejoin="round"/><circle cx="2564.5" cy="200.2" r="8.2" fill="none" stroke="#6c6c6c" stroke-width="1.7"/><circle cx="2564.3" cy="200" r="2.3" fill="#6c6c6c"/><path d="M2554.6,255.8 V281.8 H2575.6 M2548.5,261.8 H2574.6 V287.8 M2578.8,281.8 H2580.6" fill="none" stroke="#2a86ff" stroke-width="3.5" stroke-linecap="round" stroke-linejoin="miter"/><rect x="2547.7" y="333.5" width="33.6" height="17.6" rx="1.5" fill="none" stroke="#6c6c6c" stroke-width="2"/><path d="M2553.5,334 v6.5 M2559,334 v9.5 M2564.5,334 v6.5 M2570,334 v9.500 M2575.5,334 v6.5" stroke="#6c6c6c" stroke-width="1.7"/><rect x="2548.3" y="397.3" width="32.6" height="32.6" rx="4.5" fill="none" stroke="#6c6c6c" stroke-width="2.3"/><path d="M2559.2,405.5 L2572.3,413.600 L2559.2,421.7z" fill="#6c6c6c" stroke="#6c6c6c" stroke-width="1.600" stroke-linejoin="round"/><path d="M2554.6,485.3 V511.3 H2575.6 M2548.5,491.3 H2574.6 V517.3 M2578.8,511.3 H2580.6" fill="none" stroke="#6c6c6c" stroke-width="3.5" stroke-linecap="round" stroke-linejoin="miter"/><path d="M2559.7,501.300 h10 M2564.7,496.300 v10" stroke="#6c6c6c" stroke-width="1.700"/><path d="M2554.6,555.9 V581.9 H2575.6 M2548.5,561.9 H2574.6 V587.9 M2578.8,581.9 H2580.6" fill="none" stroke="#6c6c6c" stroke-width="3.5" stroke-linecap="round" stroke-linejoin="miter"/><path d="M2559.7,572 h10" stroke="#6c6c6c" stroke-width="1.700"/><rect x="2552.2" y="641.800" width="23.800" height="17.200" rx="3" fill="none" stroke="#6c6c6c" stroke-width="1.900"/><path d="M2554.600,641.500 V637 a9.500,9.500 0 0 1 19,0 V641.500 M2557.500,641.500 V637.300 a6.600,6.600 0 0 1 13.200,0 V641.500" fill="none" stroke="#6c6c6c" stroke-width="1.500"/><circle cx="2564.100" cy="648.600" r="1.600" fill="none" stroke="#6c6c6c" stroke-width="1.300"/><path d="M2564.100,650.200 v3.300" stroke="#6c6c6c" stroke-width="1.400"/><path d="M2561,727.200 H2580 V696.600 H2548.300 V720" fill="none" stroke="#6c6c6c" stroke-width="1.700"/><circle cx="2569" cy="704.200" r="3.900" fill="#6c6c6c"/><path d="M2553.400,728.700 L2561.500,712" stroke="#6c6c6c" stroke-width="6.500" stroke-linecap="round"/><path d="M2556,701.800 Q2562,706 2564,710 Q2569,712 2573.600,715.500" stroke="#6c6c6c" stroke-width="3.600" fill="none" stroke-linecap="round"/><path d="M2567.300,798 H2548.300 V767.300 H2580 V791" fill="none" stroke="#6c6c6c" stroke-width="1.700"/><circle cx="2559.300" cy="775.200" r="3.900" fill="#6c6c6c"/><path d="M2575,799.500 L2566.800,783" stroke="#6c6c6c" stroke-width="6.500" stroke-linecap="round"/><path d="M2572.600,776.300 Q2566,779 2564.300,782 Q2559,784 2554.800,787.300" stroke="#6c6c6c" stroke-width="3.600" fill="none" stroke-linecap="round"/><rect x="2562.300" y="857.300" width="15.400" height="14" rx="3" fill="none" stroke="#6c6c6c" stroke-width="2.200"/><path d="M2551.200,862.300 V856 q0,-9 9,-9 H2571" fill="none" stroke="#6c6c6c" stroke-width="2.200" stroke-linecap="round"/><path d="M2566.300,840.800 L2572.300,847 L2566.300,853.200" fill="none" stroke="#6c6c6c" stroke-width="2.200" stroke-linecap="round" stroke-linejoin="round"/><path d="M2553,926.200 H2576 M2564.400,911.800 V940" stroke="#6c6c6c" stroke-width="3.400"/><path d="M2547,926.200 l8.500,-7.200 v14.400z M2582,926.200 l-8.500,-7.200 v14.400z" fill="#6c6c6c"/><path d="M2549.500,999.800 H2579.500 q2,0 1.500,2 q-1.200,4 0,7.500 q1.200,4 0,8 q-1,3.500 0,7.500 q0.300,2.200 -2,2.200 q-6,-0.600 -9.500,0.200 q-3,2.200 -6,0 q-4.500,-0.800 -13.500,-0.200 q-1.800,0 -1.800,-1.800 V1001.600 q0,-1.800 1.800,-1.800z" fill="none" stroke="#6c6c6c" stroke-width="2.100" stroke-linejoin="round"/><path d="M2555.300,1013.500 h16.400 M2563.500,1005.300 v16.400" stroke="#6c6c6c" stroke-width="2.400"/><path d="M2553,1095 H2548.200 V1068.500 H2574.800 V1074" fill="none" stroke="#6c6c6c" stroke-width="1.900"/><rect x="2553.700" y="1075" width="26" height="26" fill="none" stroke="#6c6c6c" stroke-width="2"/><path d="M2561.800,1088 h10 M2566.800,1083 v10" stroke="#6c6c6c" stroke-width="1.700"/><path d="M2553,1140 H2569.500 L2577.800,1148.300 V1169.500 q0,2 -2,2 H2553 q-2,0 -2,-2 V1142 q0,-2 2,-2z M2569,1140.500 V1148.800 H2577.500" fill="none" stroke="#6c6c6c" stroke-width="2.500" stroke-linejoin="round"/><path d="M2556.500,1148.700 h6.500 M2556.500,1154.700 h16.500 M2556.500,1160.500 h16.500 M2556.500,1166.200 h16.500" stroke="#6c6c6c" stroke-width="2"/><path d="M2547.500,1210 L2553.500,1211.300 L2559,1233 H2577.500 M2555.300,1218.500 H2581 L2577.300,1229.500 H2558" fill="none" stroke="#6c6c6c" stroke-width="1.800" stroke-linejoin="round"/><circle cx="2562.300" cy="1239.600" r="2.700" fill="none" stroke="#6c6c6c" stroke-width="1.700"/><circle cx="2574" cy="1239.600" r="2.700" fill="none" stroke="#6c6c6c" stroke-width="1.700"/><path d="M2551.500,1300 L2577,1312.400 L2551.500,1324.800z" fill="#6c6c6c"/><path d="M2576,1370 L2550.300,1382.600 L2576,1395.200z" fill="#6c6c6c"/></svg>
<svg style="left:441px;top:1447px" width="19" height="18" viewBox="0 0 19 18" ><rect x="1" y="1" width="16.600" height="15.600" fill="none" stroke="#6c6c6c" stroke-width="1.800"/><rect x="4.200" y="4.200" width="10.200" height="3.200" fill="#6c6c6c" opacity=".85"/><rect x="4.200" y="9.400" width="4" height="4.400" fill="#6c6c6c" opacity=".85"/><rect x="10.400" y="9.400" width="4" height="4.400" fill="#6c6c6c" opacity=".85"/></svg>
<svg style="left:439.5px;top:1481px" width="24" height="24" viewBox="0 0 24 24" ><rect x="0.300" y="1" width="13" height="13" fill="#a9a9a9"/><g transform="rotate(-14 12 11)"><rect x="4.500" y="3.500" width="15" height="15" fill="#e2e2e2" stroke="#6c6c6c" stroke-width="2"/><rect x="8" y="7" width="6.500" height="6.500" fill="#8f8f8f"/></g></svg>
<svg style="left:440px;top:1517.5px" width="22" height="20" viewBox="0 0 22 20" ><path d="M1,1.200 q4.500,2.600 9.600,0 q5,2.600 9.600,0 q-2.200,4.300 0,8.600 q-2.200,4.300 0,8.600 q-4.600,-2.600 -9.600,0 q-5,-2.600 -9.600,0 q2.200,-4.300 0,-8.600 q2.200,-4.300 0,-8.600z" fill="#6c6c6c"/><rect x="4.600" y="5" width="12" height="10" fill="#e2e2e2"/></svg>
<div class="t" style="left:488.8px;top:1444.2px;font-size:21.6px;line-height:25.92px;letter-spacing:0.23px;color:#222;">None</div>
<div class="t" style="left:488.8px;top:1479.6px;font-size:21.6px;line-height:25.92px;letter-spacing:0.23px;color:#222;">None</div>
<div class="t" style="left:488.8px;top:1515.0px;font-size:21.6px;line-height:25.92px;letter-spacing:0.23px;color:#222;">None</div>
<div class="t" style="left:1371.0px;top:1445.1px;font-size:20.6px;line-height:24.72px;letter-spacing:0.25px;color:#2a2a2a;">269244_1126.JPG</div>
<div class="t" style="left:2356.0px;top:1444.2px;font-size:21.6px;line-height:25.92px;letter-spacing:0.77px;color:#222;">Scaled to fit</div>
<div class="t" style="left:2320.5px;top:1515.2px;font-size:21.6px;line-height:25.92px;letter-spacing:0.73px;color:#222;">Custom Print</div>
<svg style="left:2458.5px;top:1524.5px" width="12" height="8" viewBox="0 0 12 8" ><path d="M0.500,0.500 H10.300 L5.400,6.800z" fill="#555"/></svg>
<svg style="left:0;top:0" width="2600" height="1554"><path d="M1410.3,1520.2L1412.4,1524.5L1417.2,1525.2L1413.8,1528.6L1414.6,1533.4L1410.3,1531.2L1406.0,1533.4L1406.8,1528.6L1403.4,1525.2L1408.2,1524.5ZM1434.0,1520.2L1436.1,1524.5L1440.9,1525.2L1437.5,1528.6L1438.3,1533.4L1434.0,1531.2L1429.7,1533.4L1430.5,1528.6L1427.1,1525.2L1431.9,1524.5ZM1457.7,1520.2L1459.8,1524.5L1464.6,1525.2L1461.2,1528.6L1462.0,1533.4L1457.7,1531.2L1453.4,1533.4L1454.2,1528.6L1450.8,1525.2L1455.6,1524.5ZM1481.4,1520.2L1483.5,1524.5L1488.3,1525.2L1484.9,1528.6L1485.7,1533.4L1481.4,1531.2L1477.1,1533.4L1477.9,1528.6L1474.5,1525.2L1479.3,1524.5Z" fill="#4b4b4b" stroke="#4b4b4b" stroke-width="1.200" stroke-linejoin="round"/><path d="M1505.1,1520.3L1507.3,1524.5L1511.9,1525.3L1508.6,1528.6L1509.3,1533.3L1505.1,1531.2L1500.9,1533.3L1501.6,1528.6L1498.3,1525.3L1502.9,1524.5Z" fill="none" stroke="#4b4b4b" stroke-width="1.500" stroke-linejoin="round"/></svg>
<svg style="left:0;top:0" width="2600" height="1554"><defs><filter color-interpolation-filters="sRGB" id="ash" x="-10%" y="-30%" width="120%" height="170%"><feGaussianBlur stdDeviation="3.5"/></filter></defs><path d="M2238.1,384.1 L2499.2,280.7 L2483.1,271.2 L2535.5,274.8 L2503.3,310.5 L2507.6,294.0 L2242.9,396.3 A6.5,6.5 0 0 1 2238.1,384.1Z" fill="#000" opacity="0.45" filter="url(#ash)" transform="translate(2,6)"/><path d="M2238.1,384.1 L2499.2,280.7 L2483.1,271.2 L2535.5,274.8 L2503.3,310.5 L2507.6,294.0 L2242.9,396.3 A6.5,6.5 0 0 1 2238.1,384.1Z" fill="#f53f42"/></svg>
</div>
</body></html>
